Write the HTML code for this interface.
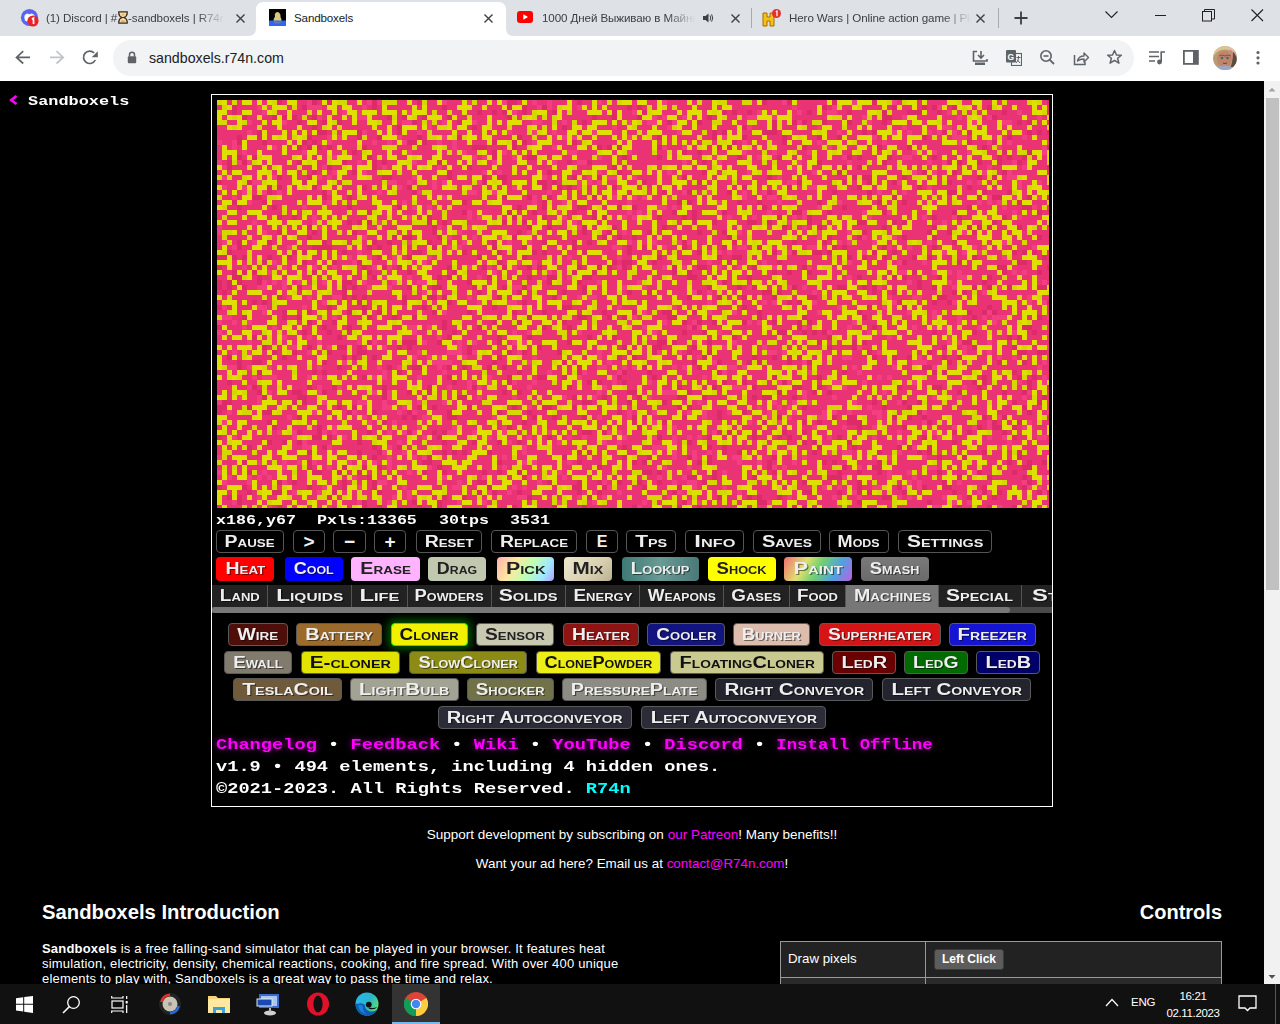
<!DOCTYPE html><html><head><meta charset="utf-8"><title>Sandboxels</title><style>
*{box-sizing:border-box}
html,body{margin:0;padding:0}
body{width:1280px;height:1024px;overflow:hidden;position:relative;background:#000;font-family:"Liberation Sans",sans-serif}
.a{position:absolute}
.px{font-family:"Liberation Mono",monospace;font-weight:bold;white-space:nowrap}
.sx{display:inline-block;transform-origin:0 50%}
.btn{position:absolute;border:1px solid #5a5a5a;border-radius:4px;display:flex;align-items:center;justify-content:center;overflow:visible}
.btn span,.cat span{font-family:"Liberation Sans",sans-serif;font-weight:bold;font-variant:small-caps;font-size:16px;white-space:nowrap;display:inline-block;text-shadow:1px 1px 0 rgba(0,0,0,.5);line-height:1}
.cat{position:absolute;height:22px;display:flex;align-items:center;justify-content:center;border-right:1px solid #555}
</style></head><body><div class="a" style="left:0;top:0;width:1280px;height:36px;background:#dee1e6"></div><div class="a" style="left:0;top:36px;width:1280px;height:45px;background:#fff"></div><svg class="a" style="left:248px;top:0" width="266" height="36"><path d="M0 36 Q8 36 8 28 V10 Q8 2 16 2 H250 Q258 2 258 10 V28 Q258 36 266 36 Z" fill="#fff"/></svg><svg class="a" style="left:20px;top:8px" width="20" height="20"><circle cx="9.5" cy="9.5" r="8.6" fill="#5865f2"/><path d="M4.5 7.5 Q6 5.5 8 5.6 L8.6 6.3 Q9.5 6.1 10.4 6.3 L11 5.6 Q13 5.5 14.5 7.5 Q15 10.5 14 12.5 Q12.5 13.6 11.5 13.6 L11 12.8 Q9.5 13.2 8 12.8 L7.5 13.6 Q6.5 13.6 5 12.5 Q4 10.5 4.5 7.5Z" fill="#fff"/><circle cx="13" cy="13" r="5.6" fill="#e5252a" stroke="#dee1e6" stroke-width="0"/><path d="M11.9 11.3 L13.5 10.2 V16" stroke="#fff" stroke-width="1.7" fill="none"/></svg><div class="a" style="left:46px;top:11px;width:178px;height:17px;overflow:hidden;font-size:11.6px;letter-spacing:-0.1px;color:#3c4043;white-space:nowrap;-webkit-mask-image:linear-gradient(90deg,#000 85%,transparent)">(1) Discord | #<svg width="10" height="13" style="vertical-align:-2px;margin:0 0.5px"><path d="M0.8 0.8 H9.2 V2.2 Q9 5.5 5.8 6.5 Q9 7.5 9.2 10.8 V12.2 H0.8 V10.8 Q1 7.5 4.2 6.5 Q1 5.5 0.8 2.2Z" fill="#f3d9a0" stroke="#3a2a20" stroke-width="1.3"/><path d="M2.5 10.8 Q5 8 7.5 10.8Z M3.3 3.5 H6.7 Q5 5.5 3.3 3.5Z" fill="#e09a40"/></svg>-sandboxels | R74n</div><svg class="a" style="left:235px;top:13px" width="11" height="11"><path d="M1.5 1.5 L9.5 9.5 M9.5 1.5 L1.5 9.5" stroke="#3c4043" stroke-width="1.4"/></svg><svg class="a" style="left:269px;top:9px" width="17" height="17"><rect width="17" height="17" fill="#000"/><path d="M4.5 13 Q4.5 9 6 7.5 Q5 5 7 3.5 Q8.5 2.5 10 3.5 Q12 5 11.5 8 Q13 10 12.5 13Z" fill="#d9c77e"/><rect y="11.5" width="17" height="5.5" fill="#2f65f5"/><path d="M5 12 Q8.5 13.5 12 12 V14 Q8.5 15 5 14Z" fill="#6a7ab0"/></svg><div class="a" style="left:294px;top:11px;font-size:11.6px;letter-spacing:-0.15px;color:#202124;white-space:nowrap">Sandboxels</div><svg class="a" style="left:483px;top:13px" width="11" height="11"><path d="M1.5 1.5 L9.5 9.5 M9.5 1.5 L1.5 9.5" stroke="#3c4043" stroke-width="1.4"/></svg><svg class="a" style="left:517px;top:11px" width="17" height="13"><rect width="16" height="12" rx="3" fill="#ff0000"/><path d="M6.3 3.3 L11 6 L6.3 8.7Z" fill="#fff"/></svg><div class="a" style="left:542px;top:11px;width:153px;height:17px;overflow:hidden;font-size:11.6px;letter-spacing:-0.1px;color:#3c4043;white-space:nowrap;-webkit-mask-image:linear-gradient(90deg,#000 82%,transparent)">1000 Дней Выживаю в Майнкрафт</div><svg class="a" style="left:702px;top:12px" width="12" height="12"><path d="M1 4 H3.5 L6.5 1.5 V10.5 L3.5 8 H1Z" fill="#3c4043"/><path d="M8 3.5 Q9.5 6 8 8.5 M9.6 2.3 Q11.8 6 9.6 9.7" stroke="#3c4043" stroke-width="1" fill="none"/></svg><svg class="a" style="left:730px;top:13px" width="11" height="11"><path d="M1.5 1.5 L9.5 9.5 M9.5 1.5 L1.5 9.5" stroke="#3c4043" stroke-width="1.4"/></svg><div class="a" style="left:751px;top:8px;width:1px;height:20px;background:#a8abaf"></div><svg class="a" style="left:761px;top:8px" width="22" height="20"><path d="M2 5 H6 V9 H9 V5 H13 V18 H9 V13 H6 V18 H2Z" fill="#f2c21a" stroke="#a86a00" stroke-width="1"/><circle cx="15.5" cy="5.5" r="4.5" fill="#e0322a"/><path d="M14.8 3.8 L16 3 V8.2" stroke="#fff" stroke-width="1.2" fill="none"/></svg><div class="a" style="left:789px;top:11px;width:182px;height:17px;overflow:hidden;font-size:11.6px;letter-spacing:-0.1px;color:#3c4043;white-space:nowrap;-webkit-mask-image:linear-gradient(90deg,#000 85%,transparent)">Hero Wars | Online action game | Play</div><svg class="a" style="left:975px;top:13px" width="11" height="11"><path d="M1.5 1.5 L9.5 9.5 M9.5 1.5 L1.5 9.5" stroke="#3c4043" stroke-width="1.4"/></svg><div class="a" style="left:998px;top:8px;width:1px;height:20px;background:#a8abaf"></div><svg class="a" style="left:1013px;top:10px" width="16" height="16"><path d="M8 1.5 V14.5 M1.5 8 H14.5" stroke="#3c4043" stroke-width="1.8"/></svg><svg class="a" style="left:1104px;top:10px" width="16" height="10"><path d="M1.5 1.5 L7.5 7.5 L13.5 1.5" stroke="#202124" stroke-width="1.1" fill="none"/></svg><div class="a" style="left:1155px;top:15px;width:11px;height:1px;background:#202124"></div><svg class="a" style="left:1202px;top:9px" width="14" height="13"><rect x="0.5" y="2.5" width="9" height="9.5" fill="none" stroke="#202124" stroke-width="1"/><path d="M2.5 2.5 V0.5 H12.5 V10 H9.5" fill="none" stroke="#202124" stroke-width="1"/></svg><svg class="a" style="left:1251px;top:9px" width="13" height="13"><path d="M0.5 0.5 L12 12 M12 0.5 L0.5 12" stroke="#202124" stroke-width="1.1"/></svg><svg class="a" style="left:14px;top:49px" width="18" height="17"><path d="M2.2 8.4 H16 M9.2 2.2 L2.5 8.4 L9.2 14.5" stroke="#5f6368" stroke-width="1.7" fill="none"/></svg><svg class="a" style="left:48px;top:49px" width="18" height="17"><path d="M2 8.4 H15.5 M8.5 2.2 L15.2 8.4 L8.5 14.5" stroke="#c1c4c8" stroke-width="1.7" fill="none"/></svg><svg class="a" style="left:81px;top:49px" width="18" height="17"><path d="M14.3 11 A6.2 6.2 0 1 1 13.2 4" stroke="#5f6368" stroke-width="1.7" fill="none"/><path d="M16.8 2.2 V8.3 H10.7Z" fill="#5f6368"/></svg><div class="a" style="left:113px;top:40px;width:1021px;height:36px;background:#f1f3f4;border-radius:18px"></div><svg class="a" style="left:127px;top:51px" width="10" height="13"><path d="M2.5 5.5 V3.8 A2.5 2.5 0 0 1 7.5 3.8 V5.5" stroke="#5f6368" stroke-width="1.5" fill="none"/><rect x="0.8" y="5.3" width="8.4" height="7" rx="1" fill="#5f6368"/></svg><div class="a" style="left:149px;top:50px;font-size:14.2px;color:#202124;white-space:nowrap">sandboxels.r74n.com</div><svg class="a" style="left:972px;top:50px" width="17" height="16"><path d="M5 1.5 H1.5 V11 H15 V9" stroke="#5f6368" stroke-width="1.6" fill="none"/><path d="M9 1 V7.5 M6 5 L9 8 L12 5" stroke="#5f6368" stroke-width="1.6" fill="none"/><rect x="3" y="12.5" width="10" height="2.5" fill="#5f6368"/></svg><svg class="a" style="left:1006px;top:50px" width="16" height="16"><rect x="5.5" y="3.5" width="10" height="12" fill="#f1f3f4" stroke="#5f6368" stroke-width="1.1"/><rect x="0" y="0" width="10" height="12.5" rx="1" fill="#5f6368"/><text x="1.6" y="9.8" font-size="8.5" font-family="Liberation Sans" font-weight="bold" fill="#fff">G</text><path d="M10.5 7.5 H14.5 M12.5 6 V7.5 Q12.5 11 10 13 M11.5 10 L14 13" stroke="#5f6368" stroke-width="1" fill="none"/></svg><svg class="a" style="left:1039px;top:49px" width="16" height="16"><circle cx="7" cy="7" r="5.2" stroke="#5f6368" stroke-width="1.6" fill="none"/><path d="M4.5 7 H9.5" stroke="#5f6368" stroke-width="1.6"/><path d="M10.8 10.8 L15 15" stroke="#5f6368" stroke-width="1.8"/></svg><svg class="a" style="left:1073px;top:50px" width="17" height="16"><path d="M1.5 5 V14.5 H12 V12" stroke="#5f6368" stroke-width="1.5" fill="none"/><path d="M4.5 11 Q5.5 6 11 6 V3 L15.5 7.5 L11 12 V9 Q7 9 4.5 11Z" stroke="#5f6368" stroke-width="1.4" fill="none" stroke-linejoin="round"/></svg><svg class="a" style="left:1106px;top:49px" width="17" height="16"><path d="M8.5 1.5 L10.5 6 L15.3 6.2 L11.6 9.3 L12.9 14.2 L8.5 11.4 L4.1 14.2 L5.4 9.3 L1.7 6.2 L6.5 6 Z" stroke="#5f6368" stroke-width="1.5" fill="none" stroke-linejoin="round"/></svg><svg class="a" style="left:1148px;top:50px" width="19" height="15"><path d="M1 2 H11 M1 6.5 H11 M1 11 H7" stroke="#5f6368" stroke-width="1.6"/><path d="M13.2 12 V2 H17" stroke="#5f6368" stroke-width="1.6" fill="none"/><circle cx="11.5" cy="12" r="2.4" fill="#5f6368"/></svg><svg class="a" style="left:1183px;top:50px" width="16" height="15"><rect x="0.9" y="0.9" width="14" height="13" fill="none" stroke="#5f6368" stroke-width="1.8"/><rect x="10" y="1" width="5" height="13" fill="#5f6368"/></svg><svg class="a" style="left:1213px;top:46px" width="24" height="24"><defs><clipPath id="av"><circle cx="12" cy="12" r="12"/></clipPath></defs><g clip-path="url(#av)"><rect width="24" height="24" fill="#b89a78"/><path d="M0 0 H24 V8 Q16 2 8 4 Q2 6 0 12Z" fill="#dcc594"/><path d="M20 6 Q24 10 24 16 V24 H16 Q20 18 20 6Z" fill="#5a4a40"/><ellipse cx="11.5" cy="13" rx="7.5" ry="8" fill="#c28468"/><path d="M6 10 Q9 8 12 10 Q15 8 18 10" stroke="#8a5040" stroke-width="1" fill="none"/><circle cx="9" cy="12" r="1.3" fill="#3c6a70"/><circle cx="14.5" cy="12" r="1.3" fill="#3c6a70"/><path d="M10 17 Q12 18 14 17" stroke="#7a3a30" stroke-width="1" fill="none"/><path d="M4 21 Q12 18 19 21 V24 H4Z" fill="#9aa8c8"/><path d="M17 4 Q20 6 19 9" stroke="#e070a0" stroke-width="1.3" fill="none"/></g></svg><svg class="a" style="left:1255px;top:50px" width="6" height="16"><circle cx="3" cy="2.5" r="1.6" fill="#5f6368"/><circle cx="3" cy="7.8" r="1.6" fill="#5f6368"/><circle cx="3" cy="13" r="1.6" fill="#5f6368"/></svg><svg width="832" height="408" style="position:absolute;left:217px;top:100px;display:block" shape-rendering="crispEdges"><rect width="832" height="408" fill="#ea3374"/><path fill="#dd2b6a" d="M60 0h5v5h-5zM95 0h5v5h-5zM110 0h5v5h-5zM155 0h5v5h-5zM200 0h5v5h-5zM290 0h5v5h-5zM295 0h5v5h-5zM360 0h5v5h-5zM545 0h5v5h-5zM570 0h5v5h-5zM615 0h5v5h-5zM655 0h5v5h-5zM830 0h5v5h-5zM15 5h5v5h-5zM85 5h5v5h-5zM155 5h5v5h-5zM225 5h5v5h-5zM290 5h5v5h-5zM305 5h5v5h-5zM325 5h5v5h-5zM410 5h5v5h-5zM420 5h5v5h-5zM605 5h5v5h-5zM675 5h5v5h-5zM705 5h5v5h-5zM715 5h5v5h-5zM735 5h5v5h-5zM770 5h5v5h-5zM15 10h5v5h-5zM260 10h5v5h-5zM275 10h5v5h-5zM285 10h5v5h-5zM305 10h5v5h-5zM335 10h5v5h-5zM395 10h5v5h-5zM425 10h5v5h-5zM505 10h5v5h-5zM515 10h5v5h-5zM530 10h5v5h-5zM590 10h5v5h-5zM630 10h5v5h-5zM665 10h5v5h-5zM690 10h5v5h-5zM695 10h5v5h-5zM700 10h5v5h-5zM720 10h5v5h-5zM785 10h5v5h-5zM25 15h5v5h-5zM55 15h5v5h-5zM65 15h5v5h-5zM75 15h5v5h-5zM95 15h5v5h-5zM170 15h5v5h-5zM185 15h5v5h-5zM205 15h5v5h-5zM230 15h5v5h-5zM290 15h5v5h-5zM375 15h5v5h-5zM395 15h5v5h-5zM420 15h5v5h-5zM490 15h5v5h-5zM665 15h5v5h-5zM670 15h5v5h-5zM775 15h5v5h-5zM80 20h5v5h-5zM105 20h5v5h-5zM120 20h5v5h-5zM195 20h5v5h-5zM240 20h5v5h-5zM365 20h5v5h-5zM450 20h5v5h-5zM480 20h5v5h-5zM555 20h5v5h-5zM575 20h5v5h-5zM585 20h5v5h-5zM605 20h5v5h-5zM630 20h5v5h-5zM665 20h5v5h-5zM800 20h5v5h-5zM810 20h5v5h-5zM95 25h5v5h-5zM180 25h5v5h-5zM255 25h5v5h-5zM345 25h5v5h-5zM525 25h5v5h-5zM555 25h5v5h-5zM40 30h5v5h-5zM100 30h5v5h-5zM105 30h5v5h-5zM140 30h5v5h-5zM180 30h5v5h-5zM495 30h5v5h-5zM505 30h5v5h-5zM545 30h5v5h-5zM550 30h5v5h-5zM555 30h5v5h-5zM645 30h5v5h-5zM655 30h5v5h-5zM725 30h5v5h-5zM750 30h5v5h-5zM810 30h5v5h-5zM820 30h5v5h-5zM830 30h5v5h-5zM20 35h5v5h-5zM40 35h5v5h-5zM90 35h5v5h-5zM140 35h5v5h-5zM160 35h5v5h-5zM200 35h5v5h-5zM240 35h5v5h-5zM300 35h5v5h-5zM440 35h5v5h-5zM495 35h5v5h-5zM525 35h5v5h-5zM565 35h5v5h-5zM600 35h5v5h-5zM620 35h5v5h-5zM705 35h5v5h-5zM790 35h5v5h-5zM20 40h5v5h-5zM45 40h5v5h-5zM85 40h5v5h-5zM95 40h5v5h-5zM190 40h5v5h-5zM195 40h5v5h-5zM205 40h5v5h-5zM275 40h5v5h-5zM295 40h5v5h-5zM305 40h5v5h-5zM355 40h5v5h-5zM515 40h5v5h-5zM565 40h5v5h-5zM750 40h5v5h-5zM775 40h5v5h-5zM80 45h5v5h-5zM90 45h5v5h-5zM100 45h5v5h-5zM110 45h5v5h-5zM145 45h5v5h-5zM255 45h5v5h-5zM260 45h5v5h-5zM265 45h5v5h-5zM295 45h5v5h-5zM380 45h5v5h-5zM390 45h5v5h-5zM400 45h5v5h-5zM440 45h5v5h-5zM500 45h5v5h-5zM510 45h5v5h-5zM585 45h5v5h-5zM660 45h5v5h-5zM690 45h5v5h-5zM765 45h5v5h-5zM830 45h5v5h-5zM135 50h5v5h-5zM275 50h5v5h-5zM465 50h5v5h-5zM480 50h5v5h-5zM785 50h5v5h-5zM810 50h5v5h-5zM20 55h5v5h-5zM35 55h5v5h-5zM150 55h5v5h-5zM275 55h5v5h-5zM310 55h5v5h-5zM315 55h5v5h-5zM405 55h5v5h-5zM440 55h5v5h-5zM520 55h5v5h-5zM560 55h5v5h-5zM630 55h5v5h-5zM640 55h5v5h-5zM670 55h5v5h-5zM715 55h5v5h-5zM780 55h5v5h-5zM790 55h5v5h-5zM805 55h5v5h-5zM10 60h5v5h-5zM25 60h5v5h-5zM80 60h5v5h-5zM125 60h5v5h-5zM155 60h5v5h-5zM165 60h5v5h-5zM220 60h5v5h-5zM350 60h5v5h-5zM370 60h5v5h-5zM485 60h5v5h-5zM600 60h5v5h-5zM665 60h5v5h-5zM730 60h5v5h-5zM740 60h5v5h-5zM760 60h5v5h-5zM780 60h5v5h-5zM800 60h5v5h-5zM10 65h5v5h-5zM110 65h5v5h-5zM155 65h5v5h-5zM250 65h5v5h-5zM395 65h5v5h-5zM625 65h5v5h-5zM640 65h5v5h-5zM830 65h5v5h-5zM95 70h5v5h-5zM135 70h5v5h-5zM230 70h5v5h-5zM330 70h5v5h-5zM400 70h5v5h-5zM485 70h5v5h-5zM620 70h5v5h-5zM705 70h5v5h-5zM735 70h5v5h-5zM785 70h5v5h-5zM60 75h5v5h-5zM90 75h5v5h-5zM165 75h5v5h-5zM170 75h5v5h-5zM230 75h5v5h-5zM265 75h5v5h-5zM280 75h5v5h-5zM285 75h5v5h-5zM355 75h5v5h-5zM380 75h5v5h-5zM465 75h5v5h-5zM550 75h5v5h-5zM635 75h5v5h-5zM645 75h5v5h-5zM650 75h5v5h-5zM685 75h5v5h-5zM760 75h5v5h-5zM775 75h5v5h-5zM0 80h5v5h-5zM30 80h5v5h-5zM85 80h5v5h-5zM265 80h5v5h-5zM285 80h5v5h-5zM320 80h5v5h-5zM325 80h5v5h-5zM335 80h5v5h-5zM425 80h5v5h-5zM480 80h5v5h-5zM580 80h5v5h-5zM625 80h5v5h-5zM650 80h5v5h-5zM675 80h5v5h-5zM730 80h5v5h-5zM50 85h5v5h-5zM60 85h5v5h-5zM95 85h5v5h-5zM145 85h5v5h-5zM190 85h5v5h-5zM325 85h5v5h-5zM340 85h5v5h-5zM350 85h5v5h-5zM395 85h5v5h-5zM525 85h5v5h-5zM570 85h5v5h-5zM640 85h5v5h-5zM700 85h5v5h-5zM750 85h5v5h-5zM50 90h5v5h-5zM105 90h5v5h-5zM195 90h5v5h-5zM445 90h5v5h-5zM470 90h5v5h-5zM510 90h5v5h-5zM550 90h5v5h-5zM615 90h5v5h-5zM650 90h5v5h-5zM730 90h5v5h-5zM735 90h5v5h-5zM765 90h5v5h-5zM790 90h5v5h-5zM35 95h5v5h-5zM40 95h5v5h-5zM105 95h5v5h-5zM130 95h5v5h-5zM285 95h5v5h-5zM310 95h5v5h-5zM330 95h5v5h-5zM375 95h5v5h-5zM675 95h5v5h-5zM760 95h5v5h-5zM775 95h5v5h-5zM780 95h5v5h-5zM810 95h5v5h-5zM830 95h5v5h-5zM15 100h5v5h-5zM45 100h5v5h-5zM245 100h5v5h-5zM325 100h5v5h-5zM460 100h5v5h-5zM470 100h5v5h-5zM520 100h5v5h-5zM540 100h5v5h-5zM600 100h5v5h-5zM660 100h5v5h-5zM685 100h5v5h-5zM800 100h5v5h-5zM20 105h5v5h-5zM55 105h5v5h-5zM130 105h5v5h-5zM180 105h5v5h-5zM300 105h5v5h-5zM325 105h5v5h-5zM360 105h5v5h-5zM365 105h5v5h-5zM400 105h5v5h-5zM415 105h5v5h-5zM545 105h5v5h-5zM625 105h5v5h-5zM750 105h5v5h-5zM805 105h5v5h-5zM810 105h5v5h-5zM150 110h5v5h-5zM245 110h5v5h-5zM290 110h5v5h-5zM315 110h5v5h-5zM355 110h5v5h-5zM375 110h5v5h-5zM455 110h5v5h-5zM475 110h5v5h-5zM505 110h5v5h-5zM575 110h5v5h-5zM580 110h5v5h-5zM610 110h5v5h-5zM665 110h5v5h-5zM735 110h5v5h-5zM820 110h5v5h-5zM60 115h5v5h-5zM75 115h5v5h-5zM210 115h5v5h-5zM295 115h5v5h-5zM325 115h5v5h-5zM375 115h5v5h-5zM385 115h5v5h-5zM440 115h5v5h-5zM465 115h5v5h-5zM475 115h5v5h-5zM560 115h5v5h-5zM590 115h5v5h-5zM715 115h5v5h-5zM740 115h5v5h-5zM785 115h5v5h-5zM130 120h5v5h-5zM140 120h5v5h-5zM150 120h5v5h-5zM210 120h5v5h-5zM225 120h5v5h-5zM285 120h5v5h-5zM305 120h5v5h-5zM475 120h5v5h-5zM495 120h5v5h-5zM530 120h5v5h-5zM535 120h5v5h-5zM550 120h5v5h-5zM590 120h5v5h-5zM640 120h5v5h-5zM645 120h5v5h-5zM675 120h5v5h-5zM685 120h5v5h-5zM775 120h5v5h-5zM90 125h5v5h-5zM215 125h5v5h-5zM310 125h5v5h-5zM330 125h5v5h-5zM365 125h5v5h-5zM395 125h5v5h-5zM445 125h5v5h-5zM565 125h5v5h-5zM600 125h5v5h-5zM665 125h5v5h-5zM715 125h5v5h-5zM750 125h5v5h-5zM760 125h5v5h-5zM770 125h5v5h-5zM800 125h5v5h-5zM60 130h5v5h-5zM95 130h5v5h-5zM135 130h5v5h-5zM215 130h5v5h-5zM300 130h5v5h-5zM365 130h5v5h-5zM390 130h5v5h-5zM430 130h5v5h-5zM480 130h5v5h-5zM505 130h5v5h-5zM645 130h5v5h-5zM710 130h5v5h-5zM730 130h5v5h-5zM755 130h5v5h-5zM90 135h5v5h-5zM175 135h5v5h-5zM185 135h5v5h-5zM190 135h5v5h-5zM220 135h5v5h-5zM295 135h5v5h-5zM385 135h5v5h-5zM400 135h5v5h-5zM415 135h5v5h-5zM510 135h5v5h-5zM610 135h5v5h-5zM640 135h5v5h-5zM685 135h5v5h-5zM715 135h5v5h-5zM820 135h5v5h-5zM20 140h5v5h-5zM50 140h5v5h-5zM105 140h5v5h-5zM155 140h5v5h-5zM170 140h5v5h-5zM210 140h5v5h-5zM275 140h5v5h-5zM325 140h5v5h-5zM355 140h5v5h-5zM370 140h5v5h-5zM465 140h5v5h-5zM515 140h5v5h-5zM575 140h5v5h-5zM605 140h5v5h-5zM735 140h5v5h-5zM20 145h5v5h-5zM95 145h5v5h-5zM100 145h5v5h-5zM105 145h5v5h-5zM110 145h5v5h-5zM150 145h5v5h-5zM160 145h5v5h-5zM215 145h5v5h-5zM275 145h5v5h-5zM305 145h5v5h-5zM355 145h5v5h-5zM410 145h5v5h-5zM425 145h5v5h-5zM465 145h5v5h-5zM505 145h5v5h-5zM540 145h5v5h-5zM615 145h5v5h-5zM625 145h5v5h-5zM665 145h5v5h-5zM715 145h5v5h-5zM10 150h5v5h-5zM75 150h5v5h-5zM85 150h5v5h-5zM125 150h5v5h-5zM195 150h5v5h-5zM200 150h5v5h-5zM245 150h5v5h-5zM280 150h5v5h-5zM315 150h5v5h-5zM325 150h5v5h-5zM365 150h5v5h-5zM410 150h5v5h-5zM480 150h5v5h-5zM555 150h5v5h-5zM575 150h5v5h-5zM595 150h5v5h-5zM600 150h5v5h-5zM610 150h5v5h-5zM655 150h5v5h-5zM675 150h5v5h-5zM795 150h5v5h-5zM805 150h5v5h-5zM815 150h5v5h-5zM0 155h5v5h-5zM5 155h5v5h-5zM15 155h5v5h-5zM25 155h5v5h-5zM50 155h5v5h-5zM70 155h5v5h-5zM160 155h5v5h-5zM190 155h5v5h-5zM260 155h5v5h-5zM305 155h5v5h-5zM440 155h5v5h-5zM500 155h5v5h-5zM515 155h5v5h-5zM520 155h5v5h-5zM630 155h5v5h-5zM645 155h5v5h-5zM665 155h5v5h-5zM695 155h5v5h-5zM710 155h5v5h-5zM755 155h5v5h-5zM825 155h5v5h-5zM45 160h5v5h-5zM85 160h5v5h-5zM115 160h5v5h-5zM140 160h5v5h-5zM280 160h5v5h-5zM395 160h5v5h-5zM405 160h5v5h-5zM410 160h5v5h-5zM435 160h5v5h-5zM510 160h5v5h-5zM560 160h5v5h-5zM685 160h5v5h-5zM740 160h5v5h-5zM800 160h5v5h-5zM805 160h5v5h-5zM0 165h5v5h-5zM145 165h5v5h-5zM165 165h5v5h-5zM180 165h5v5h-5zM230 165h5v5h-5zM265 165h5v5h-5zM285 165h5v5h-5zM310 165h5v5h-5zM320 165h5v5h-5zM360 165h5v5h-5zM380 165h5v5h-5zM390 165h5v5h-5zM405 165h5v5h-5zM455 165h5v5h-5zM480 165h5v5h-5zM485 165h5v5h-5zM535 165h5v5h-5zM585 165h5v5h-5zM780 165h5v5h-5zM785 165h5v5h-5zM830 165h5v5h-5zM15 170h5v5h-5zM25 170h5v5h-5zM35 170h5v5h-5zM95 170h5v5h-5zM150 170h5v5h-5zM190 170h5v5h-5zM235 170h5v5h-5zM355 170h5v5h-5zM375 170h5v5h-5zM455 170h5v5h-5zM470 170h5v5h-5zM555 170h5v5h-5zM570 170h5v5h-5zM590 170h5v5h-5zM695 170h5v5h-5zM785 170h5v5h-5zM820 170h5v5h-5zM15 175h5v5h-5zM20 175h5v5h-5zM40 175h5v5h-5zM155 175h5v5h-5zM220 175h5v5h-5zM230 175h5v5h-5zM270 175h5v5h-5zM310 175h5v5h-5zM330 175h5v5h-5zM335 175h5v5h-5zM365 175h5v5h-5zM370 175h5v5h-5zM470 175h5v5h-5zM475 175h5v5h-5zM530 175h5v5h-5zM640 175h5v5h-5zM675 175h5v5h-5zM685 175h5v5h-5zM720 175h5v5h-5zM770 175h5v5h-5zM0 180h5v5h-5zM10 180h5v5h-5zM20 180h5v5h-5zM40 180h5v5h-5zM125 180h5v5h-5zM130 180h5v5h-5zM250 180h5v5h-5zM330 180h5v5h-5zM360 180h5v5h-5zM505 180h5v5h-5zM700 180h5v5h-5zM765 180h5v5h-5zM0 185h5v5h-5zM10 185h5v5h-5zM25 185h5v5h-5zM80 185h5v5h-5zM125 185h5v5h-5zM135 185h5v5h-5zM190 185h5v5h-5zM215 185h5v5h-5zM220 185h5v5h-5zM255 185h5v5h-5zM285 185h5v5h-5zM305 185h5v5h-5zM365 185h5v5h-5zM490 185h5v5h-5zM520 185h5v5h-5zM535 185h5v5h-5zM575 185h5v5h-5zM620 185h5v5h-5zM625 185h5v5h-5zM645 185h5v5h-5zM655 185h5v5h-5zM700 185h5v5h-5zM715 185h5v5h-5zM755 185h5v5h-5zM770 185h5v5h-5zM790 185h5v5h-5zM820 185h5v5h-5zM825 185h5v5h-5zM5 190h5v5h-5zM125 190h5v5h-5zM260 190h5v5h-5zM300 190h5v5h-5zM345 190h5v5h-5zM365 190h5v5h-5zM410 190h5v5h-5zM430 190h5v5h-5zM480 190h5v5h-5zM545 190h5v5h-5zM550 190h5v5h-5zM560 190h5v5h-5zM655 190h5v5h-5zM675 190h5v5h-5zM735 190h5v5h-5zM745 190h5v5h-5zM60 195h5v5h-5zM125 195h5v5h-5zM135 195h5v5h-5zM145 195h5v5h-5zM185 195h5v5h-5zM210 195h5v5h-5zM215 195h5v5h-5zM225 195h5v5h-5zM280 195h5v5h-5zM335 195h5v5h-5zM470 195h5v5h-5zM500 195h5v5h-5zM525 195h5v5h-5zM555 195h5v5h-5zM590 195h5v5h-5zM595 195h5v5h-5zM720 195h5v5h-5zM725 195h5v5h-5zM35 200h5v5h-5zM45 200h5v5h-5zM140 200h5v5h-5zM185 200h5v5h-5zM230 200h5v5h-5zM305 200h5v5h-5zM570 200h5v5h-5zM580 200h5v5h-5zM680 200h5v5h-5zM715 200h5v5h-5zM730 200h5v5h-5zM830 200h5v5h-5zM0 205h5v5h-5zM110 205h5v5h-5zM145 205h5v5h-5zM205 205h5v5h-5zM275 205h5v5h-5zM345 205h5v5h-5zM350 205h5v5h-5zM525 205h5v5h-5zM650 205h5v5h-5zM685 205h5v5h-5zM770 205h5v5h-5zM65 210h5v5h-5zM90 210h5v5h-5zM130 210h5v5h-5zM145 210h5v5h-5zM160 210h5v5h-5zM215 210h5v5h-5zM250 210h5v5h-5zM295 210h5v5h-5zM325 210h5v5h-5zM385 210h5v5h-5zM415 210h5v5h-5zM445 210h5v5h-5zM450 210h5v5h-5zM475 210h5v5h-5zM540 210h5v5h-5zM640 210h5v5h-5zM750 210h5v5h-5zM765 210h5v5h-5zM775 210h5v5h-5zM25 215h5v5h-5zM65 215h5v5h-5zM80 215h5v5h-5zM150 215h5v5h-5zM175 215h5v5h-5zM195 215h5v5h-5zM310 215h5v5h-5zM360 215h5v5h-5zM365 215h5v5h-5zM390 215h5v5h-5zM405 215h5v5h-5zM450 215h5v5h-5zM455 215h5v5h-5zM540 215h5v5h-5zM585 215h5v5h-5zM645 215h5v5h-5zM755 215h5v5h-5zM820 215h5v5h-5zM90 220h5v5h-5zM115 220h5v5h-5zM225 220h5v5h-5zM275 220h5v5h-5zM300 220h5v5h-5zM345 220h5v5h-5zM465 220h5v5h-5zM480 220h5v5h-5zM495 220h5v5h-5zM525 220h5v5h-5zM555 220h5v5h-5zM580 220h5v5h-5zM590 220h5v5h-5zM0 225h5v5h-5zM105 225h5v5h-5zM130 225h5v5h-5zM225 225h5v5h-5zM260 225h5v5h-5zM325 225h5v5h-5zM350 225h5v5h-5zM475 225h5v5h-5zM580 225h5v5h-5zM655 225h5v5h-5zM805 225h5v5h-5zM810 225h5v5h-5zM85 230h5v5h-5zM110 230h5v5h-5zM130 230h5v5h-5zM235 230h5v5h-5zM465 230h5v5h-5zM485 230h5v5h-5zM560 230h5v5h-5zM565 230h5v5h-5zM585 230h5v5h-5zM595 230h5v5h-5zM605 230h5v5h-5zM715 230h5v5h-5zM755 230h5v5h-5zM815 230h5v5h-5zM35 235h5v5h-5zM120 235h5v5h-5zM230 235h5v5h-5zM280 235h5v5h-5zM310 235h5v5h-5zM370 235h5v5h-5zM395 235h5v5h-5zM515 235h5v5h-5zM610 235h5v5h-5zM790 235h5v5h-5zM800 235h5v5h-5zM150 240h5v5h-5zM185 240h5v5h-5zM190 240h5v5h-5zM195 240h5v5h-5zM220 240h5v5h-5zM280 240h5v5h-5zM350 240h5v5h-5zM440 240h5v5h-5zM445 240h5v5h-5zM455 240h5v5h-5zM490 240h5v5h-5zM600 240h5v5h-5zM635 240h5v5h-5zM645 240h5v5h-5zM745 240h5v5h-5zM750 240h5v5h-5zM45 245h5v5h-5zM90 245h5v5h-5zM120 245h5v5h-5zM125 245h5v5h-5zM140 245h5v5h-5zM180 245h5v5h-5zM190 245h5v5h-5zM250 245h5v5h-5zM320 245h5v5h-5zM405 245h5v5h-5zM435 245h5v5h-5zM440 245h5v5h-5zM475 245h5v5h-5zM610 245h5v5h-5zM635 245h5v5h-5zM725 245h5v5h-5zM755 245h5v5h-5zM795 245h5v5h-5zM55 250h5v5h-5zM75 250h5v5h-5zM110 250h5v5h-5zM140 250h5v5h-5zM145 250h5v5h-5zM250 250h5v5h-5zM290 250h5v5h-5zM305 250h5v5h-5zM340 250h5v5h-5zM435 250h5v5h-5zM470 250h5v5h-5zM490 250h5v5h-5zM650 250h5v5h-5zM710 250h5v5h-5zM800 250h5v5h-5zM805 250h5v5h-5zM820 250h5v5h-5zM825 250h5v5h-5zM10 255h5v5h-5zM65 255h5v5h-5zM125 255h5v5h-5zM135 255h5v5h-5zM155 255h5v5h-5zM280 255h5v5h-5zM400 255h5v5h-5zM415 255h5v5h-5zM465 255h5v5h-5zM485 255h5v5h-5zM535 255h5v5h-5zM555 255h5v5h-5zM570 255h5v5h-5zM580 255h5v5h-5zM655 255h5v5h-5zM675 255h5v5h-5zM690 255h5v5h-5zM725 255h5v5h-5zM740 255h5v5h-5zM20 260h5v5h-5zM35 260h5v5h-5zM40 260h5v5h-5zM105 260h5v5h-5zM275 260h5v5h-5zM345 260h5v5h-5zM475 260h5v5h-5zM500 260h5v5h-5zM530 260h5v5h-5zM540 260h5v5h-5zM570 260h5v5h-5zM590 260h5v5h-5zM730 260h5v5h-5zM780 260h5v5h-5zM805 260h5v5h-5zM20 265h5v5h-5zM120 265h5v5h-5zM170 265h5v5h-5zM195 265h5v5h-5zM200 265h5v5h-5zM230 265h5v5h-5zM245 265h5v5h-5zM270 265h5v5h-5zM285 265h5v5h-5zM360 265h5v5h-5zM425 265h5v5h-5zM480 265h5v5h-5zM705 265h5v5h-5zM710 265h5v5h-5zM40 270h5v5h-5zM95 270h5v5h-5zM105 270h5v5h-5zM180 270h5v5h-5zM300 270h5v5h-5zM360 270h5v5h-5zM405 270h5v5h-5zM430 270h5v5h-5zM500 270h5v5h-5zM625 270h5v5h-5zM715 270h5v5h-5zM725 270h5v5h-5zM795 270h5v5h-5zM145 275h5v5h-5zM230 275h5v5h-5zM290 275h5v5h-5zM320 275h5v5h-5zM325 275h5v5h-5zM345 275h5v5h-5zM400 275h5v5h-5zM435 275h5v5h-5zM555 275h5v5h-5zM600 275h5v5h-5zM765 275h5v5h-5zM800 275h5v5h-5zM815 275h5v5h-5zM10 280h5v5h-5zM235 280h5v5h-5zM290 280h5v5h-5zM370 280h5v5h-5zM380 280h5v5h-5zM405 280h5v5h-5zM505 280h5v5h-5zM525 280h5v5h-5zM565 280h5v5h-5zM755 280h5v5h-5zM765 280h5v5h-5zM810 280h5v5h-5zM35 285h5v5h-5zM90 285h5v5h-5zM115 285h5v5h-5zM165 285h5v5h-5zM210 285h5v5h-5zM255 285h5v5h-5zM350 285h5v5h-5zM460 285h5v5h-5zM495 285h5v5h-5zM535 285h5v5h-5zM575 285h5v5h-5zM580 285h5v5h-5zM600 285h5v5h-5zM680 285h5v5h-5zM715 285h5v5h-5zM720 285h5v5h-5zM760 285h5v5h-5zM810 285h5v5h-5zM830 285h5v5h-5zM40 290h5v5h-5zM75 290h5v5h-5zM80 290h5v5h-5zM105 290h5v5h-5zM165 290h5v5h-5zM190 290h5v5h-5zM210 290h5v5h-5zM285 290h5v5h-5zM300 290h5v5h-5zM410 290h5v5h-5zM415 290h5v5h-5zM470 290h5v5h-5zM560 290h5v5h-5zM595 290h5v5h-5zM610 290h5v5h-5zM740 290h5v5h-5zM785 290h5v5h-5zM805 290h5v5h-5zM45 295h5v5h-5zM80 295h5v5h-5zM85 295h5v5h-5zM165 295h5v5h-5zM240 295h5v5h-5zM245 295h5v5h-5zM355 295h5v5h-5zM385 295h5v5h-5zM420 295h5v5h-5zM460 295h5v5h-5zM465 295h5v5h-5zM485 295h5v5h-5zM535 295h5v5h-5zM545 295h5v5h-5zM550 295h5v5h-5zM575 295h5v5h-5zM825 295h5v5h-5zM5 300h5v5h-5zM10 300h5v5h-5zM75 300h5v5h-5zM85 300h5v5h-5zM365 300h5v5h-5zM370 300h5v5h-5zM410 300h5v5h-5zM445 300h5v5h-5zM655 300h5v5h-5zM685 300h5v5h-5zM700 300h5v5h-5zM795 300h5v5h-5zM820 300h5v5h-5zM0 305h5v5h-5zM5 305h5v5h-5zM30 305h5v5h-5zM120 305h5v5h-5zM135 305h5v5h-5zM200 305h5v5h-5zM215 305h5v5h-5zM250 305h5v5h-5zM295 305h5v5h-5zM325 305h5v5h-5zM330 305h5v5h-5zM355 305h5v5h-5zM460 305h5v5h-5zM470 305h5v5h-5zM585 305h5v5h-5zM665 305h5v5h-5zM690 305h5v5h-5zM805 305h5v5h-5zM0 310h5v5h-5zM45 310h5v5h-5zM50 310h5v5h-5zM130 310h5v5h-5zM155 310h5v5h-5zM190 310h5v5h-5zM230 310h5v5h-5zM280 310h5v5h-5zM310 310h5v5h-5zM400 310h5v5h-5zM500 310h5v5h-5zM525 310h5v5h-5zM700 310h5v5h-5zM810 310h5v5h-5zM80 315h5v5h-5zM185 315h5v5h-5zM195 315h5v5h-5zM230 315h5v5h-5zM235 315h5v5h-5zM315 315h5v5h-5zM335 315h5v5h-5zM365 315h5v5h-5zM415 315h5v5h-5zM465 315h5v5h-5zM500 315h5v5h-5zM560 315h5v5h-5zM615 315h5v5h-5zM630 315h5v5h-5zM635 315h5v5h-5zM675 315h5v5h-5zM690 315h5v5h-5zM705 315h5v5h-5zM765 315h5v5h-5zM785 315h5v5h-5zM830 315h5v5h-5zM50 320h5v5h-5zM165 320h5v5h-5zM305 320h5v5h-5zM415 320h5v5h-5zM445 320h5v5h-5zM545 320h5v5h-5zM585 320h5v5h-5zM600 320h5v5h-5zM630 320h5v5h-5zM635 320h5v5h-5zM640 320h5v5h-5zM710 320h5v5h-5zM775 320h5v5h-5zM800 320h5v5h-5zM55 325h5v5h-5zM100 325h5v5h-5zM290 325h5v5h-5zM420 325h5v5h-5zM640 325h5v5h-5zM685 325h5v5h-5zM760 325h5v5h-5zM775 325h5v5h-5zM780 325h5v5h-5zM795 325h5v5h-5zM80 330h5v5h-5zM100 330h5v5h-5zM150 330h5v5h-5zM190 330h5v5h-5zM215 330h5v5h-5zM225 330h5v5h-5zM365 330h5v5h-5zM370 330h5v5h-5zM385 330h5v5h-5zM500 330h5v5h-5zM510 330h5v5h-5zM535 330h5v5h-5zM565 330h5v5h-5zM585 330h5v5h-5zM735 330h5v5h-5zM750 330h5v5h-5zM785 330h5v5h-5zM0 335h5v5h-5zM95 335h5v5h-5zM100 335h5v5h-5zM110 335h5v5h-5zM220 335h5v5h-5zM330 335h5v5h-5zM440 335h5v5h-5zM490 335h5v5h-5zM535 335h5v5h-5zM560 335h5v5h-5zM570 335h5v5h-5zM620 335h5v5h-5zM705 335h5v5h-5zM795 335h5v5h-5zM50 340h5v5h-5zM65 340h5v5h-5zM80 340h5v5h-5zM140 340h5v5h-5zM225 340h5v5h-5zM255 340h5v5h-5zM280 340h5v5h-5zM300 340h5v5h-5zM470 340h5v5h-5zM585 340h5v5h-5zM595 340h5v5h-5zM630 340h5v5h-5zM735 340h5v5h-5zM30 345h5v5h-5zM105 345h5v5h-5zM155 345h5v5h-5zM180 345h5v5h-5zM405 345h5v5h-5zM490 345h5v5h-5zM505 345h5v5h-5zM600 345h5v5h-5zM635 345h5v5h-5zM680 345h5v5h-5zM690 345h5v5h-5zM710 345h5v5h-5zM90 350h5v5h-5zM140 350h5v5h-5zM160 350h5v5h-5zM225 350h5v5h-5zM235 350h5v5h-5zM245 350h5v5h-5zM270 350h5v5h-5zM360 350h5v5h-5zM370 350h5v5h-5zM505 350h5v5h-5zM520 350h5v5h-5zM595 350h5v5h-5zM660 350h5v5h-5zM700 350h5v5h-5zM710 350h5v5h-5zM765 350h5v5h-5zM800 350h5v5h-5zM155 355h5v5h-5zM210 355h5v5h-5zM345 355h5v5h-5zM405 355h5v5h-5zM430 355h5v5h-5zM470 355h5v5h-5zM490 355h5v5h-5zM555 355h5v5h-5zM720 355h5v5h-5zM745 355h5v5h-5zM800 355h5v5h-5zM25 360h5v5h-5zM90 360h5v5h-5zM205 360h5v5h-5zM210 360h5v5h-5zM280 360h5v5h-5zM360 360h5v5h-5zM415 360h5v5h-5zM425 360h5v5h-5zM480 360h5v5h-5zM490 360h5v5h-5zM550 360h5v5h-5zM605 360h5v5h-5zM615 360h5v5h-5zM660 360h5v5h-5zM790 360h5v5h-5zM810 360h5v5h-5zM825 360h5v5h-5zM90 365h5v5h-5zM125 365h5v5h-5zM145 365h5v5h-5zM160 365h5v5h-5zM220 365h5v5h-5zM380 365h5v5h-5zM550 365h5v5h-5zM625 365h5v5h-5zM655 365h5v5h-5zM660 365h5v5h-5zM805 365h5v5h-5zM810 365h5v5h-5zM30 370h5v5h-5zM95 370h5v5h-5zM100 370h5v5h-5zM120 370h5v5h-5zM140 370h5v5h-5zM205 370h5v5h-5zM225 370h5v5h-5zM265 370h5v5h-5zM280 370h5v5h-5zM300 370h5v5h-5zM425 370h5v5h-5zM430 370h5v5h-5zM440 370h5v5h-5zM495 370h5v5h-5zM555 370h5v5h-5zM620 370h5v5h-5zM640 370h5v5h-5zM660 370h5v5h-5zM720 370h5v5h-5zM760 370h5v5h-5zM795 370h5v5h-5zM150 375h5v5h-5zM305 375h5v5h-5zM470 375h5v5h-5zM475 375h5v5h-5zM495 375h5v5h-5zM535 375h5v5h-5zM610 375h5v5h-5zM615 375h5v5h-5zM620 375h5v5h-5zM740 375h5v5h-5zM770 375h5v5h-5zM805 375h5v5h-5zM60 380h5v5h-5zM75 380h5v5h-5zM125 380h5v5h-5zM155 380h5v5h-5zM260 380h5v5h-5zM265 380h5v5h-5zM330 380h5v5h-5zM360 380h5v5h-5zM380 380h5v5h-5zM400 380h5v5h-5zM420 380h5v5h-5zM440 380h5v5h-5zM485 380h5v5h-5zM585 380h5v5h-5zM640 380h5v5h-5zM725 380h5v5h-5zM810 380h5v5h-5zM0 385h5v5h-5zM25 385h5v5h-5zM90 385h5v5h-5zM125 385h5v5h-5zM155 385h5v5h-5zM270 385h5v5h-5zM355 385h5v5h-5zM360 385h5v5h-5zM385 385h5v5h-5zM425 385h5v5h-5zM460 385h5v5h-5zM640 385h5v5h-5zM680 385h5v5h-5zM705 385h5v5h-5zM725 385h5v5h-5zM730 385h5v5h-5zM765 385h5v5h-5zM805 385h5v5h-5zM30 390h5v5h-5zM55 390h5v5h-5zM60 390h5v5h-5zM115 390h5v5h-5zM160 390h5v5h-5zM260 390h5v5h-5zM275 390h5v5h-5zM300 390h5v5h-5zM360 390h5v5h-5zM380 390h5v5h-5zM455 390h5v5h-5zM585 390h5v5h-5zM590 390h5v5h-5zM620 390h5v5h-5zM640 390h5v5h-5zM650 390h5v5h-5zM685 390h5v5h-5zM735 390h5v5h-5zM765 390h5v5h-5zM780 390h5v5h-5zM820 390h5v5h-5zM830 390h5v5h-5zM10 395h5v5h-5zM20 395h5v5h-5zM110 395h5v5h-5zM225 395h5v5h-5zM245 395h5v5h-5zM310 395h5v5h-5zM370 395h5v5h-5zM500 395h5v5h-5zM530 395h5v5h-5zM540 395h5v5h-5zM560 395h5v5h-5zM665 395h5v5h-5zM670 395h5v5h-5zM750 395h5v5h-5zM775 395h5v5h-5zM795 395h5v5h-5zM20 400h5v5h-5zM145 400h5v5h-5zM195 400h5v5h-5zM220 400h5v5h-5zM465 400h5v5h-5zM540 400h5v5h-5zM545 400h5v5h-5zM640 400h5v5h-5zM710 400h5v5h-5zM60 405h5v5h-5zM145 405h5v5h-5zM160 405h5v5h-5zM200 405h5v5h-5zM220 405h5v5h-5zM295 405h5v5h-5zM335 405h5v5h-5zM365 405h5v5h-5zM415 405h5v5h-5zM460 405h5v5h-5zM480 405h5v5h-5zM530 405h5v5h-5zM575 405h5v5h-5zM585 405h5v5h-5zM740 405h5v5h-5zM770 405h5v5h-5zM795 405h5v5h-5z"/><path fill="#f33e82" d="M90 0h5v5h-5zM150 0h5v5h-5zM160 0h5v5h-5zM225 0h5v5h-5zM250 0h5v5h-5zM285 0h5v5h-5zM315 0h5v5h-5zM330 0h5v5h-5zM380 0h5v5h-5zM445 0h5v5h-5zM565 0h5v5h-5zM635 0h5v5h-5zM675 0h5v5h-5zM40 5h5v5h-5zM50 5h5v5h-5zM90 5h5v5h-5zM95 5h5v5h-5zM100 5h5v5h-5zM145 5h5v5h-5zM320 5h5v5h-5zM330 5h5v5h-5zM360 5h5v5h-5zM575 5h5v5h-5zM615 5h5v5h-5zM720 5h5v5h-5zM45 10h5v5h-5zM125 10h5v5h-5zM140 10h5v5h-5zM190 10h5v5h-5zM295 10h5v5h-5zM415 10h5v5h-5zM540 10h5v5h-5zM580 10h5v5h-5zM610 10h5v5h-5zM615 10h5v5h-5zM730 10h5v5h-5zM800 10h5v5h-5zM100 15h5v5h-5zM140 15h5v5h-5zM145 15h5v5h-5zM435 15h5v5h-5zM445 15h5v5h-5zM465 15h5v5h-5zM530 15h5v5h-5zM535 15h5v5h-5zM555 15h5v5h-5zM645 15h5v5h-5zM685 15h5v5h-5zM740 15h5v5h-5zM770 15h5v5h-5zM820 15h5v5h-5zM30 20h5v5h-5zM65 20h5v5h-5zM185 20h5v5h-5zM190 20h5v5h-5zM210 20h5v5h-5zM225 20h5v5h-5zM255 20h5v5h-5zM315 20h5v5h-5zM320 20h5v5h-5zM345 20h5v5h-5zM410 20h5v5h-5zM430 20h5v5h-5zM435 20h5v5h-5zM455 20h5v5h-5zM580 20h5v5h-5zM650 20h5v5h-5zM755 20h5v5h-5zM785 20h5v5h-5zM790 20h5v5h-5zM210 25h5v5h-5zM395 25h5v5h-5zM450 25h5v5h-5zM530 25h5v5h-5zM600 25h5v5h-5zM685 25h5v5h-5zM725 25h5v5h-5zM730 25h5v5h-5zM30 30h5v5h-5zM145 30h5v5h-5zM200 30h5v5h-5zM290 30h5v5h-5zM315 30h5v5h-5zM335 30h5v5h-5zM375 30h5v5h-5zM460 30h5v5h-5zM620 30h5v5h-5zM675 30h5v5h-5zM690 30h5v5h-5zM710 30h5v5h-5zM720 30h5v5h-5zM735 30h5v5h-5zM110 35h5v5h-5zM120 35h5v5h-5zM180 35h5v5h-5zM225 35h5v5h-5zM345 35h5v5h-5zM355 35h5v5h-5zM410 35h5v5h-5zM505 35h5v5h-5zM655 35h5v5h-5zM735 35h5v5h-5zM740 35h5v5h-5zM745 35h5v5h-5zM805 35h5v5h-5zM0 40h5v5h-5zM15 40h5v5h-5zM110 40h5v5h-5zM155 40h5v5h-5zM170 40h5v5h-5zM185 40h5v5h-5zM220 40h5v5h-5zM235 40h5v5h-5zM315 40h5v5h-5zM525 40h5v5h-5zM600 40h5v5h-5zM665 40h5v5h-5zM740 40h5v5h-5zM770 40h5v5h-5zM790 40h5v5h-5zM830 40h5v5h-5zM15 45h5v5h-5zM55 45h5v5h-5zM235 45h5v5h-5zM335 45h5v5h-5zM445 45h5v5h-5zM465 45h5v5h-5zM610 45h5v5h-5zM780 45h5v5h-5zM825 45h5v5h-5zM25 50h5v5h-5zM85 50h5v5h-5zM190 50h5v5h-5zM245 50h5v5h-5zM285 50h5v5h-5zM350 50h5v5h-5zM355 50h5v5h-5zM410 50h5v5h-5zM525 50h5v5h-5zM555 50h5v5h-5zM590 50h5v5h-5zM695 50h5v5h-5zM715 50h5v5h-5zM750 50h5v5h-5zM825 50h5v5h-5zM115 55h5v5h-5zM255 55h5v5h-5zM265 55h5v5h-5zM295 55h5v5h-5zM380 55h5v5h-5zM495 55h5v5h-5zM540 55h5v5h-5zM625 55h5v5h-5zM685 55h5v5h-5zM690 55h5v5h-5zM0 60h5v5h-5zM20 60h5v5h-5zM30 60h5v5h-5zM140 60h5v5h-5zM195 60h5v5h-5zM275 60h5v5h-5zM335 60h5v5h-5zM360 60h5v5h-5zM365 60h5v5h-5zM465 60h5v5h-5zM500 60h5v5h-5zM580 60h5v5h-5zM630 60h5v5h-5zM710 60h5v5h-5zM725 60h5v5h-5zM795 60h5v5h-5zM5 65h5v5h-5zM105 65h5v5h-5zM165 65h5v5h-5zM220 65h5v5h-5zM575 65h5v5h-5zM770 65h5v5h-5zM805 65h5v5h-5zM115 70h5v5h-5zM145 70h5v5h-5zM265 70h5v5h-5zM280 70h5v5h-5zM380 70h5v5h-5zM450 70h5v5h-5zM530 70h5v5h-5zM595 70h5v5h-5zM695 70h5v5h-5zM715 70h5v5h-5zM765 70h5v5h-5zM790 70h5v5h-5zM5 75h5v5h-5zM55 75h5v5h-5zM100 75h5v5h-5zM110 75h5v5h-5zM195 75h5v5h-5zM325 75h5v5h-5zM370 75h5v5h-5zM390 75h5v5h-5zM395 75h5v5h-5zM415 75h5v5h-5zM460 75h5v5h-5zM510 75h5v5h-5zM560 75h5v5h-5zM790 75h5v5h-5zM795 75h5v5h-5zM35 80h5v5h-5zM40 80h5v5h-5zM170 80h5v5h-5zM175 80h5v5h-5zM190 80h5v5h-5zM215 80h5v5h-5zM225 80h5v5h-5zM260 80h5v5h-5zM360 80h5v5h-5zM370 80h5v5h-5zM380 80h5v5h-5zM570 80h5v5h-5zM575 80h5v5h-5zM680 80h5v5h-5zM750 80h5v5h-5zM760 80h5v5h-5zM800 80h5v5h-5zM820 80h5v5h-5zM5 85h5v5h-5zM25 85h5v5h-5zM100 85h5v5h-5zM180 85h5v5h-5zM215 85h5v5h-5zM295 85h5v5h-5zM360 85h5v5h-5zM400 85h5v5h-5zM560 85h5v5h-5zM590 85h5v5h-5zM595 85h5v5h-5zM710 85h5v5h-5zM800 85h5v5h-5zM25 90h5v5h-5zM45 90h5v5h-5zM60 90h5v5h-5zM110 90h5v5h-5zM160 90h5v5h-5zM200 90h5v5h-5zM250 90h5v5h-5zM255 90h5v5h-5zM275 90h5v5h-5zM330 90h5v5h-5zM465 90h5v5h-5zM490 90h5v5h-5zM525 90h5v5h-5zM545 90h5v5h-5zM660 90h5v5h-5zM685 90h5v5h-5zM15 95h5v5h-5zM225 95h5v5h-5zM315 95h5v5h-5zM395 95h5v5h-5zM415 95h5v5h-5zM425 95h5v5h-5zM450 95h5v5h-5zM525 95h5v5h-5zM550 95h5v5h-5zM555 95h5v5h-5zM770 95h5v5h-5zM795 95h5v5h-5zM820 95h5v5h-5zM30 100h5v5h-5zM110 100h5v5h-5zM185 100h5v5h-5zM315 100h5v5h-5zM345 100h5v5h-5zM410 100h5v5h-5zM500 100h5v5h-5zM560 100h5v5h-5zM620 100h5v5h-5zM760 100h5v5h-5zM770 100h5v5h-5zM780 100h5v5h-5zM85 105h5v5h-5zM195 105h5v5h-5zM210 105h5v5h-5zM440 105h5v5h-5zM445 105h5v5h-5zM455 105h5v5h-5zM600 105h5v5h-5zM785 105h5v5h-5zM815 105h5v5h-5zM250 110h5v5h-5zM340 110h5v5h-5zM410 110h5v5h-5zM420 110h5v5h-5zM500 110h5v5h-5zM550 110h5v5h-5zM585 110h5v5h-5zM645 110h5v5h-5zM670 110h5v5h-5zM795 110h5v5h-5zM95 115h5v5h-5zM190 115h5v5h-5zM250 115h5v5h-5zM260 115h5v5h-5zM345 115h5v5h-5zM405 115h5v5h-5zM415 115h5v5h-5zM510 115h5v5h-5zM535 115h5v5h-5zM575 115h5v5h-5zM585 115h5v5h-5zM650 115h5v5h-5zM705 115h5v5h-5zM735 115h5v5h-5zM770 115h5v5h-5zM800 115h5v5h-5zM35 120h5v5h-5zM95 120h5v5h-5zM160 120h5v5h-5zM355 120h5v5h-5zM570 120h5v5h-5zM725 120h5v5h-5zM0 125h5v5h-5zM100 125h5v5h-5zM220 125h5v5h-5zM250 125h5v5h-5zM360 125h5v5h-5zM585 125h5v5h-5zM615 125h5v5h-5zM0 130h5v5h-5zM45 130h5v5h-5zM240 130h5v5h-5zM310 130h5v5h-5zM405 130h5v5h-5zM520 130h5v5h-5zM600 130h5v5h-5zM630 130h5v5h-5zM745 130h5v5h-5zM145 135h5v5h-5zM230 135h5v5h-5zM255 135h5v5h-5zM280 135h5v5h-5zM600 135h5v5h-5zM645 135h5v5h-5zM660 135h5v5h-5zM675 135h5v5h-5zM5 140h5v5h-5zM35 140h5v5h-5zM190 140h5v5h-5zM245 140h5v5h-5zM290 140h5v5h-5zM310 140h5v5h-5zM410 140h5v5h-5zM435 140h5v5h-5zM460 140h5v5h-5zM470 140h5v5h-5zM620 140h5v5h-5zM630 140h5v5h-5zM655 140h5v5h-5zM710 140h5v5h-5zM785 140h5v5h-5zM15 145h5v5h-5zM70 145h5v5h-5zM230 145h5v5h-5zM240 145h5v5h-5zM395 145h5v5h-5zM400 145h5v5h-5zM445 145h5v5h-5zM520 145h5v5h-5zM525 145h5v5h-5zM590 145h5v5h-5zM595 145h5v5h-5zM670 145h5v5h-5zM690 145h5v5h-5zM755 145h5v5h-5zM765 145h5v5h-5zM815 145h5v5h-5zM140 150h5v5h-5zM180 150h5v5h-5zM490 150h5v5h-5zM500 150h5v5h-5zM510 150h5v5h-5zM560 150h5v5h-5zM570 150h5v5h-5zM645 150h5v5h-5zM725 150h5v5h-5zM745 150h5v5h-5zM760 150h5v5h-5zM120 155h5v5h-5zM130 155h5v5h-5zM150 155h5v5h-5zM175 155h5v5h-5zM210 155h5v5h-5zM350 155h5v5h-5zM400 155h5v5h-5zM785 155h5v5h-5zM55 160h5v5h-5zM135 160h5v5h-5zM175 160h5v5h-5zM205 160h5v5h-5zM300 160h5v5h-5zM315 160h5v5h-5zM490 160h5v5h-5zM545 160h5v5h-5zM630 160h5v5h-5zM680 160h5v5h-5zM705 160h5v5h-5zM25 165h5v5h-5zM65 165h5v5h-5zM95 165h5v5h-5zM115 165h5v5h-5zM155 165h5v5h-5zM170 165h5v5h-5zM200 165h5v5h-5zM250 165h5v5h-5zM270 165h5v5h-5zM295 165h5v5h-5zM315 165h5v5h-5zM400 165h5v5h-5zM445 165h5v5h-5zM465 165h5v5h-5zM500 165h5v5h-5zM520 165h5v5h-5zM555 165h5v5h-5zM590 165h5v5h-5zM50 170h5v5h-5zM275 170h5v5h-5zM330 170h5v5h-5zM680 170h5v5h-5zM685 170h5v5h-5zM715 170h5v5h-5zM730 170h5v5h-5zM740 170h5v5h-5zM795 170h5v5h-5zM805 170h5v5h-5zM165 175h5v5h-5zM190 175h5v5h-5zM260 175h5v5h-5zM325 175h5v5h-5zM350 175h5v5h-5zM630 175h5v5h-5zM740 175h5v5h-5zM745 175h5v5h-5zM45 180h5v5h-5zM55 180h5v5h-5zM65 180h5v5h-5zM80 180h5v5h-5zM105 180h5v5h-5zM145 180h5v5h-5zM175 180h5v5h-5zM200 180h5v5h-5zM205 180h5v5h-5zM380 180h5v5h-5zM420 180h5v5h-5zM500 180h5v5h-5zM690 180h5v5h-5zM730 180h5v5h-5zM825 180h5v5h-5zM40 185h5v5h-5zM45 185h5v5h-5zM65 185h5v5h-5zM85 185h5v5h-5zM90 185h5v5h-5zM150 185h5v5h-5zM170 185h5v5h-5zM295 185h5v5h-5zM300 185h5v5h-5zM310 185h5v5h-5zM405 185h5v5h-5zM425 185h5v5h-5zM530 185h5v5h-5zM570 185h5v5h-5zM585 185h5v5h-5zM660 185h5v5h-5zM735 185h5v5h-5zM780 185h5v5h-5zM205 190h5v5h-5zM475 190h5v5h-5zM490 190h5v5h-5zM595 190h5v5h-5zM765 190h5v5h-5zM70 195h5v5h-5zM90 195h5v5h-5zM115 195h5v5h-5zM120 195h5v5h-5zM220 195h5v5h-5zM250 195h5v5h-5zM340 195h5v5h-5zM360 195h5v5h-5zM370 195h5v5h-5zM375 195h5v5h-5zM670 195h5v5h-5zM695 195h5v5h-5zM700 195h5v5h-5zM810 195h5v5h-5zM105 200h5v5h-5zM260 200h5v5h-5zM290 200h5v5h-5zM295 200h5v5h-5zM490 200h5v5h-5zM545 200h5v5h-5zM555 200h5v5h-5zM595 200h5v5h-5zM675 200h5v5h-5zM735 200h5v5h-5zM810 200h5v5h-5zM825 200h5v5h-5zM5 205h5v5h-5zM40 205h5v5h-5zM45 205h5v5h-5zM85 205h5v5h-5zM305 205h5v5h-5zM400 205h5v5h-5zM455 205h5v5h-5zM620 205h5v5h-5zM665 205h5v5h-5zM45 210h5v5h-5zM225 210h5v5h-5zM425 210h5v5h-5zM490 210h5v5h-5zM515 210h5v5h-5zM600 210h5v5h-5zM690 210h5v5h-5zM715 210h5v5h-5zM770 210h5v5h-5zM5 215h5v5h-5zM10 215h5v5h-5zM100 215h5v5h-5zM115 215h5v5h-5zM415 215h5v5h-5zM715 215h5v5h-5zM740 215h5v5h-5zM765 215h5v5h-5zM775 215h5v5h-5zM780 215h5v5h-5zM785 215h5v5h-5zM830 215h5v5h-5zM0 220h5v5h-5zM15 220h5v5h-5zM30 220h5v5h-5zM410 220h5v5h-5zM445 220h5v5h-5zM475 220h5v5h-5zM530 220h5v5h-5zM540 220h5v5h-5zM635 220h5v5h-5zM740 220h5v5h-5zM775 220h5v5h-5zM25 225h5v5h-5zM55 225h5v5h-5zM190 225h5v5h-5zM195 225h5v5h-5zM210 225h5v5h-5zM425 225h5v5h-5zM470 225h5v5h-5zM480 225h5v5h-5zM585 225h5v5h-5zM630 225h5v5h-5zM695 225h5v5h-5zM715 225h5v5h-5zM725 225h5v5h-5zM760 225h5v5h-5zM0 230h5v5h-5zM195 230h5v5h-5zM295 230h5v5h-5zM310 230h5v5h-5zM360 230h5v5h-5zM435 230h5v5h-5zM500 230h5v5h-5zM610 230h5v5h-5zM650 230h5v5h-5zM660 230h5v5h-5zM795 230h5v5h-5zM65 235h5v5h-5zM90 235h5v5h-5zM140 235h5v5h-5zM220 235h5v5h-5zM430 235h5v5h-5zM670 235h5v5h-5zM730 235h5v5h-5zM30 240h5v5h-5zM100 240h5v5h-5zM140 240h5v5h-5zM155 240h5v5h-5zM205 240h5v5h-5zM240 240h5v5h-5zM255 240h5v5h-5zM295 240h5v5h-5zM305 240h5v5h-5zM515 240h5v5h-5zM730 240h5v5h-5zM740 240h5v5h-5zM770 240h5v5h-5zM70 245h5v5h-5zM75 245h5v5h-5zM110 245h5v5h-5zM165 245h5v5h-5zM240 245h5v5h-5zM505 245h5v5h-5zM545 245h5v5h-5zM640 245h5v5h-5zM745 245h5v5h-5zM830 245h5v5h-5zM15 250h5v5h-5zM30 250h5v5h-5zM90 250h5v5h-5zM200 250h5v5h-5zM230 250h5v5h-5zM235 250h5v5h-5zM240 250h5v5h-5zM255 250h5v5h-5zM300 250h5v5h-5zM380 250h5v5h-5zM440 250h5v5h-5zM460 250h5v5h-5zM550 250h5v5h-5zM555 250h5v5h-5zM565 250h5v5h-5zM660 250h5v5h-5zM745 250h5v5h-5zM770 250h5v5h-5zM130 255h5v5h-5zM195 255h5v5h-5zM210 255h5v5h-5zM220 255h5v5h-5zM245 255h5v5h-5zM315 255h5v5h-5zM380 255h5v5h-5zM480 255h5v5h-5zM625 255h5v5h-5zM630 255h5v5h-5zM700 255h5v5h-5zM780 255h5v5h-5zM795 255h5v5h-5zM125 260h5v5h-5zM215 260h5v5h-5zM220 260h5v5h-5zM225 260h5v5h-5zM230 260h5v5h-5zM310 260h5v5h-5zM390 260h5v5h-5zM495 260h5v5h-5zM585 260h5v5h-5zM695 260h5v5h-5zM700 260h5v5h-5zM705 260h5v5h-5zM825 260h5v5h-5zM10 265h5v5h-5zM15 265h5v5h-5zM30 265h5v5h-5zM50 265h5v5h-5zM100 265h5v5h-5zM160 265h5v5h-5zM180 265h5v5h-5zM220 265h5v5h-5zM380 265h5v5h-5zM385 265h5v5h-5zM405 265h5v5h-5zM415 265h5v5h-5zM455 265h5v5h-5zM465 265h5v5h-5zM510 265h5v5h-5zM515 265h5v5h-5zM525 265h5v5h-5zM635 265h5v5h-5zM675 265h5v5h-5zM715 265h5v5h-5zM820 265h5v5h-5zM165 270h5v5h-5zM225 270h5v5h-5zM330 270h5v5h-5zM365 270h5v5h-5zM400 270h5v5h-5zM505 270h5v5h-5zM590 270h5v5h-5zM640 270h5v5h-5zM780 270h5v5h-5zM35 275h5v5h-5zM45 275h5v5h-5zM50 275h5v5h-5zM55 275h5v5h-5zM90 275h5v5h-5zM100 275h5v5h-5zM155 275h5v5h-5zM165 275h5v5h-5zM200 275h5v5h-5zM270 275h5v5h-5zM360 275h5v5h-5zM395 275h5v5h-5zM485 275h5v5h-5zM660 275h5v5h-5zM670 275h5v5h-5zM825 275h5v5h-5zM250 280h5v5h-5zM270 280h5v5h-5zM295 280h5v5h-5zM315 280h5v5h-5zM395 280h5v5h-5zM430 280h5v5h-5zM560 280h5v5h-5zM570 280h5v5h-5zM615 280h5v5h-5zM620 280h5v5h-5zM645 280h5v5h-5zM695 280h5v5h-5zM800 280h5v5h-5zM825 280h5v5h-5zM30 285h5v5h-5zM100 285h5v5h-5zM120 285h5v5h-5zM230 285h5v5h-5zM250 285h5v5h-5zM260 285h5v5h-5zM310 285h5v5h-5zM385 285h5v5h-5zM515 285h5v5h-5zM520 285h5v5h-5zM525 285h5v5h-5zM610 285h5v5h-5zM625 285h5v5h-5zM745 285h5v5h-5zM50 290h5v5h-5zM100 290h5v5h-5zM155 290h5v5h-5zM170 290h5v5h-5zM380 290h5v5h-5zM445 290h5v5h-5zM450 290h5v5h-5zM455 290h5v5h-5zM585 290h5v5h-5zM665 290h5v5h-5zM810 290h5v5h-5zM20 295h5v5h-5zM40 295h5v5h-5zM170 295h5v5h-5zM260 295h5v5h-5zM295 295h5v5h-5zM345 295h5v5h-5zM375 295h5v5h-5zM430 295h5v5h-5zM585 295h5v5h-5zM615 295h5v5h-5zM715 295h5v5h-5zM740 295h5v5h-5zM805 295h5v5h-5zM0 300h5v5h-5zM40 300h5v5h-5zM105 300h5v5h-5zM140 300h5v5h-5zM145 300h5v5h-5zM165 300h5v5h-5zM200 300h5v5h-5zM225 300h5v5h-5zM480 300h5v5h-5zM555 300h5v5h-5zM575 300h5v5h-5zM590 300h5v5h-5zM635 300h5v5h-5zM680 300h5v5h-5zM790 300h5v5h-5zM165 305h5v5h-5zM170 305h5v5h-5zM185 305h5v5h-5zM310 305h5v5h-5zM365 305h5v5h-5zM400 305h5v5h-5zM540 305h5v5h-5zM560 305h5v5h-5zM570 305h5v5h-5zM650 305h5v5h-5zM10 310h5v5h-5zM95 310h5v5h-5zM135 310h5v5h-5zM180 310h5v5h-5zM195 310h5v5h-5zM410 310h5v5h-5zM435 310h5v5h-5zM470 310h5v5h-5zM485 310h5v5h-5zM510 310h5v5h-5zM550 310h5v5h-5zM575 310h5v5h-5zM605 310h5v5h-5zM615 310h5v5h-5zM630 310h5v5h-5zM655 310h5v5h-5zM660 310h5v5h-5zM705 310h5v5h-5zM830 310h5v5h-5zM70 315h5v5h-5zM145 315h5v5h-5zM160 315h5v5h-5zM205 315h5v5h-5zM210 315h5v5h-5zM275 315h5v5h-5zM380 315h5v5h-5zM410 315h5v5h-5zM485 315h5v5h-5zM550 315h5v5h-5zM570 315h5v5h-5zM600 315h5v5h-5zM605 315h5v5h-5zM660 315h5v5h-5zM780 315h5v5h-5zM5 320h5v5h-5zM150 320h5v5h-5zM175 320h5v5h-5zM435 320h5v5h-5zM530 320h5v5h-5zM560 320h5v5h-5zM705 320h5v5h-5zM770 320h5v5h-5zM810 320h5v5h-5zM115 325h5v5h-5zM200 325h5v5h-5zM235 325h5v5h-5zM285 325h5v5h-5zM320 325h5v5h-5zM430 325h5v5h-5zM455 325h5v5h-5zM595 325h5v5h-5zM625 325h5v5h-5zM655 325h5v5h-5zM735 325h5v5h-5zM755 325h5v5h-5zM770 325h5v5h-5zM805 325h5v5h-5zM60 330h5v5h-5zM75 330h5v5h-5zM105 330h5v5h-5zM115 330h5v5h-5zM170 330h5v5h-5zM185 330h5v5h-5zM195 330h5v5h-5zM230 330h5v5h-5zM235 330h5v5h-5zM255 330h5v5h-5zM285 330h5v5h-5zM320 330h5v5h-5zM330 330h5v5h-5zM390 330h5v5h-5zM400 330h5v5h-5zM495 330h5v5h-5zM680 330h5v5h-5zM715 330h5v5h-5zM15 335h5v5h-5zM75 335h5v5h-5zM125 335h5v5h-5zM205 335h5v5h-5zM270 335h5v5h-5zM310 335h5v5h-5zM350 335h5v5h-5zM365 335h5v5h-5zM405 335h5v5h-5zM435 335h5v5h-5zM455 335h5v5h-5zM470 335h5v5h-5zM480 335h5v5h-5zM610 335h5v5h-5zM655 335h5v5h-5zM720 335h5v5h-5zM770 335h5v5h-5zM785 335h5v5h-5zM820 335h5v5h-5zM825 335h5v5h-5zM85 340h5v5h-5zM180 340h5v5h-5zM290 340h5v5h-5zM340 340h5v5h-5zM385 340h5v5h-5zM400 340h5v5h-5zM455 340h5v5h-5zM680 340h5v5h-5zM790 340h5v5h-5zM85 345h5v5h-5zM90 345h5v5h-5zM110 345h5v5h-5zM170 345h5v5h-5zM265 345h5v5h-5zM305 345h5v5h-5zM435 345h5v5h-5zM440 345h5v5h-5zM445 345h5v5h-5zM620 345h5v5h-5zM695 345h5v5h-5zM780 345h5v5h-5zM790 345h5v5h-5zM165 350h5v5h-5zM185 350h5v5h-5zM305 350h5v5h-5zM435 350h5v5h-5zM455 350h5v5h-5zM475 350h5v5h-5zM490 350h5v5h-5zM555 350h5v5h-5zM570 350h5v5h-5zM610 350h5v5h-5zM625 350h5v5h-5zM630 350h5v5h-5zM680 350h5v5h-5zM0 355h5v5h-5zM170 355h5v5h-5zM195 355h5v5h-5zM205 355h5v5h-5zM285 355h5v5h-5zM455 355h5v5h-5zM475 355h5v5h-5zM515 355h5v5h-5zM520 355h5v5h-5zM585 355h5v5h-5zM655 355h5v5h-5zM670 355h5v5h-5zM705 355h5v5h-5zM40 360h5v5h-5zM65 360h5v5h-5zM80 360h5v5h-5zM95 360h5v5h-5zM130 360h5v5h-5zM155 360h5v5h-5zM170 360h5v5h-5zM305 360h5v5h-5zM315 360h5v5h-5zM350 360h5v5h-5zM520 360h5v5h-5zM540 360h5v5h-5zM575 360h5v5h-5zM65 365h5v5h-5zM110 365h5v5h-5zM170 365h5v5h-5zM210 365h5v5h-5zM285 365h5v5h-5zM445 365h5v5h-5zM470 365h5v5h-5zM555 365h5v5h-5zM565 365h5v5h-5zM640 365h5v5h-5zM710 365h5v5h-5zM715 365h5v5h-5zM0 370h5v5h-5zM45 370h5v5h-5zM190 370h5v5h-5zM330 370h5v5h-5zM340 370h5v5h-5zM505 370h5v5h-5zM670 370h5v5h-5zM690 370h5v5h-5zM755 370h5v5h-5zM10 375h5v5h-5zM30 375h5v5h-5zM40 375h5v5h-5zM50 375h5v5h-5zM135 375h5v5h-5zM225 375h5v5h-5zM265 375h5v5h-5zM310 375h5v5h-5zM345 375h5v5h-5zM440 375h5v5h-5zM465 375h5v5h-5zM625 375h5v5h-5zM670 375h5v5h-5zM695 375h5v5h-5zM825 375h5v5h-5zM5 380h5v5h-5zM30 380h5v5h-5zM65 380h5v5h-5zM160 380h5v5h-5zM165 380h5v5h-5zM240 380h5v5h-5zM320 380h5v5h-5zM385 380h5v5h-5zM455 380h5v5h-5zM470 380h5v5h-5zM475 380h5v5h-5zM690 380h5v5h-5zM700 380h5v5h-5zM740 380h5v5h-5zM805 380h5v5h-5zM830 380h5v5h-5zM105 385h5v5h-5zM140 385h5v5h-5zM185 385h5v5h-5zM235 385h5v5h-5zM240 385h5v5h-5zM295 385h5v5h-5zM305 385h5v5h-5zM390 385h5v5h-5zM475 385h5v5h-5zM505 385h5v5h-5zM605 385h5v5h-5zM620 385h5v5h-5zM655 385h5v5h-5zM660 385h5v5h-5zM685 385h5v5h-5zM700 385h5v5h-5zM810 385h5v5h-5zM820 385h5v5h-5zM75 390h5v5h-5zM100 390h5v5h-5zM190 390h5v5h-5zM270 390h5v5h-5zM290 390h5v5h-5zM400 390h5v5h-5zM460 390h5v5h-5zM520 390h5v5h-5zM635 390h5v5h-5zM760 390h5v5h-5zM770 390h5v5h-5zM825 390h5v5h-5zM40 395h5v5h-5zM175 395h5v5h-5zM190 395h5v5h-5zM300 395h5v5h-5zM305 395h5v5h-5zM360 395h5v5h-5zM385 395h5v5h-5zM450 395h5v5h-5zM570 395h5v5h-5zM615 395h5v5h-5zM640 395h5v5h-5zM680 395h5v5h-5zM690 395h5v5h-5zM725 395h5v5h-5zM740 395h5v5h-5zM15 400h5v5h-5zM140 400h5v5h-5zM170 400h5v5h-5zM240 400h5v5h-5zM265 400h5v5h-5zM340 400h5v5h-5zM375 400h5v5h-5zM425 400h5v5h-5zM470 400h5v5h-5zM480 400h5v5h-5zM550 400h5v5h-5zM735 400h5v5h-5zM750 400h5v5h-5zM50 405h5v5h-5zM110 405h5v5h-5zM420 405h5v5h-5zM620 405h5v5h-5zM715 405h5v5h-5zM720 405h5v5h-5zM780 405h5v5h-5zM810 405h5v5h-5zM830 405h5v5h-5z"/><path fill="#e0e000" d="M0 0h10v5h-10zM15 0h5v5h-5zM25 0h10v5h-10zM40 0h5v5h-5zM50 0h10v5h-10zM70 0h10v5h-10zM105 0h5v5h-5zM115 0h15v5h-15zM140 0h5v5h-5zM165 0h15v5h-15zM190 0h5v5h-5zM205 0h5v5h-5zM220 0h5v5h-5zM245 0h5v5h-5zM255 0h5v5h-5zM270 0h5v5h-5zM280 0h5v5h-5zM305 0h5v5h-5zM350 0h5v5h-5zM375 0h5v5h-5zM390 0h5v5h-5zM400 0h15v5h-15zM420 0h10v5h-10zM440 0h5v5h-5zM470 0h5v5h-5zM480 0h5v5h-5zM495 0h15v5h-15zM525 0h10v5h-10zM540 0h5v5h-5zM575 0h5v5h-5zM610 0h5v5h-5zM620 0h15v5h-15zM640 0h15v5h-15zM660 0h15v5h-15zM685 0h15v5h-15zM705 0h5v5h-5zM730 0h15v5h-15zM755 0h10v5h-10zM775 0h5v5h-5zM785 0h5v5h-5zM810 0h15v5h-15zM5 5h10v5h-10zM45 5h5v5h-5zM55 5h15v5h-15zM75 5h5v5h-5zM110 5h10v5h-10zM125 5h10v5h-10zM165 5h5v5h-5zM195 5h5v5h-5zM205 5h5v5h-5zM240 5h15v5h-15zM265 5h5v5h-5zM285 5h5v5h-5zM295 5h10v5h-10zM340 5h15v5h-15zM365 5h5v5h-5zM375 5h5v5h-5zM385 5h5v5h-5zM430 5h5v5h-5zM440 5h10v5h-10zM455 5h5v5h-5zM475 5h5v5h-5zM495 5h5v5h-5zM505 5h10v5h-10zM600 5h5v5h-5zM620 5h5v5h-5zM635 5h10v5h-10zM665 5h5v5h-5zM680 5h5v5h-5zM695 5h5v5h-5zM725 5h5v5h-5zM740 5h15v5h-15zM760 5h5v5h-5zM775 5h10v5h-10zM795 5h5v5h-5zM815 5h5v5h-5zM825 5h5v5h-5zM0 10h10v5h-10zM25 10h10v5h-10zM50 10h10v5h-10zM70 10h5v5h-5zM90 10h5v5h-5zM100 10h5v5h-5zM115 10h5v5h-5zM130 10h10v5h-10zM145 10h15v5h-15zM165 10h15v5h-15zM185 10h5v5h-5zM195 10h15v5h-15zM215 10h5v5h-5zM230 10h5v5h-5zM245 10h5v5h-5zM290 10h5v5h-5zM315 10h15v5h-15zM340 10h5v5h-5zM350 10h5v5h-5zM370 10h15v5h-15zM390 10h5v5h-5zM400 10h5v5h-5zM420 10h5v5h-5zM430 10h15v5h-15zM460 10h5v5h-5zM470 10h15v5h-15zM490 10h15v5h-15zM545 10h5v5h-5zM555 10h5v5h-5zM570 10h5v5h-5zM600 10h5v5h-5zM650 10h15v5h-15zM670 10h5v5h-5zM705 10h5v5h-5zM735 10h5v5h-5zM745 10h5v5h-5zM755 10h5v5h-5zM765 10h5v5h-5zM815 10h15v5h-15zM0 15h5v5h-5zM10 15h15v5h-15zM40 15h5v5h-5zM60 15h5v5h-5zM70 15h5v5h-5zM85 15h5v5h-5zM110 15h5v5h-5zM125 15h5v5h-5zM135 15h5v5h-5zM150 15h5v5h-5zM175 15h5v5h-5zM190 15h10v5h-10zM210 15h15v5h-15zM235 15h5v5h-5zM250 15h5v5h-5zM270 15h5v5h-5zM295 15h5v5h-5zM305 15h15v5h-15zM325 15h5v5h-5zM335 15h10v5h-10zM400 15h5v5h-5zM425 15h10v5h-10zM450 15h10v5h-10zM470 15h5v5h-5zM480 15h5v5h-5zM500 15h10v5h-10zM520 15h5v5h-5zM540 15h15v5h-15zM560 15h15v5h-15zM610 15h15v5h-15zM630 15h5v5h-5zM650 15h5v5h-5zM660 15h5v5h-5zM690 15h10v5h-10zM720 15h5v5h-5zM750 15h15v5h-15zM805 15h5v5h-5zM830 15h5v5h-5zM0 20h10v5h-10zM20 20h10v5h-10zM45 20h5v5h-5zM55 20h10v5h-10zM90 20h10v5h-10zM110 20h10v5h-10zM135 20h5v5h-5zM150 20h15v5h-15zM175 20h5v5h-5zM205 20h5v5h-5zM215 20h5v5h-5zM230 20h5v5h-5zM245 20h10v5h-10zM270 20h5v5h-5zM280 20h5v5h-5zM290 20h15v5h-15zM335 20h5v5h-5zM355 20h5v5h-5zM375 20h15v5h-15zM395 20h5v5h-5zM405 20h5v5h-5zM415 20h10v5h-10zM440 20h5v5h-5zM460 20h10v5h-10zM475 20h5v5h-5zM495 20h10v5h-10zM515 20h5v5h-5zM530 20h10v5h-10zM550 20h5v5h-5zM560 20h5v5h-5zM570 20h5v5h-5zM595 20h10v5h-10zM625 20h5v5h-5zM645 20h5v5h-5zM675 20h15v5h-15zM695 20h10v5h-10zM710 20h15v5h-15zM730 20h5v5h-5zM750 20h5v5h-5zM760 20h5v5h-5zM780 20h5v5h-5zM815 20h5v5h-5zM825 20h5v5h-5zM10 25h15v5h-15zM40 25h5v5h-5zM60 25h5v5h-5zM80 25h5v5h-5zM105 25h10v5h-10zM120 25h5v5h-5zM155 25h5v5h-5zM170 25h5v5h-5zM185 25h15v5h-15zM205 25h5v5h-5zM220 25h15v5h-15zM240 25h10v5h-10zM265 25h10v5h-10zM290 25h5v5h-5zM310 25h10v5h-10zM325 25h5v5h-5zM335 25h5v5h-5zM355 25h10v5h-10zM370 25h10v5h-10zM410 25h10v5h-10zM435 25h5v5h-5zM455 25h10v5h-10zM475 25h5v5h-5zM495 25h5v5h-5zM520 25h5v5h-5zM550 25h5v5h-5zM560 25h5v5h-5zM580 25h10v5h-10zM605 25h10v5h-10zM625 25h5v5h-5zM640 25h5v5h-5zM650 25h5v5h-5zM670 25h5v5h-5zM705 25h5v5h-5zM720 25h5v5h-5zM740 25h5v5h-5zM750 25h10v5h-10zM765 25h5v5h-5zM780 25h5v5h-5zM790 25h5v5h-5zM810 25h5v5h-5zM830 25h5v5h-5zM45 30h5v5h-5zM65 30h5v5h-5zM75 30h5v5h-5zM85 30h5v5h-5zM95 30h5v5h-5zM115 30h5v5h-5zM125 30h15v5h-15zM160 30h5v5h-5zM170 30h5v5h-5zM185 30h5v5h-5zM210 30h5v5h-5zM235 30h5v5h-5zM250 30h5v5h-5zM265 30h5v5h-5zM275 30h5v5h-5zM285 30h5v5h-5zM310 30h5v5h-5zM320 30h10v5h-10zM350 30h10v5h-10zM365 30h10v5h-10zM380 30h15v5h-15zM405 30h5v5h-5zM420 30h5v5h-5zM430 30h15v5h-15zM465 30h10v5h-10zM485 30h5v5h-5zM510 30h5v5h-5zM520 30h5v5h-5zM535 30h10v5h-10zM565 30h10v5h-10zM595 30h15v5h-15zM630 30h5v5h-5zM660 30h15v5h-15zM680 30h5v5h-5zM705 30h5v5h-5zM730 30h5v5h-5zM745 30h5v5h-5zM755 30h15v5h-15zM785 30h5v5h-5zM795 30h10v5h-10zM30 35h10v5h-10zM45 35h5v5h-5zM55 35h15v5h-15zM75 35h15v5h-15zM115 35h5v5h-5zM125 35h5v5h-5zM145 35h5v5h-5zM165 35h15v5h-15zM210 35h15v5h-15zM230 35h10v5h-10zM245 35h15v5h-15zM265 35h10v5h-10zM295 35h5v5h-5zM315 35h5v5h-5zM330 35h5v5h-5zM340 35h5v5h-5zM350 35h5v5h-5zM360 35h5v5h-5zM375 35h5v5h-5zM395 35h5v5h-5zM405 35h5v5h-5zM415 35h5v5h-5zM425 35h10v5h-10zM445 35h5v5h-5zM455 35h5v5h-5zM480 35h5v5h-5zM500 35h5v5h-5zM510 35h15v5h-15zM545 35h5v5h-5zM575 35h15v5h-15zM605 35h5v5h-5zM625 35h5v5h-5zM640 35h15v5h-15zM665 35h5v5h-5zM675 35h10v5h-10zM690 35h15v5h-15zM715 35h5v5h-5zM725 35h5v5h-5zM755 35h5v5h-5zM765 35h10v5h-10zM780 35h5v5h-5zM815 35h5v5h-5zM25 40h5v5h-5zM70 40h5v5h-5zM80 40h5v5h-5zM105 40h5v5h-5zM140 40h5v5h-5zM180 40h5v5h-5zM200 40h5v5h-5zM250 40h5v5h-5zM270 40h5v5h-5zM280 40h15v5h-15zM300 40h5v5h-5zM320 40h15v5h-15zM350 40h5v5h-5zM365 40h10v5h-10zM400 40h5v5h-5zM410 40h5v5h-5zM435 40h5v5h-5zM445 40h5v5h-5zM455 40h5v5h-5zM465 40h5v5h-5zM475 40h5v5h-5zM485 40h10v5h-10zM500 40h15v5h-15zM535 40h5v5h-5zM550 40h5v5h-5zM570 40h5v5h-5zM585 40h10v5h-10zM610 40h15v5h-15zM630 40h10v5h-10zM650 40h5v5h-5zM690 40h5v5h-5zM725 40h15v5h-15zM745 40h5v5h-5zM780 40h5v5h-5zM825 40h5v5h-5zM5 45h5v5h-5zM25 45h5v5h-5zM50 45h5v5h-5zM65 45h5v5h-5zM75 45h5v5h-5zM95 45h5v5h-5zM120 45h5v5h-5zM140 45h5v5h-5zM165 45h15v5h-15zM195 45h5v5h-5zM215 45h15v5h-15zM290 45h5v5h-5zM310 45h15v5h-15zM340 45h5v5h-5zM360 45h10v5h-10zM375 45h5v5h-5zM395 45h5v5h-5zM405 45h10v5h-10zM435 45h5v5h-5zM470 45h5v5h-5zM480 45h10v5h-10zM495 45h5v5h-5zM505 45h5v5h-5zM515 45h5v5h-5zM525 45h10v5h-10zM540 45h5v5h-5zM550 45h10v5h-10zM580 45h5v5h-5zM605 45h5v5h-5zM620 45h10v5h-10zM640 45h10v5h-10zM655 45h5v5h-5zM670 45h10v5h-10zM695 45h5v5h-5zM705 45h5v5h-5zM750 45h10v5h-10zM775 45h5v5h-5zM800 45h5v5h-5zM5 50h15v5h-15zM40 50h5v5h-5zM65 50h5v5h-5zM90 50h10v5h-10zM110 50h5v5h-5zM125 50h5v5h-5zM145 50h10v5h-10zM170 50h5v5h-5zM185 50h5v5h-5zM220 50h5v5h-5zM230 50h5v5h-5zM240 50h5v5h-5zM260 50h10v5h-10zM280 50h5v5h-5zM295 50h5v5h-5zM305 50h5v5h-5zM315 50h5v5h-5zM345 50h5v5h-5zM380 50h15v5h-15zM400 50h10v5h-10zM435 50h5v5h-5zM450 50h5v5h-5zM460 50h5v5h-5zM495 50h5v5h-5zM510 50h15v5h-15zM545 50h5v5h-5zM570 50h10v5h-10zM595 50h5v5h-5zM610 50h15v5h-15zM635 50h10v5h-10zM655 50h5v5h-5zM665 50h10v5h-10zM680 50h5v5h-5zM700 50h5v5h-5zM710 50h5v5h-5zM735 50h5v5h-5zM755 50h15v5h-15zM780 50h5v5h-5zM790 50h5v5h-5zM800 50h10v5h-10zM815 50h10v5h-10zM830 50h5v5h-5zM5 55h5v5h-5zM15 55h5v5h-5zM30 55h5v5h-5zM40 55h15v5h-15zM75 55h10v5h-10zM90 55h5v5h-5zM100 55h5v5h-5zM110 55h5v5h-5zM120 55h15v5h-15zM145 55h5v5h-5zM160 55h5v5h-5zM170 55h10v5h-10zM190 55h15v5h-15zM215 55h10v5h-10zM245 55h10v5h-10zM270 55h5v5h-5zM280 55h5v5h-5zM300 55h5v5h-5zM320 55h10v5h-10zM335 55h10v5h-10zM355 55h5v5h-5zM375 55h5v5h-5zM395 55h5v5h-5zM415 55h5v5h-5zM450 55h5v5h-5zM460 55h15v5h-15zM485 55h10v5h-10zM500 55h10v5h-10zM530 55h5v5h-5zM545 55h10v5h-10zM565 55h10v5h-10zM580 55h5v5h-5zM595 55h5v5h-5zM610 55h5v5h-5zM660 55h10v5h-10zM705 55h5v5h-5zM725 55h5v5h-5zM740 55h5v5h-5zM750 55h5v5h-5zM765 55h10v5h-10zM810 55h5v5h-5zM820 55h5v5h-5zM830 55h5v5h-5zM15 60h5v5h-5zM35 60h10v5h-10zM50 60h5v5h-5zM70 60h5v5h-5zM85 60h15v5h-15zM110 60h15v5h-15zM150 60h5v5h-5zM180 60h15v5h-15zM210 60h10v5h-10zM225 60h5v5h-5zM240 60h5v5h-5zM250 60h5v5h-5zM260 60h10v5h-10zM280 60h5v5h-5zM300 60h10v5h-10zM320 60h5v5h-5zM330 60h5v5h-5zM395 60h5v5h-5zM405 60h5v5h-5zM475 60h5v5h-5zM495 60h5v5h-5zM520 60h15v5h-15zM545 60h5v5h-5zM555 60h5v5h-5zM575 60h5v5h-5zM590 60h10v5h-10zM650 60h5v5h-5zM660 60h5v5h-5zM680 60h5v5h-5zM735 60h5v5h-5zM750 60h10v5h-10zM775 60h5v5h-5zM810 60h10v5h-10zM830 60h5v5h-5zM0 65h5v5h-5zM30 65h5v5h-5zM45 65h5v5h-5zM55 65h10v5h-10zM80 65h5v5h-5zM95 65h5v5h-5zM125 65h10v5h-10zM140 65h15v5h-15zM175 65h10v5h-10zM190 65h5v5h-5zM200 65h15v5h-15zM230 65h5v5h-5zM245 65h5v5h-5zM275 65h5v5h-5zM295 65h5v5h-5zM310 65h5v5h-5zM335 65h5v5h-5zM350 65h10v5h-10zM375 65h15v5h-15zM400 65h5v5h-5zM410 65h5v5h-5zM430 65h10v5h-10zM445 65h15v5h-15zM465 65h10v5h-10zM480 65h10v5h-10zM495 65h10v5h-10zM510 65h5v5h-5zM530 65h10v5h-10zM555 65h5v5h-5zM570 65h5v5h-5zM580 65h5v5h-5zM590 65h5v5h-5zM605 65h10v5h-10zM620 65h5v5h-5zM630 65h5v5h-5zM645 65h5v5h-5zM670 65h5v5h-5zM680 65h10v5h-10zM695 65h5v5h-5zM705 65h5v5h-5zM715 65h5v5h-5zM725 65h15v5h-15zM745 65h5v5h-5zM755 65h5v5h-5zM785 65h15v5h-15zM810 65h5v5h-5zM5 70h5v5h-5zM15 70h10v5h-10zM40 70h15v5h-15zM60 70h5v5h-5zM70 70h10v5h-10zM85 70h5v5h-5zM105 70h5v5h-5zM120 70h10v5h-10zM140 70h5v5h-5zM160 70h15v5h-15zM180 70h5v5h-5zM195 70h5v5h-5zM220 70h10v5h-10zM270 70h5v5h-5zM295 70h5v5h-5zM305 70h5v5h-5zM320 70h5v5h-5zM345 70h10v5h-10zM365 70h15v5h-15zM390 70h10v5h-10zM415 70h10v5h-10zM430 70h5v5h-5zM440 70h5v5h-5zM460 70h5v5h-5zM490 70h10v5h-10zM505 70h15v5h-15zM535 70h10v5h-10zM550 70h15v5h-15zM580 70h5v5h-5zM600 70h5v5h-5zM615 70h5v5h-5zM625 70h5v5h-5zM655 70h15v5h-15zM685 70h10v5h-10zM710 70h5v5h-5zM730 70h5v5h-5zM745 70h10v5h-10zM760 70h5v5h-5zM770 70h10v5h-10zM820 70h10v5h-10zM0 75h5v5h-5zM10 75h5v5h-5zM25 75h10v5h-10zM40 75h5v5h-5zM50 75h5v5h-5zM75 75h5v5h-5zM95 75h5v5h-5zM120 75h5v5h-5zM140 75h15v5h-15zM200 75h5v5h-5zM215 75h5v5h-5zM240 75h10v5h-10zM255 75h10v5h-10zM275 75h5v5h-5zM315 75h10v5h-10zM335 75h5v5h-5zM345 75h5v5h-5zM360 75h5v5h-5zM375 75h5v5h-5zM385 75h5v5h-5zM400 75h5v5h-5zM410 75h5v5h-5zM440 75h5v5h-5zM455 75h5v5h-5zM470 75h5v5h-5zM490 75h5v5h-5zM500 75h10v5h-10zM515 75h5v5h-5zM525 75h10v5h-10zM575 75h5v5h-5zM585 75h5v5h-5zM605 75h5v5h-5zM630 75h5v5h-5zM640 75h5v5h-5zM655 75h5v5h-5zM670 75h10v5h-10zM695 75h15v5h-15zM715 75h5v5h-5zM725 75h5v5h-5zM740 75h5v5h-5zM770 75h5v5h-5zM780 75h5v5h-5zM800 75h10v5h-10zM830 75h5v5h-5zM20 80h10v5h-10zM45 80h15v5h-15zM75 80h10v5h-10zM90 80h10v5h-10zM110 80h10v5h-10zM125 80h10v5h-10zM165 80h5v5h-5zM200 80h10v5h-10zM230 80h5v5h-5zM255 80h5v5h-5zM270 80h15v5h-15zM295 80h15v5h-15zM315 80h5v5h-5zM345 80h15v5h-15zM365 80h5v5h-5zM385 80h5v5h-5zM400 80h10v5h-10zM420 80h5v5h-5zM440 80h5v5h-5zM455 80h15v5h-15zM475 80h5v5h-5zM485 80h5v5h-5zM495 80h5v5h-5zM515 80h5v5h-5zM535 80h5v5h-5zM550 80h15v5h-15zM585 80h10v5h-10zM615 80h10v5h-10zM630 80h5v5h-5zM640 80h5v5h-5zM655 80h5v5h-5zM665 80h5v5h-5zM685 80h5v5h-5zM700 80h5v5h-5zM710 80h10v5h-10zM725 80h5v5h-5zM765 80h5v5h-5zM775 80h5v5h-5zM795 80h5v5h-5zM815 80h5v5h-5zM830 80h5v5h-5zM0 85h5v5h-5zM20 85h5v5h-5zM30 85h5v5h-5zM40 85h10v5h-10zM55 85h5v5h-5zM70 85h5v5h-5zM80 85h15v5h-15zM105 85h10v5h-10zM120 85h5v5h-5zM140 85h5v5h-5zM155 85h5v5h-5zM165 85h5v5h-5zM175 85h5v5h-5zM195 85h5v5h-5zM225 85h15v5h-15zM245 85h10v5h-10zM265 85h5v5h-5zM275 85h5v5h-5zM285 85h5v5h-5zM300 85h5v5h-5zM315 85h10v5h-10zM335 85h5v5h-5zM365 85h5v5h-5zM375 85h5v5h-5zM390 85h5v5h-5zM405 85h15v5h-15zM425 85h5v5h-5zM435 85h5v5h-5zM445 85h10v5h-10zM460 85h5v5h-5zM490 85h10v5h-10zM510 85h5v5h-5zM520 85h5v5h-5zM530 85h10v5h-10zM545 85h5v5h-5zM555 85h5v5h-5zM565 85h5v5h-5zM575 85h5v5h-5zM585 85h5v5h-5zM600 85h10v5h-10zM620 85h10v5h-10zM645 85h10v5h-10zM660 85h10v5h-10zM685 85h10v5h-10zM740 85h5v5h-5zM770 85h5v5h-5zM780 85h5v5h-5zM795 85h5v5h-5zM810 85h15v5h-15zM5 90h5v5h-5zM15 90h5v5h-5zM30 90h5v5h-5zM40 90h5v5h-5zM70 90h5v5h-5zM115 90h5v5h-5zM130 90h5v5h-5zM140 90h5v5h-5zM170 90h10v5h-10zM205 90h10v5h-10zM245 90h5v5h-5zM265 90h10v5h-10zM280 90h10v5h-10zM305 90h5v5h-5zM345 90h5v5h-5zM355 90h5v5h-5zM365 90h5v5h-5zM375 90h5v5h-5zM385 90h10v5h-10zM400 90h10v5h-10zM415 90h15v5h-15zM435 90h5v5h-5zM450 90h5v5h-5zM475 90h5v5h-5zM485 90h5v5h-5zM495 90h5v5h-5zM515 90h5v5h-5zM535 90h5v5h-5zM560 90h10v5h-10zM600 90h5v5h-5zM675 90h5v5h-5zM700 90h15v5h-15zM720 90h10v5h-10zM740 90h5v5h-5zM760 90h5v5h-5zM795 90h10v5h-10zM810 90h5v5h-5zM820 90h15v5h-15zM0 95h5v5h-5zM25 95h10v5h-10zM50 95h15v5h-15zM90 95h5v5h-5zM100 95h5v5h-5zM115 95h10v5h-10zM140 95h10v5h-10zM155 95h5v5h-5zM195 95h5v5h-5zM210 95h5v5h-5zM220 95h5v5h-5zM230 95h5v5h-5zM265 95h5v5h-5zM280 95h5v5h-5zM290 95h15v5h-15zM325 95h5v5h-5zM340 95h10v5h-10zM355 95h5v5h-5zM370 95h5v5h-5zM380 95h5v5h-5zM390 95h5v5h-5zM400 95h5v5h-5zM410 95h5v5h-5zM430 95h5v5h-5zM445 95h5v5h-5zM455 95h5v5h-5zM480 95h5v5h-5zM490 95h5v5h-5zM515 95h10v5h-10zM540 95h5v5h-5zM565 95h15v5h-15zM590 95h5v5h-5zM600 95h5v5h-5zM615 95h5v5h-5zM630 95h10v5h-10zM645 95h5v5h-5zM655 95h5v5h-5zM665 95h10v5h-10zM680 95h5v5h-5zM705 95h5v5h-5zM715 95h5v5h-5zM725 95h5v5h-5zM735 95h5v5h-5zM750 95h10v5h-10zM765 95h5v5h-5zM785 95h10v5h-10zM800 95h5v5h-5zM815 95h5v5h-5zM825 95h5v5h-5zM5 100h10v5h-10zM20 100h10v5h-10zM50 100h5v5h-5zM80 100h5v5h-5zM90 100h15v5h-15zM115 100h5v5h-5zM125 100h5v5h-5zM135 100h5v5h-5zM155 100h10v5h-10zM175 100h5v5h-5zM195 100h5v5h-5zM215 100h5v5h-5zM235 100h10v5h-10zM255 100h10v5h-10zM270 100h15v5h-15zM330 100h5v5h-5zM350 100h5v5h-5zM360 100h10v5h-10zM385 100h5v5h-5zM445 100h5v5h-5zM465 100h5v5h-5zM480 100h5v5h-5zM490 100h10v5h-10zM505 100h5v5h-5zM580 100h5v5h-5zM610 100h10v5h-10zM640 100h15v5h-15zM665 100h5v5h-5zM675 100h5v5h-5zM700 100h5v5h-5zM710 100h5v5h-5zM720 100h10v5h-10zM735 100h10v5h-10zM785 100h5v5h-5zM795 100h5v5h-5zM805 100h10v5h-10zM830 100h5v5h-5zM0 105h10v5h-10zM45 105h5v5h-5zM65 105h5v5h-5zM105 105h5v5h-5zM160 105h15v5h-15zM185 105h5v5h-5zM200 105h5v5h-5zM220 105h5v5h-5zM230 105h5v5h-5zM285 105h10v5h-10zM310 105h10v5h-10zM330 105h5v5h-5zM340 105h15v5h-15zM375 105h10v5h-10zM390 105h10v5h-10zM405 105h10v5h-10zM430 105h10v5h-10zM465 105h10v5h-10zM500 105h10v5h-10zM520 105h5v5h-5zM530 105h5v5h-5zM540 105h5v5h-5zM555 105h5v5h-5zM565 105h15v5h-15zM605 105h10v5h-10zM655 105h5v5h-5zM670 105h10v5h-10zM705 105h15v5h-15zM755 105h5v5h-5zM775 105h5v5h-5zM825 105h5v5h-5zM10 110h10v5h-10zM30 110h15v5h-15zM65 110h5v5h-5zM75 110h5v5h-5zM85 110h10v5h-10zM100 110h15v5h-15zM130 110h5v5h-5zM140 110h10v5h-10zM155 110h10v5h-10zM170 110h5v5h-5zM180 110h5v5h-5zM200 110h5v5h-5zM210 110h5v5h-5zM225 110h5v5h-5zM260 110h5v5h-5zM285 110h5v5h-5zM295 110h5v5h-5zM305 110h5v5h-5zM330 110h10v5h-10zM345 110h5v5h-5zM370 110h5v5h-5zM380 110h10v5h-10zM430 110h5v5h-5zM440 110h5v5h-5zM460 110h10v5h-10zM485 110h15v5h-15zM520 110h15v5h-15zM570 110h5v5h-5zM590 110h15v5h-15zM650 110h15v5h-15zM675 110h5v5h-5zM695 110h5v5h-5zM710 110h5v5h-5zM740 110h10v5h-10zM760 110h5v5h-5zM770 110h10v5h-10zM805 110h5v5h-5zM815 110h5v5h-5zM5 115h5v5h-5zM25 115h5v5h-5zM40 115h10v5h-10zM55 115h5v5h-5zM85 115h5v5h-5zM105 115h5v5h-5zM115 115h5v5h-5zM125 115h5v5h-5zM150 115h10v5h-10zM170 115h5v5h-5zM185 115h5v5h-5zM195 115h5v5h-5zM205 115h5v5h-5zM225 115h5v5h-5zM265 115h10v5h-10zM280 115h5v5h-5zM290 115h5v5h-5zM300 115h5v5h-5zM320 115h5v5h-5zM340 115h5v5h-5zM355 115h10v5h-10zM380 115h5v5h-5zM390 115h5v5h-5zM400 115h5v5h-5zM420 115h15v5h-15zM500 115h5v5h-5zM525 115h5v5h-5zM545 115h15v5h-15zM565 115h5v5h-5zM610 115h10v5h-10zM625 115h10v5h-10zM645 115h5v5h-5zM685 115h5v5h-5zM695 115h5v5h-5zM755 115h15v5h-15zM775 115h10v5h-10zM795 115h5v5h-5zM825 115h10v5h-10zM0 120h5v5h-5zM10 120h10v5h-10zM50 120h15v5h-15zM70 120h15v5h-15zM100 120h5v5h-5zM110 120h15v5h-15zM145 120h5v5h-5zM155 120h5v5h-5zM165 120h5v5h-5zM175 120h5v5h-5zM195 120h15v5h-15zM215 120h5v5h-5zM235 120h15v5h-15zM270 120h15v5h-15zM290 120h5v5h-5zM300 120h5v5h-5zM310 120h5v5h-5zM320 120h10v5h-10zM335 120h10v5h-10zM350 120h5v5h-5zM365 120h15v5h-15zM385 120h5v5h-5zM405 120h5v5h-5zM420 120h5v5h-5zM435 120h5v5h-5zM450 120h10v5h-10zM465 120h10v5h-10zM480 120h15v5h-15zM510 120h10v5h-10zM545 120h5v5h-5zM560 120h10v5h-10zM575 120h15v5h-15zM605 120h5v5h-5zM615 120h10v5h-10zM630 120h10v5h-10zM650 120h10v5h-10zM670 120h5v5h-5zM690 120h5v5h-5zM710 120h5v5h-5zM735 120h5v5h-5zM745 120h10v5h-10zM765 120h10v5h-10zM785 120h10v5h-10zM820 120h5v5h-5zM830 120h5v5h-5zM30 125h5v5h-5zM40 125h5v5h-5zM55 125h5v5h-5zM65 125h5v5h-5zM75 125h5v5h-5zM85 125h5v5h-5zM95 125h5v5h-5zM105 125h5v5h-5zM115 125h5v5h-5zM135 125h15v5h-15zM160 125h5v5h-5zM180 125h15v5h-15zM230 125h5v5h-5zM245 125h5v5h-5zM255 125h15v5h-15zM315 125h10v5h-10zM350 125h10v5h-10zM370 125h5v5h-5zM380 125h15v5h-15zM405 125h5v5h-5zM435 125h5v5h-5zM460 125h5v5h-5zM475 125h5v5h-5zM490 125h5v5h-5zM510 125h5v5h-5zM520 125h5v5h-5zM535 125h15v5h-15zM555 125h10v5h-10zM575 125h5v5h-5zM595 125h5v5h-5zM610 125h5v5h-5zM620 125h5v5h-5zM630 125h5v5h-5zM675 125h5v5h-5zM685 125h10v5h-10zM720 125h10v5h-10zM740 125h10v5h-10zM755 125h5v5h-5zM765 125h5v5h-5zM775 125h5v5h-5zM790 125h10v5h-10zM810 125h10v5h-10zM825 125h5v5h-5zM5 130h15v5h-15zM25 130h5v5h-5zM40 130h5v5h-5zM65 130h5v5h-5zM80 130h10v5h-10zM105 130h5v5h-5zM120 130h5v5h-5zM130 130h5v5h-5zM150 130h10v5h-10zM170 130h10v5h-10zM185 130h5v5h-5zM195 130h10v5h-10zM220 130h5v5h-5zM230 130h10v5h-10zM260 130h5v5h-5zM275 130h15v5h-15zM315 130h5v5h-5zM330 130h5v5h-5zM340 130h10v5h-10zM355 130h5v5h-5zM375 130h10v5h-10zM395 130h5v5h-5zM415 130h10v5h-10zM435 130h5v5h-5zM445 130h10v5h-10zM495 130h5v5h-5zM510 130h10v5h-10zM530 130h5v5h-5zM550 130h5v5h-5zM570 130h5v5h-5zM580 130h5v5h-5zM590 130h10v5h-10zM605 130h15v5h-15zM635 130h10v5h-10zM655 130h15v5h-15zM675 130h10v5h-10zM715 130h5v5h-5zM735 130h10v5h-10zM750 130h5v5h-5zM760 130h5v5h-5zM770 130h5v5h-5zM785 130h5v5h-5zM795 130h10v5h-10zM810 130h5v5h-5zM5 135h5v5h-5zM30 135h5v5h-5zM45 135h10v5h-10zM60 135h5v5h-5zM70 135h10v5h-10zM105 135h5v5h-5zM140 135h5v5h-5zM160 135h5v5h-5zM170 135h5v5h-5zM180 135h5v5h-5zM200 135h5v5h-5zM225 135h5v5h-5zM245 135h5v5h-5zM265 135h15v5h-15zM285 135h10v5h-10zM300 135h15v5h-15zM320 135h5v5h-5zM345 135h5v5h-5zM375 135h5v5h-5zM390 135h5v5h-5zM430 135h5v5h-5zM440 135h5v5h-5zM455 135h5v5h-5zM465 135h5v5h-5zM490 135h5v5h-5zM515 135h5v5h-5zM530 135h5v5h-5zM565 135h15v5h-15zM585 135h5v5h-5zM605 135h5v5h-5zM630 135h5v5h-5zM655 135h5v5h-5zM665 135h10v5h-10zM710 135h5v5h-5zM735 135h5v5h-5zM760 135h15v5h-15zM785 135h10v5h-10zM800 135h5v5h-5zM815 135h5v5h-5zM10 140h5v5h-5zM25 140h5v5h-5zM40 140h10v5h-10zM60 140h5v5h-5zM80 140h5v5h-5zM90 140h15v5h-15zM115 140h15v5h-15zM135 140h10v5h-10zM150 140h5v5h-5zM185 140h5v5h-5zM195 140h15v5h-15zM225 140h5v5h-5zM235 140h5v5h-5zM250 140h5v5h-5zM265 140h5v5h-5zM280 140h5v5h-5zM305 140h5v5h-5zM330 140h10v5h-10zM360 140h5v5h-5zM380 140h10v5h-10zM400 140h10v5h-10zM420 140h5v5h-5zM430 140h5v5h-5zM455 140h5v5h-5zM475 140h5v5h-5zM490 140h5v5h-5zM505 140h10v5h-10zM520 140h5v5h-5zM530 140h15v5h-15zM550 140h15v5h-15zM600 140h5v5h-5zM615 140h5v5h-5zM635 140h5v5h-5zM660 140h10v5h-10zM675 140h5v5h-5zM690 140h15v5h-15zM720 140h5v5h-5zM740 140h10v5h-10zM765 140h5v5h-5zM775 140h10v5h-10zM790 140h5v5h-5zM805 140h5v5h-5zM5 145h5v5h-5zM35 145h10v5h-10zM55 145h5v5h-5zM75 145h5v5h-5zM130 145h5v5h-5zM140 145h5v5h-5zM175 145h5v5h-5zM185 145h5v5h-5zM195 145h5v5h-5zM210 145h5v5h-5zM220 145h5v5h-5zM235 145h5v5h-5zM270 145h5v5h-5zM280 145h15v5h-15zM310 145h5v5h-5zM325 145h5v5h-5zM340 145h5v5h-5zM350 145h5v5h-5zM420 145h5v5h-5zM430 145h5v5h-5zM440 145h5v5h-5zM460 145h5v5h-5zM475 145h5v5h-5zM485 145h5v5h-5zM495 145h5v5h-5zM510 145h5v5h-5zM535 145h5v5h-5zM545 145h10v5h-10zM560 145h10v5h-10zM575 145h10v5h-10zM600 145h5v5h-5zM610 145h5v5h-5zM655 145h5v5h-5zM680 145h5v5h-5zM705 145h5v5h-5zM725 145h10v5h-10zM745 145h10v5h-10zM770 145h5v5h-5zM780 145h5v5h-5zM795 145h5v5h-5zM820 145h15v5h-15zM0 150h10v5h-10zM30 150h5v5h-5zM60 150h5v5h-5zM70 150h5v5h-5zM80 150h5v5h-5zM90 150h10v5h-10zM105 150h5v5h-5zM115 150h5v5h-5zM155 150h10v5h-10zM175 150h5v5h-5zM185 150h5v5h-5zM210 150h15v5h-15zM230 150h5v5h-5zM240 150h5v5h-5zM255 150h5v5h-5zM275 150h5v5h-5zM290 150h5v5h-5zM300 150h15v5h-15zM345 150h5v5h-5zM360 150h5v5h-5zM370 150h15v5h-15zM400 150h5v5h-5zM435 150h5v5h-5zM445 150h5v5h-5zM455 150h5v5h-5zM465 150h10v5h-10zM485 150h5v5h-5zM495 150h5v5h-5zM530 150h15v5h-15zM550 150h5v5h-5zM565 150h5v5h-5zM580 150h15v5h-15zM615 150h15v5h-15zM640 150h5v5h-5zM650 150h5v5h-5zM660 150h10v5h-10zM685 150h5v5h-5zM705 150h5v5h-5zM715 150h10v5h-10zM730 150h10v5h-10zM750 150h10v5h-10zM765 150h5v5h-5zM785 150h10v5h-10zM810 150h5v5h-5zM825 150h5v5h-5zM10 155h5v5h-5zM30 155h5v5h-5zM40 155h5v5h-5zM65 155h5v5h-5zM80 155h15v5h-15zM105 155h5v5h-5zM115 155h5v5h-5zM125 155h5v5h-5zM140 155h10v5h-10zM165 155h5v5h-5zM180 155h5v5h-5zM195 155h15v5h-15zM220 155h5v5h-5zM265 155h5v5h-5zM280 155h5v5h-5zM300 155h5v5h-5zM330 155h5v5h-5zM340 155h5v5h-5zM365 155h5v5h-5zM385 155h5v5h-5zM415 155h5v5h-5zM425 155h15v5h-15zM450 155h10v5h-10zM485 155h15v5h-15zM530 155h5v5h-5zM540 155h5v5h-5zM560 155h10v5h-10zM605 155h5v5h-5zM615 155h5v5h-5zM625 155h5v5h-5zM640 155h5v5h-5zM660 155h5v5h-5zM675 155h5v5h-5zM700 155h10v5h-10zM720 155h5v5h-5zM735 155h5v5h-5zM750 155h5v5h-5zM770 155h10v5h-10zM790 155h5v5h-5zM805 155h15v5h-15zM0 160h15v5h-15zM20 160h5v5h-5zM30 160h5v5h-5zM40 160h5v5h-5zM50 160h5v5h-5zM65 160h5v5h-5zM80 160h5v5h-5zM100 160h5v5h-5zM110 160h5v5h-5zM145 160h10v5h-10zM170 160h5v5h-5zM180 160h15v5h-15zM200 160h5v5h-5zM215 160h5v5h-5zM235 160h5v5h-5zM260 160h5v5h-5zM270 160h10v5h-10zM290 160h10v5h-10zM305 160h10v5h-10zM325 160h10v5h-10zM340 160h5v5h-5zM355 160h5v5h-5zM365 160h5v5h-5zM390 160h5v5h-5zM420 160h10v5h-10zM455 160h10v5h-10zM475 160h5v5h-5zM505 160h5v5h-5zM515 160h5v5h-5zM530 160h10v5h-10zM590 160h5v5h-5zM615 160h5v5h-5zM625 160h5v5h-5zM645 160h5v5h-5zM655 160h5v5h-5zM670 160h5v5h-5zM715 160h15v5h-15zM735 160h5v5h-5zM745 160h5v5h-5zM755 160h10v5h-10zM795 160h5v5h-5zM815 160h10v5h-10zM10 165h5v5h-5zM35 165h5v5h-5zM45 165h5v5h-5zM60 165h5v5h-5zM75 165h5v5h-5zM90 165h5v5h-5zM105 165h5v5h-5zM125 165h15v5h-15zM160 165h5v5h-5zM185 165h5v5h-5zM195 165h5v5h-5zM205 165h10v5h-10zM235 165h5v5h-5zM245 165h5v5h-5zM255 165h5v5h-5zM280 165h5v5h-5zM290 165h5v5h-5zM330 165h10v5h-10zM350 165h10v5h-10zM370 165h10v5h-10zM385 165h5v5h-5zM415 165h5v5h-5zM425 165h10v5h-10zM450 165h5v5h-5zM460 165h5v5h-5zM470 165h5v5h-5zM495 165h5v5h-5zM510 165h5v5h-5zM525 165h5v5h-5zM540 165h15v5h-15zM560 165h5v5h-5zM570 165h10v5h-10zM600 165h15v5h-15zM620 165h5v5h-5zM640 165h10v5h-10zM670 165h10v5h-10zM715 165h5v5h-5zM755 165h5v5h-5zM770 165h10v5h-10zM790 165h5v5h-5zM815 165h5v5h-5zM0 170h5v5h-5zM20 170h5v5h-5zM30 170h5v5h-5zM40 170h10v5h-10zM55 170h5v5h-5zM65 170h5v5h-5zM80 170h5v5h-5zM90 170h5v5h-5zM100 170h5v5h-5zM110 170h10v5h-10zM135 170h5v5h-5zM145 170h5v5h-5zM165 170h5v5h-5zM175 170h5v5h-5zM200 170h10v5h-10zM225 170h5v5h-5zM240 170h10v5h-10zM270 170h5v5h-5zM285 170h5v5h-5zM300 170h5v5h-5zM315 170h5v5h-5zM325 170h5v5h-5zM340 170h5v5h-5zM350 170h5v5h-5zM360 170h15v5h-15zM380 170h10v5h-10zM395 170h5v5h-5zM410 170h10v5h-10zM435 170h5v5h-5zM460 170h10v5h-10zM485 170h5v5h-5zM495 170h5v5h-5zM505 170h5v5h-5zM515 170h10v5h-10zM530 170h5v5h-5zM545 170h5v5h-5zM585 170h5v5h-5zM610 170h5v5h-5zM625 170h5v5h-5zM650 170h5v5h-5zM660 170h10v5h-10zM675 170h5v5h-5zM690 170h5v5h-5zM700 170h5v5h-5zM720 170h10v5h-10zM780 170h5v5h-5zM10 175h5v5h-5zM25 175h10v5h-10zM55 175h10v5h-10zM70 175h15v5h-15zM95 175h5v5h-5zM105 175h5v5h-5zM115 175h10v5h-10zM130 175h5v5h-5zM145 175h5v5h-5zM160 175h5v5h-5zM170 175h15v5h-15zM205 175h10v5h-10zM235 175h5v5h-5zM245 175h5v5h-5zM275 175h5v5h-5zM285 175h5v5h-5zM295 175h5v5h-5zM340 175h5v5h-5zM355 175h10v5h-10zM410 175h5v5h-5zM430 175h5v5h-5zM445 175h10v5h-10zM490 175h5v5h-5zM500 175h10v5h-10zM515 175h5v5h-5zM555 175h10v5h-10zM585 175h5v5h-5zM600 175h15v5h-15zM620 175h5v5h-5zM660 175h5v5h-5zM670 175h5v5h-5zM680 175h5v5h-5zM705 175h5v5h-5zM725 175h5v5h-5zM750 175h5v5h-5zM765 175h5v5h-5zM785 175h5v5h-5zM800 175h5v5h-5zM815 175h5v5h-5zM15 180h5v5h-5zM70 180h5v5h-5zM85 180h5v5h-5zM95 180h5v5h-5zM110 180h5v5h-5zM120 180h5v5h-5zM140 180h5v5h-5zM165 180h5v5h-5zM180 180h5v5h-5zM190 180h5v5h-5zM210 180h10v5h-10zM230 180h5v5h-5zM255 180h15v5h-15zM275 180h5v5h-5zM290 180h5v5h-5zM305 180h5v5h-5zM320 180h5v5h-5zM335 180h10v5h-10zM355 180h5v5h-5zM385 180h5v5h-5zM400 180h5v5h-5zM425 180h10v5h-10zM440 180h5v5h-5zM455 180h5v5h-5zM470 180h5v5h-5zM485 180h15v5h-15zM515 180h15v5h-15zM535 180h10v5h-10zM550 180h5v5h-5zM560 180h10v5h-10zM590 180h15v5h-15zM630 180h5v5h-5zM640 180h10v5h-10zM655 180h15v5h-15zM715 180h15v5h-15zM740 180h5v5h-5zM780 180h5v5h-5zM805 180h5v5h-5zM815 180h5v5h-5zM20 185h5v5h-5zM50 185h5v5h-5zM75 185h5v5h-5zM95 185h5v5h-5zM110 185h5v5h-5zM120 185h5v5h-5zM155 185h15v5h-15zM195 185h5v5h-5zM205 185h5v5h-5zM230 185h10v5h-10zM260 185h5v5h-5zM270 185h10v5h-10zM290 185h5v5h-5zM315 185h10v5h-10zM350 185h10v5h-10zM370 185h10v5h-10zM385 185h5v5h-5zM400 185h5v5h-5zM410 185h15v5h-15zM440 185h5v5h-5zM470 185h5v5h-5zM495 185h15v5h-15zM540 185h10v5h-10zM555 185h5v5h-5zM565 185h5v5h-5zM600 185h5v5h-5zM610 185h5v5h-5zM630 185h10v5h-10zM670 185h5v5h-5zM680 185h10v5h-10zM720 185h5v5h-5zM740 185h15v5h-15zM760 185h5v5h-5zM775 185h5v5h-5zM785 185h5v5h-5zM795 185h15v5h-15zM815 185h5v5h-5zM830 185h5v5h-5zM15 190h5v5h-5zM30 190h15v5h-15zM60 190h5v5h-5zM70 190h10v5h-10zM85 190h10v5h-10zM100 190h15v5h-15zM130 190h5v5h-5zM150 190h5v5h-5zM175 190h10v5h-10zM195 190h5v5h-5zM210 190h5v5h-5zM220 190h5v5h-5zM235 190h5v5h-5zM250 190h5v5h-5zM270 190h5v5h-5zM280 190h15v5h-15zM305 190h5v5h-5zM315 190h5v5h-5zM330 190h10v5h-10zM370 190h5v5h-5zM385 190h5v5h-5zM400 190h5v5h-5zM425 190h5v5h-5zM435 190h5v5h-5zM450 190h5v5h-5zM470 190h5v5h-5zM500 190h5v5h-5zM510 190h5v5h-5zM520 190h5v5h-5zM555 190h5v5h-5zM575 190h5v5h-5zM605 190h5v5h-5zM615 190h15v5h-15zM640 190h10v5h-10zM665 190h5v5h-5zM680 190h5v5h-5zM690 190h5v5h-5zM700 190h5v5h-5zM720 190h5v5h-5zM740 190h5v5h-5zM755 190h5v5h-5zM770 190h10v5h-10zM820 190h15v5h-15zM0 195h5v5h-5zM10 195h5v5h-5zM45 195h5v5h-5zM55 195h5v5h-5zM75 195h10v5h-10zM100 195h5v5h-5zM180 195h5v5h-5zM205 195h5v5h-5zM230 195h10v5h-10zM260 195h15v5h-15zM285 195h5v5h-5zM295 195h10v5h-10zM315 195h10v5h-10zM345 195h5v5h-5zM365 195h5v5h-5zM390 195h10v5h-10zM405 195h5v5h-5zM440 195h5v5h-5zM455 195h5v5h-5zM475 195h10v5h-10zM490 195h5v5h-5zM505 195h5v5h-5zM515 195h5v5h-5zM530 195h5v5h-5zM540 195h5v5h-5zM560 195h15v5h-15zM580 195h10v5h-10zM605 195h5v5h-5zM615 195h5v5h-5zM625 195h10v5h-10zM645 195h15v5h-15zM665 195h5v5h-5zM715 195h5v5h-5zM745 195h5v5h-5zM755 195h5v5h-5zM775 195h15v5h-15zM800 195h5v5h-5zM815 195h10v5h-10zM5 200h15v5h-15zM25 200h5v5h-5zM55 200h15v5h-15zM95 200h5v5h-5zM110 200h10v5h-10zM125 200h5v5h-5zM135 200h5v5h-5zM145 200h5v5h-5zM155 200h15v5h-15zM190 200h15v5h-15zM210 200h5v5h-5zM220 200h10v5h-10zM240 200h10v5h-10zM265 200h5v5h-5zM275 200h15v5h-15zM320 200h5v5h-5zM330 200h15v5h-15zM355 200h10v5h-10zM375 200h5v5h-5zM395 200h5v5h-5zM405 200h15v5h-15zM425 200h5v5h-5zM455 200h10v5h-10zM500 200h15v5h-15zM520 200h5v5h-5zM535 200h5v5h-5zM560 200h5v5h-5zM585 200h10v5h-10zM610 200h10v5h-10zM635 200h5v5h-5zM665 200h10v5h-10zM685 200h15v5h-15zM705 200h5v5h-5zM740 200h5v5h-5zM750 200h10v5h-10zM785 200h15v5h-15zM805 200h5v5h-5zM820 200h5v5h-5zM15 205h5v5h-5zM35 205h5v5h-5zM55 205h5v5h-5zM95 205h5v5h-5zM120 205h10v5h-10zM155 205h5v5h-5zM165 205h5v5h-5zM175 205h10v5h-10zM190 205h5v5h-5zM215 205h5v5h-5zM225 205h5v5h-5zM250 205h15v5h-15zM290 205h15v5h-15zM310 205h5v5h-5zM320 205h5v5h-5zM340 205h5v5h-5zM370 205h10v5h-10zM390 205h5v5h-5zM420 205h10v5h-10zM440 205h15v5h-15zM465 205h5v5h-5zM475 205h5v5h-5zM485 205h15v5h-15zM515 205h5v5h-5zM540 205h5v5h-5zM565 205h10v5h-10zM580 205h5v5h-5zM590 205h5v5h-5zM625 205h5v5h-5zM640 205h10v5h-10zM655 205h5v5h-5zM670 205h5v5h-5zM680 205h5v5h-5zM690 205h5v5h-5zM700 205h5v5h-5zM740 205h5v5h-5zM785 205h5v5h-5zM795 205h5v5h-5zM810 205h5v5h-5zM825 205h5v5h-5zM10 210h10v5h-10zM25 210h10v5h-10zM50 210h5v5h-5zM70 210h10v5h-10zM85 210h5v5h-5zM100 210h10v5h-10zM115 210h10v5h-10zM135 210h10v5h-10zM150 210h5v5h-5zM165 210h5v5h-5zM175 210h5v5h-5zM200 210h5v5h-5zM220 210h5v5h-5zM260 210h5v5h-5zM290 210h5v5h-5zM310 210h5v5h-5zM350 210h10v5h-10zM365 210h10v5h-10zM400 210h15v5h-15zM420 210h5v5h-5zM435 210h5v5h-5zM455 210h5v5h-5zM470 210h5v5h-5zM480 210h10v5h-10zM505 210h10v5h-10zM525 210h5v5h-5zM580 210h10v5h-10zM605 210h10v5h-10zM625 210h15v5h-15zM660 210h5v5h-5zM670 210h5v5h-5zM695 210h15v5h-15zM725 210h5v5h-5zM735 210h15v5h-15zM795 210h5v5h-5zM805 210h15v5h-15zM825 210h5v5h-5zM0 215h5v5h-5zM30 215h5v5h-5zM55 215h5v5h-5zM85 215h15v5h-15zM105 215h5v5h-5zM125 215h5v5h-5zM145 215h5v5h-5zM160 215h5v5h-5zM185 215h10v5h-10zM200 215h10v5h-10zM245 215h10v5h-10zM265 215h15v5h-15zM285 215h10v5h-10zM300 215h10v5h-10zM315 215h15v5h-15zM335 215h5v5h-5zM345 215h10v5h-10zM375 215h10v5h-10zM395 215h5v5h-5zM410 215h5v5h-5zM425 215h10v5h-10zM460 215h10v5h-10zM485 215h5v5h-5zM495 215h15v5h-15zM535 215h5v5h-5zM550 215h5v5h-5zM560 215h5v5h-5zM570 215h15v5h-15zM610 215h5v5h-5zM620 215h10v5h-10zM635 215h10v5h-10zM655 215h10v5h-10zM675 215h10v5h-10zM695 215h5v5h-5zM705 215h5v5h-5zM720 215h5v5h-5zM790 215h5v5h-5zM805 215h5v5h-5zM815 215h5v5h-5zM25 220h5v5h-5zM50 220h10v5h-10zM70 220h10v5h-10zM85 220h5v5h-5zM100 220h5v5h-5zM120 220h10v5h-10zM140 220h15v5h-15zM170 220h15v5h-15zM235 220h10v5h-10zM260 220h5v5h-5zM280 220h5v5h-5zM295 220h5v5h-5zM305 220h10v5h-10zM325 220h10v5h-10zM340 220h5v5h-5zM365 220h5v5h-5zM375 220h5v5h-5zM400 220h10v5h-10zM415 220h10v5h-10zM440 220h5v5h-5zM455 220h10v5h-10zM500 220h5v5h-5zM510 220h15v5h-15zM545 220h5v5h-5zM560 220h5v5h-5zM585 220h5v5h-5zM600 220h5v5h-5zM615 220h5v5h-5zM640 220h5v5h-5zM660 220h10v5h-10zM675 220h5v5h-5zM685 220h5v5h-5zM705 220h5v5h-5zM715 220h15v5h-15zM745 220h5v5h-5zM755 220h5v5h-5zM770 220h5v5h-5zM785 220h5v5h-5zM800 220h15v5h-15zM5 225h5v5h-5zM35 225h15v5h-15zM65 225h10v5h-10zM80 225h5v5h-5zM95 225h5v5h-5zM120 225h5v5h-5zM145 225h5v5h-5zM160 225h15v5h-15zM185 225h5v5h-5zM200 225h5v5h-5zM215 225h5v5h-5zM240 225h5v5h-5zM250 225h5v5h-5zM265 225h5v5h-5zM275 225h5v5h-5zM300 225h10v5h-10zM320 225h5v5h-5zM335 225h10v5h-10zM360 225h10v5h-10zM375 225h5v5h-5zM390 225h5v5h-5zM405 225h10v5h-10zM430 225h15v5h-15zM485 225h5v5h-5zM505 225h10v5h-10zM545 225h10v5h-10zM575 225h5v5h-5zM595 225h10v5h-10zM615 225h5v5h-5zM645 225h5v5h-5zM665 225h5v5h-5zM680 225h10v5h-10zM710 225h5v5h-5zM720 225h5v5h-5zM730 225h5v5h-5zM740 225h5v5h-5zM765 225h5v5h-5zM790 225h5v5h-5zM800 225h5v5h-5zM825 225h5v5h-5zM10 230h5v5h-5zM25 230h10v5h-10zM45 230h10v5h-10zM60 230h5v5h-5zM70 230h10v5h-10zM95 230h5v5h-5zM125 230h5v5h-5zM135 230h10v5h-10zM180 230h15v5h-15zM210 230h5v5h-5zM220 230h5v5h-5zM245 230h5v5h-5zM270 230h5v5h-5zM280 230h10v5h-10zM315 230h10v5h-10zM340 230h10v5h-10zM355 230h5v5h-5zM385 230h15v5h-15zM415 230h10v5h-10zM430 230h5v5h-5zM445 230h5v5h-5zM490 230h10v5h-10zM515 230h10v5h-10zM530 230h5v5h-5zM545 230h5v5h-5zM555 230h5v5h-5zM570 230h5v5h-5zM630 230h15v5h-15zM655 230h5v5h-5zM665 230h15v5h-15zM690 230h5v5h-5zM730 230h5v5h-5zM745 230h10v5h-10zM770 230h5v5h-5zM780 230h5v5h-5zM790 230h5v5h-5zM800 230h10v5h-10zM5 235h5v5h-5zM15 235h10v5h-10zM30 235h5v5h-5zM40 235h5v5h-5zM50 235h5v5h-5zM60 235h5v5h-5zM80 235h5v5h-5zM100 235h5v5h-5zM130 235h10v5h-10zM145 235h10v5h-10zM160 235h5v5h-5zM170 235h15v5h-15zM200 235h5v5h-5zM235 235h10v5h-10zM260 235h5v5h-5zM290 235h15v5h-15zM345 235h5v5h-5zM380 235h5v5h-5zM390 235h5v5h-5zM415 235h5v5h-5zM425 235h5v5h-5zM435 235h5v5h-5zM450 235h10v5h-10zM475 235h15v5h-15zM495 235h5v5h-5zM505 235h10v5h-10zM525 235h5v5h-5zM560 235h5v5h-5zM575 235h15v5h-15zM615 235h10v5h-10zM630 235h5v5h-5zM640 235h15v5h-15zM680 235h5v5h-5zM700 235h5v5h-5zM715 235h5v5h-5zM725 235h5v5h-5zM735 235h5v5h-5zM745 235h5v5h-5zM770 235h5v5h-5zM805 235h5v5h-5zM825 235h5v5h-5zM45 240h10v5h-10zM60 240h5v5h-5zM70 240h5v5h-5zM80 240h10v5h-10zM145 240h5v5h-5zM170 240h5v5h-5zM180 240h5v5h-5zM200 240h5v5h-5zM225 240h10v5h-10zM250 240h5v5h-5zM270 240h5v5h-5zM285 240h5v5h-5zM300 240h5v5h-5zM310 240h5v5h-5zM325 240h15v5h-15zM355 240h10v5h-10zM370 240h10v5h-10zM400 240h5v5h-5zM415 240h5v5h-5zM425 240h5v5h-5zM450 240h5v5h-5zM470 240h5v5h-5zM480 240h5v5h-5zM510 240h5v5h-5zM540 240h5v5h-5zM550 240h10v5h-10zM570 240h5v5h-5zM580 240h5v5h-5zM590 240h10v5h-10zM605 240h5v5h-5zM615 240h5v5h-5zM625 240h10v5h-10zM640 240h5v5h-5zM665 240h5v5h-5zM690 240h15v5h-15zM715 240h5v5h-5zM735 240h5v5h-5zM755 240h5v5h-5zM780 240h10v5h-10zM795 240h5v5h-5zM815 240h5v5h-5zM0 245h5v5h-5zM10 245h5v5h-5zM20 245h15v5h-15zM40 245h5v5h-5zM55 245h5v5h-5zM65 245h5v5h-5zM80 245h5v5h-5zM100 245h5v5h-5zM115 245h5v5h-5zM130 245h5v5h-5zM150 245h5v5h-5zM160 245h5v5h-5zM230 245h10v5h-10zM275 245h5v5h-5zM290 245h5v5h-5zM300 245h10v5h-10zM315 245h5v5h-5zM335 245h5v5h-5zM370 245h5v5h-5zM380 245h10v5h-10zM395 245h5v5h-5zM410 245h5v5h-5zM420 245h5v5h-5zM430 245h5v5h-5zM455 245h15v5h-15zM480 245h10v5h-10zM495 245h10v5h-10zM510 245h5v5h-5zM520 245h5v5h-5zM535 245h5v5h-5zM565 245h5v5h-5zM575 245h5v5h-5zM585 245h5v5h-5zM605 245h5v5h-5zM655 245h5v5h-5zM665 245h5v5h-5zM700 245h15v5h-15zM730 245h10v5h-10zM760 245h15v5h-15zM780 245h5v5h-5zM800 245h15v5h-15zM820 245h10v5h-10zM5 250h5v5h-5zM25 250h5v5h-5zM35 250h10v5h-10zM50 250h5v5h-5zM65 250h10v5h-10zM95 250h5v5h-5zM105 250h5v5h-5zM130 250h5v5h-5zM170 250h5v5h-5zM180 250h10v5h-10zM205 250h5v5h-5zM260 250h15v5h-15zM285 250h5v5h-5zM315 250h5v5h-5zM345 250h10v5h-10zM365 250h5v5h-5zM395 250h15v5h-15zM415 250h10v5h-10zM430 250h5v5h-5zM445 250h5v5h-5zM455 250h5v5h-5zM485 250h5v5h-5zM495 250h5v5h-5zM515 250h10v5h-10zM535 250h5v5h-5zM545 250h5v5h-5zM570 250h15v5h-15zM590 250h15v5h-15zM615 250h5v5h-5zM625 250h10v5h-10zM645 250h5v5h-5zM665 250h15v5h-15zM695 250h5v5h-5zM705 250h5v5h-5zM720 250h5v5h-5zM730 250h5v5h-5zM740 250h5v5h-5zM760 250h5v5h-5zM780 250h5v5h-5zM795 250h5v5h-5zM0 255h5v5h-5zM15 255h5v5h-5zM25 255h10v5h-10zM55 255h5v5h-5zM80 255h5v5h-5zM100 255h10v5h-10zM145 255h5v5h-5zM165 255h10v5h-10zM190 255h5v5h-5zM215 255h5v5h-5zM225 255h5v5h-5zM240 255h5v5h-5zM260 255h5v5h-5zM275 255h5v5h-5zM290 255h15v5h-15zM345 255h5v5h-5zM355 255h10v5h-10zM370 255h10v5h-10zM390 255h10v5h-10zM410 255h5v5h-5zM430 255h15v5h-15zM460 255h5v5h-5zM470 255h5v5h-5zM490 255h5v5h-5zM515 255h5v5h-5zM565 255h5v5h-5zM575 255h5v5h-5zM585 255h10v5h-10zM600 255h5v5h-5zM610 255h5v5h-5zM650 255h5v5h-5zM670 255h5v5h-5zM695 255h5v5h-5zM710 255h5v5h-5zM745 255h15v5h-15zM770 255h5v5h-5zM805 255h5v5h-5zM815 255h5v5h-5zM825 255h5v5h-5zM0 260h5v5h-5zM50 260h5v5h-5zM90 260h5v5h-5zM100 260h5v5h-5zM120 260h5v5h-5zM130 260h5v5h-5zM140 260h10v5h-10zM160 260h5v5h-5zM185 260h10v5h-10zM200 260h5v5h-5zM210 260h5v5h-5zM245 260h15v5h-15zM290 260h5v5h-5zM305 260h5v5h-5zM315 260h10v5h-10zM335 260h10v5h-10zM350 260h5v5h-5zM360 260h15v5h-15zM380 260h5v5h-5zM405 260h5v5h-5zM415 260h15v5h-15zM440 260h15v5h-15zM480 260h15v5h-15zM520 260h5v5h-5zM535 260h5v5h-5zM545 260h5v5h-5zM595 260h10v5h-10zM610 260h5v5h-5zM650 260h10v5h-10zM670 260h5v5h-5zM680 260h10v5h-10zM725 260h5v5h-5zM740 260h5v5h-5zM750 260h5v5h-5zM770 260h5v5h-5zM785 260h5v5h-5zM800 260h5v5h-5zM815 260h5v5h-5zM0 265h10v5h-10zM35 265h15v5h-15zM60 265h5v5h-5zM70 265h10v5h-10zM90 265h5v5h-5zM135 265h5v5h-5zM145 265h5v5h-5zM185 265h5v5h-5zM205 265h5v5h-5zM235 265h5v5h-5zM255 265h10v5h-10zM275 265h5v5h-5zM300 265h5v5h-5zM315 265h5v5h-5zM335 265h5v5h-5zM345 265h5v5h-5zM355 265h5v5h-5zM365 265h5v5h-5zM395 265h5v5h-5zM420 265h5v5h-5zM430 265h5v5h-5zM440 265h5v5h-5zM470 265h5v5h-5zM485 265h5v5h-5zM500 265h10v5h-10zM530 265h15v5h-15zM550 265h5v5h-5zM565 265h15v5h-15zM585 265h5v5h-5zM595 265h5v5h-5zM625 265h5v5h-5zM645 265h10v5h-10zM680 265h5v5h-5zM695 265h10v5h-10zM720 265h10v5h-10zM740 265h10v5h-10zM765 265h5v5h-5zM10 270h5v5h-5zM20 270h10v5h-10zM35 270h5v5h-5zM45 270h10v5h-10zM75 270h5v5h-5zM130 270h5v5h-5zM175 270h5v5h-5zM190 270h5v5h-5zM205 270h5v5h-5zM245 270h5v5h-5zM265 270h5v5h-5zM280 270h5v5h-5zM315 270h5v5h-5zM345 270h5v5h-5zM355 270h5v5h-5zM380 270h10v5h-10zM450 270h10v5h-10zM470 270h5v5h-5zM495 270h5v5h-5zM520 270h10v5h-10zM550 270h15v5h-15zM570 270h5v5h-5zM580 270h10v5h-10zM595 270h5v5h-5zM615 270h5v5h-5zM685 270h5v5h-5zM710 270h5v5h-5zM720 270h5v5h-5zM730 270h15v5h-15zM755 270h10v5h-10zM775 270h5v5h-5zM785 270h10v5h-10zM805 270h10v5h-10zM820 270h5v5h-5zM0 275h5v5h-5zM10 275h15v5h-15zM75 275h5v5h-5zM95 275h5v5h-5zM110 275h10v5h-10zM125 275h5v5h-5zM135 275h5v5h-5zM150 275h5v5h-5zM160 275h5v5h-5zM175 275h15v5h-15zM220 275h5v5h-5zM235 275h5v5h-5zM245 275h5v5h-5zM255 275h5v5h-5zM265 275h5v5h-5zM295 275h10v5h-10zM310 275h5v5h-5zM330 275h10v5h-10zM350 275h10v5h-10zM390 275h5v5h-5zM425 275h5v5h-5zM445 275h5v5h-5zM460 275h5v5h-5zM495 275h15v5h-15zM515 275h10v5h-10zM530 275h5v5h-5zM550 275h5v5h-5zM560 275h15v5h-15zM585 275h5v5h-5zM610 275h10v5h-10zM625 275h5v5h-5zM650 275h5v5h-5zM695 275h15v5h-15zM720 275h10v5h-10zM745 275h15v5h-15zM775 275h10v5h-10zM790 275h5v5h-5zM805 275h5v5h-5zM25 280h5v5h-5zM40 280h15v5h-15zM60 280h5v5h-5zM90 280h5v5h-5zM115 280h10v5h-10zM160 280h5v5h-5zM175 280h5v5h-5zM190 280h5v5h-5zM200 280h5v5h-5zM220 280h5v5h-5zM260 280h10v5h-10zM275 280h5v5h-5zM285 280h5v5h-5zM335 280h5v5h-5zM345 280h10v5h-10zM360 280h5v5h-5zM375 280h5v5h-5zM425 280h5v5h-5zM440 280h10v5h-10zM455 280h5v5h-5zM465 280h5v5h-5zM475 280h5v5h-5zM485 280h5v5h-5zM500 280h5v5h-5zM520 280h5v5h-5zM540 280h10v5h-10zM555 280h5v5h-5zM575 280h10v5h-10zM595 280h5v5h-5zM605 280h10v5h-10zM625 280h15v5h-15zM675 280h10v5h-10zM690 280h5v5h-5zM700 280h5v5h-5zM730 280h15v5h-15zM760 280h5v5h-5zM775 280h5v5h-5zM795 280h5v5h-5zM820 280h5v5h-5zM830 280h5v5h-5zM15 285h5v5h-5zM45 285h5v5h-5zM60 285h5v5h-5zM70 285h5v5h-5zM130 285h5v5h-5zM140 285h15v5h-15zM190 285h15v5h-15zM215 285h5v5h-5zM270 285h10v5h-10zM290 285h5v5h-5zM345 285h5v5h-5zM360 285h5v5h-5zM375 285h10v5h-10zM395 285h15v5h-15zM420 285h5v5h-5zM440 285h5v5h-5zM455 285h5v5h-5zM475 285h10v5h-10zM490 285h5v5h-5zM505 285h10v5h-10zM530 285h5v5h-5zM560 285h15v5h-15zM595 285h5v5h-5zM615 285h10v5h-10zM645 285h5v5h-5zM655 285h5v5h-5zM665 285h15v5h-15zM700 285h5v5h-5zM710 285h5v5h-5zM730 285h5v5h-5zM770 285h5v5h-5zM785 285h5v5h-5zM795 285h5v5h-5zM805 285h5v5h-5zM820 285h10v5h-10zM5 290h5v5h-5zM15 290h15v5h-15zM45 290h5v5h-5zM60 290h10v5h-10zM90 290h10v5h-10zM120 290h5v5h-5zM135 290h5v5h-5zM150 290h5v5h-5zM160 290h5v5h-5zM175 290h5v5h-5zM195 290h5v5h-5zM205 290h5v5h-5zM215 290h5v5h-5zM225 290h5v5h-5zM235 290h5v5h-5zM245 290h5v5h-5zM260 290h5v5h-5zM295 290h5v5h-5zM315 290h5v5h-5zM330 290h5v5h-5zM390 290h5v5h-5zM420 290h5v5h-5zM430 290h5v5h-5zM440 290h5v5h-5zM460 290h10v5h-10zM485 290h15v5h-15zM505 290h5v5h-5zM525 290h5v5h-5zM545 290h15v5h-15zM565 290h5v5h-5zM580 290h5v5h-5zM600 290h5v5h-5zM640 290h5v5h-5zM655 290h5v5h-5zM675 290h5v5h-5zM690 290h5v5h-5zM710 290h10v5h-10zM725 290h5v5h-5zM745 290h5v5h-5zM765 290h5v5h-5zM815 290h5v5h-5zM825 290h5v5h-5zM0 295h10v5h-10zM15 295h5v5h-5zM25 295h5v5h-5zM50 295h5v5h-5zM100 295h10v5h-10zM145 295h5v5h-5zM175 295h5v5h-5zM200 295h5v5h-5zM210 295h10v5h-10zM225 295h5v5h-5zM235 295h5v5h-5zM250 295h5v5h-5zM270 295h10v5h-10zM310 295h5v5h-5zM320 295h5v5h-5zM335 295h10v5h-10zM360 295h5v5h-5zM370 295h5v5h-5zM395 295h5v5h-5zM410 295h5v5h-5zM425 295h5v5h-5zM470 295h15v5h-15zM510 295h10v5h-10zM525 295h5v5h-5zM555 295h5v5h-5zM635 295h5v5h-5zM650 295h5v5h-5zM660 295h5v5h-5zM670 295h5v5h-5zM685 295h5v5h-5zM700 295h10v5h-10zM720 295h15v5h-15zM755 295h5v5h-5zM765 295h5v5h-5zM780 295h5v5h-5zM790 295h5v5h-5zM815 295h5v5h-5zM45 300h15v5h-15zM65 300h10v5h-10zM80 300h5v5h-5zM100 300h5v5h-5zM110 300h10v5h-10zM125 300h10v5h-10zM150 300h5v5h-5zM180 300h15v5h-15zM205 300h5v5h-5zM230 300h5v5h-5zM240 300h5v5h-5zM265 300h10v5h-10zM290 300h15v5h-15zM315 300h5v5h-5zM325 300h15v5h-15zM350 300h5v5h-5zM380 300h10v5h-10zM395 300h5v5h-5zM415 300h5v5h-5zM430 300h15v5h-15zM455 300h10v5h-10zM470 300h5v5h-5zM490 300h5v5h-5zM500 300h10v5h-10zM520 300h10v5h-10zM540 300h5v5h-5zM550 300h5v5h-5zM565 300h5v5h-5zM580 300h10v5h-10zM595 300h5v5h-5zM630 300h5v5h-5zM665 300h5v5h-5zM705 300h5v5h-5zM725 300h5v5h-5zM740 300h5v5h-5zM755 300h5v5h-5zM770 300h5v5h-5zM780 300h10v5h-10zM810 300h10v5h-10zM825 300h5v5h-5zM10 305h5v5h-5zM25 305h5v5h-5zM35 305h15v5h-15zM60 305h10v5h-10zM75 305h5v5h-5zM90 305h10v5h-10zM110 305h5v5h-5zM130 305h5v5h-5zM140 305h5v5h-5zM150 305h5v5h-5zM175 305h5v5h-5zM190 305h5v5h-5zM205 305h5v5h-5zM240 305h10v5h-10zM255 305h5v5h-5zM275 305h15v5h-15zM305 305h5v5h-5zM320 305h5v5h-5zM340 305h15v5h-15zM360 305h5v5h-5zM370 305h10v5h-10zM385 305h15v5h-15zM405 305h5v5h-5zM415 305h5v5h-5zM435 305h5v5h-5zM465 305h5v5h-5zM485 305h10v5h-10zM510 305h10v5h-10zM530 305h5v5h-5zM550 305h5v5h-5zM575 305h5v5h-5zM610 305h15v5h-15zM630 305h15v5h-15zM695 305h15v5h-15zM715 305h10v5h-10zM735 305h5v5h-5zM770 305h5v5h-5zM780 305h5v5h-5zM795 305h10v5h-10zM810 305h5v5h-5zM825 305h5v5h-5zM20 310h15v5h-15zM40 310h5v5h-5zM55 310h10v5h-10zM80 310h15v5h-15zM100 310h5v5h-5zM115 310h10v5h-10zM150 310h5v5h-5zM210 310h5v5h-5zM235 310h10v5h-10zM260 310h5v5h-5zM275 310h5v5h-5zM290 310h15v5h-15zM330 310h10v5h-10zM360 310h10v5h-10zM385 310h5v5h-5zM420 310h10v5h-10zM440 310h10v5h-10zM460 310h5v5h-5zM475 310h10v5h-10zM515 310h10v5h-10zM535 310h10v5h-10zM555 310h5v5h-5zM570 310h5v5h-5zM580 310h5v5h-5zM610 310h5v5h-5zM670 310h10v5h-10zM685 310h15v5h-15zM745 310h15v5h-15zM770 310h10v5h-10zM800 310h5v5h-5zM820 310h5v5h-5zM0 315h10v5h-10zM35 315h10v5h-10zM85 315h5v5h-5zM110 315h5v5h-5zM120 315h5v5h-5zM130 315h5v5h-5zM140 315h5v5h-5zM155 315h5v5h-5zM165 315h5v5h-5zM215 315h10v5h-10zM280 315h10v5h-10zM305 315h5v5h-5zM320 315h5v5h-5zM345 315h5v5h-5zM370 315h5v5h-5zM395 315h10v5h-10zM420 315h5v5h-5zM430 315h5v5h-5zM455 315h10v5h-10zM470 315h10v5h-10zM525 315h10v5h-10zM545 315h5v5h-5zM555 315h5v5h-5zM565 315h5v5h-5zM590 315h10v5h-10zM610 315h5v5h-5zM625 315h5v5h-5zM640 315h10v5h-10zM670 315h5v5h-5zM680 315h10v5h-10zM725 315h10v5h-10zM755 315h10v5h-10zM775 315h5v5h-5zM790 315h5v5h-5zM820 315h10v5h-10zM0 320h5v5h-5zM10 320h5v5h-5zM20 320h10v5h-10zM55 320h5v5h-5zM75 320h15v5h-15zM95 320h5v5h-5zM125 320h5v5h-5zM145 320h5v5h-5zM160 320h5v5h-5zM200 320h5v5h-5zM210 320h5v5h-5zM220 320h5v5h-5zM235 320h5v5h-5zM250 320h10v5h-10zM270 320h10v5h-10zM285 320h10v5h-10zM320 320h10v5h-10zM340 320h10v5h-10zM355 320h15v5h-15zM375 320h5v5h-5zM390 320h5v5h-5zM400 320h5v5h-5zM410 320h5v5h-5zM420 320h5v5h-5zM430 320h5v5h-5zM440 320h5v5h-5zM450 320h5v5h-5zM485 320h10v5h-10zM505 320h5v5h-5zM515 320h5v5h-5zM525 320h5v5h-5zM540 320h5v5h-5zM550 320h10v5h-10zM565 320h5v5h-5zM580 320h5v5h-5zM590 320h5v5h-5zM615 320h5v5h-5zM645 320h5v5h-5zM660 320h5v5h-5zM670 320h5v5h-5zM680 320h5v5h-5zM720 320h5v5h-5zM730 320h5v5h-5zM750 320h10v5h-10zM785 320h5v5h-5zM795 320h5v5h-5zM805 320h5v5h-5zM820 320h5v5h-5zM5 325h5v5h-5zM20 325h5v5h-5zM35 325h5v5h-5zM50 325h5v5h-5zM70 325h5v5h-5zM90 325h5v5h-5zM110 325h5v5h-5zM120 325h15v5h-15zM150 325h5v5h-5zM165 325h5v5h-5zM175 325h5v5h-5zM185 325h5v5h-5zM205 325h5v5h-5zM240 325h5v5h-5zM260 325h5v5h-5zM275 325h5v5h-5zM300 325h5v5h-5zM315 325h5v5h-5zM325 325h5v5h-5zM350 325h5v5h-5zM365 325h15v5h-15zM385 325h5v5h-5zM395 325h5v5h-5zM410 325h10v5h-10zM425 325h5v5h-5zM435 325h10v5h-10zM450 325h5v5h-5zM470 325h5v5h-5zM480 325h10v5h-10zM500 325h15v5h-15zM520 325h5v5h-5zM545 325h5v5h-5zM560 325h5v5h-5zM570 325h5v5h-5zM580 325h5v5h-5zM600 325h10v5h-10zM660 325h10v5h-10zM690 325h10v5h-10zM705 325h5v5h-5zM715 325h5v5h-5zM740 325h5v5h-5zM785 325h10v5h-10zM810 325h5v5h-5zM830 325h5v5h-5zM0 330h10v5h-10zM15 330h5v5h-5zM30 330h5v5h-5zM40 330h5v5h-5zM50 330h5v5h-5zM65 330h10v5h-10zM135 330h5v5h-5zM160 330h5v5h-5zM180 330h5v5h-5zM200 330h5v5h-5zM240 330h5v5h-5zM260 330h15v5h-15zM280 330h5v5h-5zM290 330h10v5h-10zM305 330h5v5h-5zM315 330h5v5h-5zM325 330h5v5h-5zM335 330h5v5h-5zM345 330h5v5h-5zM355 330h5v5h-5zM380 330h5v5h-5zM395 330h5v5h-5zM410 330h5v5h-5zM425 330h15v5h-15zM450 330h5v5h-5zM460 330h5v5h-5zM485 330h5v5h-5zM505 330h5v5h-5zM515 330h5v5h-5zM525 330h10v5h-10zM540 330h5v5h-5zM555 330h10v5h-10zM580 330h5v5h-5zM595 330h5v5h-5zM610 330h5v5h-5zM630 330h10v5h-10zM645 330h15v5h-15zM665 330h5v5h-5zM695 330h10v5h-10zM710 330h5v5h-5zM720 330h5v5h-5zM730 330h5v5h-5zM740 330h5v5h-5zM760 330h15v5h-15zM795 330h5v5h-5zM805 330h10v5h-10zM820 330h5v5h-5zM830 330h5v5h-5zM10 335h5v5h-5zM25 335h10v5h-10zM80 335h15v5h-15zM105 335h5v5h-5zM120 335h5v5h-5zM135 335h5v5h-5zM145 335h15v5h-15zM165 335h10v5h-10zM190 335h10v5h-10zM210 335h5v5h-5zM225 335h15v5h-15zM250 335h10v5h-10zM265 335h5v5h-5zM280 335h10v5h-10zM300 335h5v5h-5zM320 335h5v5h-5zM340 335h5v5h-5zM380 335h15v5h-15zM400 335h5v5h-5zM430 335h5v5h-5zM495 335h10v5h-10zM510 335h5v5h-5zM520 335h10v5h-10zM550 335h5v5h-5zM585 335h5v5h-5zM595 335h10v5h-10zM630 335h5v5h-5zM640 335h10v5h-10zM670 335h5v5h-5zM680 335h5v5h-5zM690 335h10v5h-10zM710 335h5v5h-5zM725 335h10v5h-10zM750 335h15v5h-15zM790 335h5v5h-5zM810 335h5v5h-5zM0 340h5v5h-5zM10 340h15v5h-15zM45 340h5v5h-5zM70 340h5v5h-5zM115 340h10v5h-10zM155 340h15v5h-15zM190 340h5v5h-5zM205 340h5v5h-5zM240 340h10v5h-10zM260 340h10v5h-10zM285 340h5v5h-5zM310 340h5v5h-5zM320 340h5v5h-5zM330 340h5v5h-5zM345 340h5v5h-5zM355 340h15v5h-15zM380 340h5v5h-5zM425 340h10v5h-10zM445 340h10v5h-10zM465 340h5v5h-5zM480 340h10v5h-10zM500 340h15v5h-15zM520 340h5v5h-5zM530 340h5v5h-5zM540 340h10v5h-10zM555 340h15v5h-15zM580 340h5v5h-5zM600 340h5v5h-5zM615 340h15v5h-15zM635 340h10v5h-10zM655 340h5v5h-5zM690 340h5v5h-5zM705 340h15v5h-15zM745 340h10v5h-10zM760 340h5v5h-5zM805 340h5v5h-5zM815 340h5v5h-5zM5 345h5v5h-5zM15 345h5v5h-5zM25 345h5v5h-5zM40 345h5v5h-5zM65 345h10v5h-10zM95 345h5v5h-5zM165 345h5v5h-5zM185 345h5v5h-5zM195 345h5v5h-5zM210 345h15v5h-15zM235 345h10v5h-10zM260 345h5v5h-5zM270 345h5v5h-5zM295 345h10v5h-10zM320 345h15v5h-15zM360 345h5v5h-5zM370 345h10v5h-10zM390 345h10v5h-10zM415 345h10v5h-10zM450 345h10v5h-10zM465 345h5v5h-5zM485 345h5v5h-5zM540 345h5v5h-5zM550 345h10v5h-10zM570 345h10v5h-10zM595 345h5v5h-5zM605 345h15v5h-15zM625 345h5v5h-5zM655 345h10v5h-10zM685 345h5v5h-5zM700 345h10v5h-10zM715 345h5v5h-5zM735 345h5v5h-5zM750 345h10v5h-10zM770 345h10v5h-10zM785 345h5v5h-5zM795 345h10v5h-10zM820 345h15v5h-15zM5 350h10v5h-10zM35 350h5v5h-5zM50 350h5v5h-5zM60 350h10v5h-10zM80 350h10v5h-10zM95 350h5v5h-5zM110 350h5v5h-5zM120 350h10v5h-10zM170 350h5v5h-5zM190 350h5v5h-5zM200 350h15v5h-15zM255 350h15v5h-15zM295 350h5v5h-5zM330 350h5v5h-5zM355 350h5v5h-5zM365 350h5v5h-5zM375 350h5v5h-5zM385 350h5v5h-5zM400 350h10v5h-10zM420 350h15v5h-15zM440 350h5v5h-5zM450 350h5v5h-5zM465 350h5v5h-5zM500 350h5v5h-5zM525 350h5v5h-5zM535 350h5v5h-5zM550 350h5v5h-5zM560 350h10v5h-10zM575 350h5v5h-5zM585 350h5v5h-5zM605 350h5v5h-5zM615 350h5v5h-5zM640 350h5v5h-5zM650 350h10v5h-10zM675 350h5v5h-5zM715 350h5v5h-5zM725 350h5v5h-5zM735 350h5v5h-5zM745 350h5v5h-5zM770 350h5v5h-5zM785 350h5v5h-5zM795 350h5v5h-5zM805 350h5v5h-5zM820 350h5v5h-5zM5 355h5v5h-5zM15 355h15v5h-15zM45 355h10v5h-10zM65 355h15v5h-15zM95 355h10v5h-10zM110 355h10v5h-10zM130 355h10v5h-10zM145 355h5v5h-5zM180 355h5v5h-5zM190 355h5v5h-5zM215 355h10v5h-10zM230 355h5v5h-5zM250 355h10v5h-10zM275 355h5v5h-5zM295 355h5v5h-5zM310 355h10v5h-10zM335 355h10v5h-10zM350 355h10v5h-10zM370 355h5v5h-5zM385 355h10v5h-10zM410 355h10v5h-10zM435 355h5v5h-5zM485 355h5v5h-5zM500 355h10v5h-10zM525 355h10v5h-10zM540 355h5v5h-5zM560 355h5v5h-5zM575 355h5v5h-5zM625 355h10v5h-10zM640 355h5v5h-5zM650 355h5v5h-5zM660 355h10v5h-10zM675 355h5v5h-5zM690 355h15v5h-15zM740 355h5v5h-5zM750 355h15v5h-15zM785 355h5v5h-5zM795 355h5v5h-5zM830 355h5v5h-5zM0 360h5v5h-5zM20 360h5v5h-5zM30 360h10v5h-10zM45 360h5v5h-5zM55 360h5v5h-5zM85 360h5v5h-5zM110 360h5v5h-5zM120 360h10v5h-10zM140 360h5v5h-5zM150 360h5v5h-5zM165 360h5v5h-5zM195 360h5v5h-5zM225 360h15v5h-15zM245 360h10v5h-10zM275 360h5v5h-5zM300 360h5v5h-5zM310 360h5v5h-5zM340 360h5v5h-5zM385 360h5v5h-5zM400 360h5v5h-5zM410 360h5v5h-5zM430 360h5v5h-5zM445 360h10v5h-10zM470 360h5v5h-5zM485 360h5v5h-5zM560 360h5v5h-5zM585 360h5v5h-5zM600 360h5v5h-5zM630 360h10v5h-10zM665 360h5v5h-5zM675 360h5v5h-5zM710 360h10v5h-10zM725 360h10v5h-10zM745 360h10v5h-10zM760 360h10v5h-10zM780 360h5v5h-5zM800 360h5v5h-5zM830 360h5v5h-5zM5 365h5v5h-5zM15 365h5v5h-5zM25 365h5v5h-5zM50 365h15v5h-15zM70 365h10v5h-10zM85 365h5v5h-5zM100 365h5v5h-5zM120 365h5v5h-5zM130 365h15v5h-15zM150 365h10v5h-10zM180 365h10v5h-10zM195 365h15v5h-15zM235 365h15v5h-15zM260 365h5v5h-5zM275 365h5v5h-5zM295 365h10v5h-10zM315 365h5v5h-5zM325 365h10v5h-10zM340 365h5v5h-5zM355 365h10v5h-10zM375 365h5v5h-5zM395 365h10v5h-10zM410 365h5v5h-5zM440 365h5v5h-5zM485 365h15v5h-15zM525 365h10v5h-10zM540 365h5v5h-5zM600 365h5v5h-5zM615 365h10v5h-10zM635 365h5v5h-5zM650 365h5v5h-5zM665 365h10v5h-10zM705 365h5v5h-5zM725 365h5v5h-5zM735 365h5v5h-5zM745 365h5v5h-5zM760 365h5v5h-5zM775 365h5v5h-5zM785 365h5v5h-5zM815 365h5v5h-5zM830 365h5v5h-5zM5 370h5v5h-5zM15 370h5v5h-5zM25 370h5v5h-5zM35 370h5v5h-5zM60 370h5v5h-5zM75 370h5v5h-5zM90 370h5v5h-5zM115 370h5v5h-5zM125 370h5v5h-5zM135 370h5v5h-5zM145 370h5v5h-5zM155 370h5v5h-5zM165 370h5v5h-5zM175 370h5v5h-5zM200 370h5v5h-5zM220 370h5v5h-5zM240 370h5v5h-5zM290 370h10v5h-10zM305 370h5v5h-5zM325 370h5v5h-5zM335 370h5v5h-5zM350 370h5v5h-5zM370 370h5v5h-5zM380 370h5v5h-5zM395 370h5v5h-5zM415 370h10v5h-10zM450 370h5v5h-5zM460 370h5v5h-5zM475 370h5v5h-5zM490 370h5v5h-5zM525 370h5v5h-5zM535 370h5v5h-5zM545 370h5v5h-5zM560 370h5v5h-5zM570 370h10v5h-10zM590 370h5v5h-5zM600 370h10v5h-10zM695 370h5v5h-5zM705 370h5v5h-5zM730 370h5v5h-5zM750 370h5v5h-5zM775 370h10v5h-10zM810 370h10v5h-10zM5 375h5v5h-5zM20 375h10v5h-10zM60 375h10v5h-10zM75 375h5v5h-5zM90 375h15v5h-15zM115 375h10v5h-10zM130 375h5v5h-5zM155 375h5v5h-5zM170 375h5v5h-5zM180 375h5v5h-5zM205 375h5v5h-5zM220 375h5v5h-5zM230 375h5v5h-5zM250 375h10v5h-10zM270 375h5v5h-5zM280 375h10v5h-10zM295 375h10v5h-10zM315 375h5v5h-5zM325 375h15v5h-15zM355 375h15v5h-15zM375 375h10v5h-10zM390 375h5v5h-5zM400 375h5v5h-5zM410 375h10v5h-10zM425 375h5v5h-5zM450 375h5v5h-5zM480 375h5v5h-5zM505 375h5v5h-5zM525 375h5v5h-5zM540 375h15v5h-15zM560 375h5v5h-5zM585 375h5v5h-5zM605 375h5v5h-5zM630 375h5v5h-5zM640 375h15v5h-15zM675 375h10v5h-10zM715 375h5v5h-5zM725 375h15v5h-15zM745 375h5v5h-5zM755 375h15v5h-15zM815 375h10v5h-10zM830 375h5v5h-5zM0 380h5v5h-5zM35 380h5v5h-5zM55 380h5v5h-5zM90 380h5v5h-5zM100 380h10v5h-10zM115 380h5v5h-5zM135 380h5v5h-5zM145 380h5v5h-5zM180 380h10v5h-10zM220 380h5v5h-5zM250 380h5v5h-5zM270 380h5v5h-5zM285 380h10v5h-10zM305 380h5v5h-5zM335 380h5v5h-5zM365 380h5v5h-5zM395 380h5v5h-5zM415 380h5v5h-5zM430 380h5v5h-5zM490 380h10v5h-10zM505 380h10v5h-10zM530 380h10v5h-10zM545 380h5v5h-5zM555 380h5v5h-5zM565 380h5v5h-5zM575 380h5v5h-5zM590 380h15v5h-15zM615 380h5v5h-5zM625 380h5v5h-5zM645 380h5v5h-5zM655 380h5v5h-5zM670 380h10v5h-10zM685 380h5v5h-5zM730 380h5v5h-5zM775 380h15v5h-15zM820 380h5v5h-5zM10 385h15v5h-15zM35 385h5v5h-5zM45 385h5v5h-5zM55 385h5v5h-5zM65 385h10v5h-10zM110 385h5v5h-5zM130 385h10v5h-10zM145 385h5v5h-5zM160 385h5v5h-5zM175 385h5v5h-5zM200 385h15v5h-15zM225 385h5v5h-5zM245 385h5v5h-5zM260 385h10v5h-10zM275 385h15v5h-15zM320 385h15v5h-15zM340 385h15v5h-15zM365 385h5v5h-5zM380 385h5v5h-5zM395 385h5v5h-5zM410 385h5v5h-5zM430 385h10v5h-10zM450 385h10v5h-10zM465 385h10v5h-10zM485 385h5v5h-5zM520 385h15v5h-15zM555 385h10v5h-10zM570 385h10v5h-10zM595 385h5v5h-5zM610 385h5v5h-5zM630 385h5v5h-5zM665 385h10v5h-10zM690 385h5v5h-5zM720 385h5v5h-5zM750 385h10v5h-10zM770 385h10v5h-10zM795 385h5v5h-5zM815 385h5v5h-5zM830 385h5v5h-5zM0 390h10v5h-10zM15 390h5v5h-5zM40 390h15v5h-15zM65 390h5v5h-5zM80 390h15v5h-15zM105 390h10v5h-10zM120 390h5v5h-5zM130 390h5v5h-5zM140 390h5v5h-5zM155 390h5v5h-5zM180 390h5v5h-5zM195 390h5v5h-5zM215 390h15v5h-15zM245 390h5v5h-5zM255 390h5v5h-5zM265 390h5v5h-5zM315 390h10v5h-10zM340 390h5v5h-5zM370 390h5v5h-5zM425 390h5v5h-5zM445 390h5v5h-5zM470 390h15v5h-15zM490 390h5v5h-5zM500 390h15v5h-15zM530 390h10v5h-10zM560 390h15v5h-15zM580 390h5v5h-5zM595 390h5v5h-5zM630 390h5v5h-5zM645 390h5v5h-5zM655 390h10v5h-10zM670 390h5v5h-5zM690 390h10v5h-10zM705 390h10v5h-10zM750 390h5v5h-5zM775 390h5v5h-5zM790 390h15v5h-15zM810 390h5v5h-5zM0 395h5v5h-5zM15 395h5v5h-5zM30 395h5v5h-5zM45 395h5v5h-5zM60 395h15v5h-15zM85 395h5v5h-5zM100 395h10v5h-10zM115 395h5v5h-5zM125 395h10v5h-10zM140 395h10v5h-10zM155 395h10v5h-10zM180 395h5v5h-5zM200 395h15v5h-15zM220 395h5v5h-5zM235 395h10v5h-10zM260 395h5v5h-5zM270 395h5v5h-5zM280 395h5v5h-5zM325 395h5v5h-5zM335 395h5v5h-5zM345 395h10v5h-10zM365 395h5v5h-5zM375 395h5v5h-5zM390 395h5v5h-5zM410 395h5v5h-5zM430 395h15v5h-15zM455 395h5v5h-5zM465 395h5v5h-5zM475 395h5v5h-5zM490 395h5v5h-5zM505 395h5v5h-5zM520 395h5v5h-5zM580 395h10v5h-10zM600 395h5v5h-5zM625 395h5v5h-5zM675 395h5v5h-5zM700 395h5v5h-5zM730 395h10v5h-10zM755 395h5v5h-5zM765 395h5v5h-5zM790 395h5v5h-5zM800 395h5v5h-5zM810 395h5v5h-5zM820 395h10v5h-10zM0 400h5v5h-5zM40 400h5v5h-5zM50 400h15v5h-15zM75 400h5v5h-5zM90 400h10v5h-10zM110 400h5v5h-5zM120 400h5v5h-5zM160 400h5v5h-5zM175 400h5v5h-5zM185 400h5v5h-5zM200 400h5v5h-5zM210 400h10v5h-10zM245 400h10v5h-10zM260 400h5v5h-5zM275 400h5v5h-5zM305 400h5v5h-5zM315 400h5v5h-5zM335 400h5v5h-5zM345 400h5v5h-5zM360 400h10v5h-10zM380 400h10v5h-10zM400 400h5v5h-5zM435 400h5v5h-5zM445 400h15v5h-15zM475 400h5v5h-5zM485 400h5v5h-5zM495 400h5v5h-5zM505 400h5v5h-5zM515 400h5v5h-5zM525 400h15v5h-15zM555 400h10v5h-10zM570 400h10v5h-10zM590 400h10v5h-10zM620 400h15v5h-15zM645 400h15v5h-15zM675 400h15v5h-15zM730 400h5v5h-5zM740 400h5v5h-5zM755 400h10v5h-10zM805 400h5v5h-5zM815 400h10v5h-10zM5 405h5v5h-5zM25 405h5v5h-5zM35 405h5v5h-5zM45 405h5v5h-5zM70 405h5v5h-5zM80 405h10v5h-10zM95 405h5v5h-5zM105 405h5v5h-5zM120 405h10v5h-10zM135 405h10v5h-10zM170 405h10v5h-10zM215 405h5v5h-5zM230 405h15v5h-15zM270 405h10v5h-10zM290 405h5v5h-5zM305 405h15v5h-15zM340 405h10v5h-10zM400 405h5v5h-5zM435 405h10v5h-10zM455 405h5v5h-5zM465 405h10v5h-10zM520 405h10v5h-10zM535 405h5v5h-5zM550 405h5v5h-5zM570 405h5v5h-5zM580 405h5v5h-5zM590 405h5v5h-5zM600 405h5v5h-5zM625 405h5v5h-5zM645 405h5v5h-5zM660 405h10v5h-10zM675 405h5v5h-5zM710 405h5v5h-5zM725 405h10v5h-10zM755 405h5v5h-5zM775 405h5v5h-5zM800 405h5v5h-5zM815 405h5v5h-5zM825 405h5v5h-5z"/><path fill="#d6d600" d="M0 0h5v5h-5zM15 0h5v5h-5zM55 0h5v5h-5zM120 0h5v5h-5zM125 0h5v5h-5zM165 0h5v5h-5zM170 0h5v5h-5zM175 0h5v5h-5zM205 0h5v5h-5zM255 0h5v5h-5zM390 0h5v5h-5zM400 0h5v5h-5zM480 0h5v5h-5zM500 0h5v5h-5zM505 0h5v5h-5zM525 0h5v5h-5zM530 0h5v5h-5zM670 0h5v5h-5zM685 0h5v5h-5zM740 0h5v5h-5zM785 0h5v5h-5zM810 0h5v5h-5zM820 0h5v5h-5zM5 5h5v5h-5zM75 5h5v5h-5zM340 5h5v5h-5zM430 5h5v5h-5zM445 5h5v5h-5zM455 5h5v5h-5zM620 5h5v5h-5zM640 5h5v5h-5zM745 5h5v5h-5zM760 5h5v5h-5zM775 5h5v5h-5zM55 10h5v5h-5zM90 10h5v5h-5zM215 10h5v5h-5zM230 10h5v5h-5zM315 10h5v5h-5zM350 10h5v5h-5zM430 10h5v5h-5zM495 10h5v5h-5zM660 10h5v5h-5zM670 10h5v5h-5zM735 10h5v5h-5zM745 10h5v5h-5zM755 10h5v5h-5zM825 10h5v5h-5zM15 15h5v5h-5zM85 15h5v5h-5zM175 15h5v5h-5zM195 15h5v5h-5zM250 15h5v5h-5zM295 15h5v5h-5zM305 15h5v5h-5zM315 15h5v5h-5zM325 15h5v5h-5zM335 15h5v5h-5zM505 15h5v5h-5zM520 15h5v5h-5zM615 15h5v5h-5zM620 15h5v5h-5zM650 15h5v5h-5zM660 15h5v5h-5zM750 15h5v5h-5zM760 15h5v5h-5zM0 20h5v5h-5zM5 20h5v5h-5zM25 20h5v5h-5zM115 20h5v5h-5zM160 20h5v5h-5zM205 20h5v5h-5zM215 20h5v5h-5zM335 20h5v5h-5zM355 20h5v5h-5zM420 20h5v5h-5zM495 20h5v5h-5zM500 20h5v5h-5zM530 20h5v5h-5zM535 20h5v5h-5zM560 20h5v5h-5zM595 20h5v5h-5zM600 20h5v5h-5zM645 20h5v5h-5zM720 20h5v5h-5zM815 20h5v5h-5zM15 25h5v5h-5zM40 25h5v5h-5zM105 25h5v5h-5zM120 25h5v5h-5zM220 25h5v5h-5zM225 25h5v5h-5zM270 25h5v5h-5zM290 25h5v5h-5zM310 25h5v5h-5zM325 25h5v5h-5zM415 25h5v5h-5zM455 25h5v5h-5zM560 25h5v5h-5zM585 25h5v5h-5zM625 25h5v5h-5zM740 25h5v5h-5zM115 30h5v5h-5zM210 30h5v5h-5zM310 30h5v5h-5zM320 30h5v5h-5zM420 30h5v5h-5zM485 30h5v5h-5zM600 30h5v5h-5zM730 30h5v5h-5zM60 35h5v5h-5zM75 35h5v5h-5zM85 35h5v5h-5zM145 35h5v5h-5zM210 35h5v5h-5zM215 35h5v5h-5zM235 35h5v5h-5zM245 35h5v5h-5zM315 35h5v5h-5zM430 35h5v5h-5zM580 35h5v5h-5zM715 35h5v5h-5zM780 35h5v5h-5zM290 40h5v5h-5zM365 40h5v5h-5zM485 40h5v5h-5zM490 40h5v5h-5zM500 40h5v5h-5zM505 40h5v5h-5zM550 40h5v5h-5zM635 40h5v5h-5zM140 45h5v5h-5zM165 45h5v5h-5zM170 45h5v5h-5zM175 45h5v5h-5zM195 45h5v5h-5zM215 45h5v5h-5zM225 45h5v5h-5zM310 45h5v5h-5zM480 45h5v5h-5zM530 45h5v5h-5zM550 45h5v5h-5zM580 45h5v5h-5zM605 45h5v5h-5zM620 45h5v5h-5zM755 45h5v5h-5zM775 45h5v5h-5zM125 50h5v5h-5zM145 50h5v5h-5zM230 50h5v5h-5zM240 50h5v5h-5zM260 50h5v5h-5zM380 50h5v5h-5zM405 50h5v5h-5zM435 50h5v5h-5zM450 50h5v5h-5zM545 50h5v5h-5zM575 50h5v5h-5zM615 50h5v5h-5zM640 50h5v5h-5zM670 50h5v5h-5zM700 50h5v5h-5zM765 50h5v5h-5zM780 50h5v5h-5zM800 50h5v5h-5zM805 50h5v5h-5zM40 55h5v5h-5zM75 55h5v5h-5zM110 55h5v5h-5zM160 55h5v5h-5zM195 55h5v5h-5zM320 55h5v5h-5zM375 55h5v5h-5zM460 55h5v5h-5zM485 55h5v5h-5zM500 55h5v5h-5zM550 55h5v5h-5zM810 55h5v5h-5zM15 60h5v5h-5zM35 60h5v5h-5zM90 60h5v5h-5zM110 60h5v5h-5zM190 60h5v5h-5zM210 60h5v5h-5zM260 60h5v5h-5zM405 60h5v5h-5zM530 60h5v5h-5zM545 60h5v5h-5zM555 60h5v5h-5zM650 60h5v5h-5zM680 60h5v5h-5zM830 60h5v5h-5zM55 65h5v5h-5zM80 65h5v5h-5zM125 65h5v5h-5zM205 65h5v5h-5zM355 65h5v5h-5zM410 65h5v5h-5zM430 65h5v5h-5zM445 65h5v5h-5zM495 65h5v5h-5zM645 65h5v5h-5zM670 65h5v5h-5zM680 65h5v5h-5zM705 65h5v5h-5zM725 65h5v5h-5zM50 70h5v5h-5zM85 70h5v5h-5zM160 70h5v5h-5zM180 70h5v5h-5zM370 70h5v5h-5zM395 70h5v5h-5zM505 70h5v5h-5zM540 70h5v5h-5zM550 70h5v5h-5zM615 70h5v5h-5zM625 70h5v5h-5zM690 70h5v5h-5zM775 70h5v5h-5zM0 75h5v5h-5zM10 75h5v5h-5zM25 75h5v5h-5zM150 75h5v5h-5zM640 75h5v5h-5zM695 75h5v5h-5zM700 75h5v5h-5zM770 75h5v5h-5zM800 75h5v5h-5zM25 80h5v5h-5zM45 80h5v5h-5zM115 80h5v5h-5zM125 80h5v5h-5zM130 80h5v5h-5zM165 80h5v5h-5zM200 80h5v5h-5zM255 80h5v5h-5zM275 80h5v5h-5zM345 80h5v5h-5zM350 80h5v5h-5zM355 80h5v5h-5zM420 80h5v5h-5zM475 80h5v5h-5zM515 80h5v5h-5zM615 80h5v5h-5zM725 80h5v5h-5zM775 80h5v5h-5zM55 85h5v5h-5zM85 85h5v5h-5zM155 85h5v5h-5zM195 85h5v5h-5zM235 85h5v5h-5zM250 85h5v5h-5zM365 85h5v5h-5zM425 85h5v5h-5zM490 85h5v5h-5zM530 85h5v5h-5zM620 85h5v5h-5zM660 85h5v5h-5zM740 85h5v5h-5zM810 85h5v5h-5zM30 90h5v5h-5zM40 90h5v5h-5zM130 90h5v5h-5zM175 90h5v5h-5zM205 90h5v5h-5zM210 90h5v5h-5zM245 90h5v5h-5zM270 90h5v5h-5zM280 90h5v5h-5zM425 90h5v5h-5zM475 90h5v5h-5zM485 90h5v5h-5zM675 90h5v5h-5zM795 90h5v5h-5zM830 90h5v5h-5zM0 95h5v5h-5zM50 95h5v5h-5zM55 95h5v5h-5zM140 95h5v5h-5zM325 95h5v5h-5zM345 95h5v5h-5zM370 95h5v5h-5zM400 95h5v5h-5zM455 95h5v5h-5zM520 95h5v5h-5zM565 95h5v5h-5zM575 95h5v5h-5zM590 95h5v5h-5zM645 95h5v5h-5zM715 95h5v5h-5zM125 100h5v5h-5zM135 100h5v5h-5zM195 100h5v5h-5zM215 100h5v5h-5zM270 100h5v5h-5zM330 100h5v5h-5zM350 100h5v5h-5zM465 100h5v5h-5zM580 100h5v5h-5zM615 100h5v5h-5zM640 100h5v5h-5zM675 100h5v5h-5zM710 100h5v5h-5zM735 100h5v5h-5zM785 100h5v5h-5zM795 100h5v5h-5zM830 100h5v5h-5zM5 105h5v5h-5zM65 105h5v5h-5zM105 105h5v5h-5zM220 105h5v5h-5zM230 105h5v5h-5zM340 105h5v5h-5zM345 105h5v5h-5zM380 105h5v5h-5zM405 105h5v5h-5zM540 105h5v5h-5zM570 105h5v5h-5zM610 105h5v5h-5zM670 105h5v5h-5zM675 105h5v5h-5zM825 105h5v5h-5zM65 110h5v5h-5zM85 110h5v5h-5zM130 110h5v5h-5zM155 110h5v5h-5zM210 110h5v5h-5zM225 110h5v5h-5zM330 110h5v5h-5zM430 110h5v5h-5zM525 110h5v5h-5zM570 110h5v5h-5zM590 110h5v5h-5zM5 115h5v5h-5zM150 115h5v5h-5zM170 115h5v5h-5zM225 115h5v5h-5zM280 115h5v5h-5zM300 115h5v5h-5zM355 115h5v5h-5zM390 115h5v5h-5zM425 115h5v5h-5zM550 115h5v5h-5zM630 115h5v5h-5zM100 120h5v5h-5zM110 120h5v5h-5zM155 120h5v5h-5zM165 120h5v5h-5zM195 120h5v5h-5zM200 120h5v5h-5zM205 120h5v5h-5zM245 120h5v5h-5zM275 120h5v5h-5zM300 120h5v5h-5zM340 120h5v5h-5zM455 120h5v5h-5zM545 120h5v5h-5zM565 120h5v5h-5zM575 120h5v5h-5zM605 120h5v5h-5zM745 120h5v5h-5zM830 120h5v5h-5zM65 125h5v5h-5zM140 125h5v5h-5zM160 125h5v5h-5zM245 125h5v5h-5zM260 125h5v5h-5zM265 125h5v5h-5zM350 125h5v5h-5zM390 125h5v5h-5zM475 125h5v5h-5zM520 125h5v5h-5zM540 125h5v5h-5zM560 125h5v5h-5zM575 125h5v5h-5zM720 125h5v5h-5zM765 125h5v5h-5zM815 125h5v5h-5zM825 125h5v5h-5zM5 130h5v5h-5zM10 130h5v5h-5zM25 130h5v5h-5zM120 130h5v5h-5zM170 130h5v5h-5zM175 130h5v5h-5zM220 130h5v5h-5zM235 130h5v5h-5zM260 130h5v5h-5zM315 130h5v5h-5zM355 130h5v5h-5zM380 130h5v5h-5zM495 130h5v5h-5zM550 130h5v5h-5zM595 130h5v5h-5zM640 130h5v5h-5zM665 130h5v5h-5zM735 130h5v5h-5zM810 130h5v5h-5zM5 135h5v5h-5zM30 135h5v5h-5zM50 135h5v5h-5zM60 135h5v5h-5zM75 135h5v5h-5zM140 135h5v5h-5zM170 135h5v5h-5zM225 135h5v5h-5zM285 135h5v5h-5zM440 135h5v5h-5zM515 135h5v5h-5zM530 135h5v5h-5zM575 135h5v5h-5zM630 135h5v5h-5zM670 135h5v5h-5zM10 140h5v5h-5zM125 140h5v5h-5zM135 140h5v5h-5zM140 140h5v5h-5zM185 140h5v5h-5zM195 140h5v5h-5zM380 140h5v5h-5zM455 140h5v5h-5zM535 140h5v5h-5zM635 140h5v5h-5zM690 140h5v5h-5zM700 140h5v5h-5zM790 140h5v5h-5zM805 140h5v5h-5zM55 145h5v5h-5zM75 145h5v5h-5zM130 145h5v5h-5zM195 145h5v5h-5zM235 145h5v5h-5zM280 145h5v5h-5zM495 145h5v5h-5zM535 145h5v5h-5zM550 145h5v5h-5zM565 145h5v5h-5zM705 145h5v5h-5zM5 150h5v5h-5zM30 150h5v5h-5zM70 150h5v5h-5zM210 150h5v5h-5zM215 150h5v5h-5zM220 150h5v5h-5zM290 150h5v5h-5zM455 150h5v5h-5zM530 150h5v5h-5zM540 150h5v5h-5zM580 150h5v5h-5zM585 150h5v5h-5zM765 150h5v5h-5zM785 150h5v5h-5zM30 155h5v5h-5zM85 155h5v5h-5zM180 155h5v5h-5zM220 155h5v5h-5zM330 155h5v5h-5zM340 155h5v5h-5zM430 155h5v5h-5zM450 155h5v5h-5zM490 155h5v5h-5zM530 155h5v5h-5zM560 155h5v5h-5zM565 155h5v5h-5zM615 155h5v5h-5zM675 155h5v5h-5zM705 155h5v5h-5zM735 155h5v5h-5zM770 155h5v5h-5zM790 155h5v5h-5zM30 160h5v5h-5zM40 160h5v5h-5zM50 160h5v5h-5zM150 160h5v5h-5zM190 160h5v5h-5zM275 160h5v5h-5zM340 160h5v5h-5zM355 160h5v5h-5zM455 160h5v5h-5zM460 160h5v5h-5zM590 160h5v5h-5zM625 160h5v5h-5zM670 160h5v5h-5zM735 160h5v5h-5zM795 160h5v5h-5zM60 165h5v5h-5zM130 165h5v5h-5zM135 165h5v5h-5zM235 165h5v5h-5zM280 165h5v5h-5zM540 165h5v5h-5zM570 165h5v5h-5zM605 165h5v5h-5zM610 165h5v5h-5zM40 170h5v5h-5zM55 170h5v5h-5zM90 170h5v5h-5zM165 170h5v5h-5zM245 170h5v5h-5zM300 170h5v5h-5zM325 170h5v5h-5zM340 170h5v5h-5zM350 170h5v5h-5zM380 170h5v5h-5zM410 170h5v5h-5zM415 170h5v5h-5zM460 170h5v5h-5zM625 170h5v5h-5zM10 175h5v5h-5zM25 175h5v5h-5zM80 175h5v5h-5zM105 175h5v5h-5zM145 175h5v5h-5zM285 175h5v5h-5zM340 175h5v5h-5zM355 175h5v5h-5zM410 175h5v5h-5zM445 175h5v5h-5zM555 175h5v5h-5zM660 175h5v5h-5zM705 175h5v5h-5zM750 175h5v5h-5zM765 175h5v5h-5zM785 175h5v5h-5zM95 180h5v5h-5zM165 180h5v5h-5zM180 180h5v5h-5zM215 180h5v5h-5zM305 180h5v5h-5zM320 180h5v5h-5zM340 180h5v5h-5zM425 180h5v5h-5zM440 180h5v5h-5zM470 180h5v5h-5zM485 180h5v5h-5zM490 180h5v5h-5zM520 180h5v5h-5zM540 180h5v5h-5zM565 180h5v5h-5zM600 180h5v5h-5zM665 180h5v5h-5zM120 185h5v5h-5zM260 185h5v5h-5zM290 185h5v5h-5zM410 185h5v5h-5zM440 185h5v5h-5zM500 185h5v5h-5zM565 185h5v5h-5zM600 185h5v5h-5zM775 185h5v5h-5zM795 185h5v5h-5zM75 190h5v5h-5zM90 190h5v5h-5zM100 190h5v5h-5zM110 190h5v5h-5zM150 190h5v5h-5zM195 190h5v5h-5zM210 190h5v5h-5zM235 190h5v5h-5zM315 190h5v5h-5zM370 190h5v5h-5zM400 190h5v5h-5zM500 190h5v5h-5zM555 190h5v5h-5zM575 190h5v5h-5zM690 190h5v5h-5zM720 190h5v5h-5zM755 190h5v5h-5zM770 190h5v5h-5zM830 190h5v5h-5zM10 195h5v5h-5zM45 195h5v5h-5zM230 195h5v5h-5zM270 195h5v5h-5zM285 195h5v5h-5zM345 195h5v5h-5zM505 195h5v5h-5zM540 195h5v5h-5zM560 195h5v5h-5zM565 195h5v5h-5zM605 195h5v5h-5zM650 195h5v5h-5zM800 195h5v5h-5zM820 195h5v5h-5zM55 200h5v5h-5zM110 200h5v5h-5zM145 200h5v5h-5zM155 200h5v5h-5zM200 200h5v5h-5zM210 200h5v5h-5zM275 200h5v5h-5zM355 200h5v5h-5zM375 200h5v5h-5zM410 200h5v5h-5zM500 200h5v5h-5zM510 200h5v5h-5zM665 200h5v5h-5zM690 200h5v5h-5zM750 200h5v5h-5zM55 205h5v5h-5zM215 205h5v5h-5zM290 205h5v5h-5zM375 205h5v5h-5zM450 205h5v5h-5zM485 205h5v5h-5zM570 205h5v5h-5zM625 205h5v5h-5zM825 205h5v5h-5zM10 210h5v5h-5zM25 210h5v5h-5zM100 210h5v5h-5zM120 210h5v5h-5zM135 210h5v5h-5zM200 210h5v5h-5zM370 210h5v5h-5zM420 210h5v5h-5zM435 210h5v5h-5zM505 210h5v5h-5zM660 210h5v5h-5zM705 210h5v5h-5zM725 210h5v5h-5zM0 215h5v5h-5zM105 215h5v5h-5zM205 215h5v5h-5zM265 215h5v5h-5zM305 215h5v5h-5zM345 215h5v5h-5zM350 215h5v5h-5zM375 215h5v5h-5zM410 215h5v5h-5zM425 215h5v5h-5zM430 215h5v5h-5zM505 215h5v5h-5zM535 215h5v5h-5zM570 215h5v5h-5zM575 215h5v5h-5zM675 215h5v5h-5zM680 215h5v5h-5zM25 220h5v5h-5zM70 220h5v5h-5zM140 220h5v5h-5zM175 220h5v5h-5zM240 220h5v5h-5zM260 220h5v5h-5zM295 220h5v5h-5zM375 220h5v5h-5zM400 220h5v5h-5zM405 220h5v5h-5zM585 220h5v5h-5zM640 220h5v5h-5zM720 220h5v5h-5zM770 220h5v5h-5zM785 220h5v5h-5zM800 220h5v5h-5zM810 220h5v5h-5zM265 225h5v5h-5zM335 225h5v5h-5zM410 225h5v5h-5zM550 225h5v5h-5zM595 225h5v5h-5zM645 225h5v5h-5zM740 225h5v5h-5zM825 225h5v5h-5zM45 230h5v5h-5zM60 230h5v5h-5zM70 230h5v5h-5zM125 230h5v5h-5zM135 230h5v5h-5zM180 230h5v5h-5zM210 230h5v5h-5zM320 230h5v5h-5zM340 230h5v5h-5zM345 230h5v5h-5zM385 230h5v5h-5zM395 230h5v5h-5zM430 230h5v5h-5zM640 230h5v5h-5zM730 230h5v5h-5zM770 230h5v5h-5zM780 230h5v5h-5zM50 235h5v5h-5zM260 235h5v5h-5zM345 235h5v5h-5zM560 235h5v5h-5zM615 235h5v5h-5zM630 235h5v5h-5zM45 240h5v5h-5zM50 240h5v5h-5zM60 240h5v5h-5zM180 240h5v5h-5zM250 240h5v5h-5zM400 240h5v5h-5zM425 240h5v5h-5zM470 240h5v5h-5zM540 240h5v5h-5zM550 240h5v5h-5zM555 240h5v5h-5zM570 240h5v5h-5zM590 240h5v5h-5zM615 240h5v5h-5zM755 240h5v5h-5zM795 240h5v5h-5zM55 245h5v5h-5zM100 245h5v5h-5zM130 245h5v5h-5zM290 245h5v5h-5zM380 245h5v5h-5zM430 245h5v5h-5zM480 245h5v5h-5zM495 245h5v5h-5zM500 245h5v5h-5zM520 245h5v5h-5zM565 245h5v5h-5zM585 245h5v5h-5zM605 245h5v5h-5zM805 245h5v5h-5zM25 250h5v5h-5zM70 250h5v5h-5zM105 250h5v5h-5zM205 250h5v5h-5zM265 250h5v5h-5zM345 250h5v5h-5zM365 250h5v5h-5zM430 250h5v5h-5zM545 250h5v5h-5zM575 250h5v5h-5zM600 250h5v5h-5zM730 250h5v5h-5zM25 255h5v5h-5zM145 255h5v5h-5zM260 255h5v5h-5zM300 255h5v5h-5zM395 255h5v5h-5zM430 255h5v5h-5zM470 255h5v5h-5zM590 255h5v5h-5zM825 255h5v5h-5zM130 260h5v5h-5zM140 260h5v5h-5zM190 260h5v5h-5zM210 260h5v5h-5zM245 260h5v5h-5zM305 260h5v5h-5zM315 260h5v5h-5zM335 260h5v5h-5zM425 260h5v5h-5zM445 260h5v5h-5zM520 260h5v5h-5zM535 260h5v5h-5zM545 260h5v5h-5zM610 260h5v5h-5zM740 260h5v5h-5zM750 260h5v5h-5zM5 265h5v5h-5zM45 265h5v5h-5zM70 265h5v5h-5zM90 265h5v5h-5zM145 265h5v5h-5zM185 265h5v5h-5zM255 265h5v5h-5zM260 265h5v5h-5zM275 265h5v5h-5zM505 265h5v5h-5zM570 265h5v5h-5zM585 265h5v5h-5zM625 265h5v5h-5zM695 265h5v5h-5zM720 265h5v5h-5zM725 265h5v5h-5zM25 270h5v5h-5zM35 270h5v5h-5zM75 270h5v5h-5zM265 270h5v5h-5zM355 270h5v5h-5zM470 270h5v5h-5zM560 270h5v5h-5zM580 270h5v5h-5zM595 270h5v5h-5zM720 270h5v5h-5zM755 270h5v5h-5zM790 270h5v5h-5zM810 270h5v5h-5zM820 270h5v5h-5zM10 275h5v5h-5zM20 275h5v5h-5zM150 275h5v5h-5zM295 275h5v5h-5zM300 275h5v5h-5zM310 275h5v5h-5zM390 275h5v5h-5zM495 275h5v5h-5zM560 275h5v5h-5zM610 275h5v5h-5zM705 275h5v5h-5zM750 275h5v5h-5zM805 275h5v5h-5zM40 280h5v5h-5zM120 280h5v5h-5zM335 280h5v5h-5zM360 280h5v5h-5zM465 280h5v5h-5zM545 280h5v5h-5zM675 280h5v5h-5zM690 280h5v5h-5zM775 280h5v5h-5zM795 280h5v5h-5zM830 280h5v5h-5zM45 285h5v5h-5zM60 285h5v5h-5zM145 285h5v5h-5zM195 285h5v5h-5zM270 285h5v5h-5zM275 285h5v5h-5zM380 285h5v5h-5zM405 285h5v5h-5zM480 285h5v5h-5zM510 285h5v5h-5zM560 285h5v5h-5zM710 285h5v5h-5zM730 285h5v5h-5zM795 285h5v5h-5zM805 285h5v5h-5zM15 290h5v5h-5zM25 290h5v5h-5zM120 290h5v5h-5zM150 290h5v5h-5zM225 290h5v5h-5zM245 290h5v5h-5zM390 290h5v5h-5zM430 290h5v5h-5zM495 290h5v5h-5zM555 290h5v5h-5zM690 290h5v5h-5zM725 290h5v5h-5zM745 290h5v5h-5zM50 295h5v5h-5zM100 295h5v5h-5zM210 295h5v5h-5zM215 295h5v5h-5zM225 295h5v5h-5zM310 295h5v5h-5zM320 295h5v5h-5zM370 295h5v5h-5zM410 295h5v5h-5zM425 295h5v5h-5zM510 295h5v5h-5zM525 295h5v5h-5zM650 295h5v5h-5zM660 295h5v5h-5zM670 295h5v5h-5zM730 295h5v5h-5zM815 295h5v5h-5zM80 300h5v5h-5zM190 300h5v5h-5zM205 300h5v5h-5zM230 300h5v5h-5zM265 300h5v5h-5zM270 300h5v5h-5zM315 300h5v5h-5zM350 300h5v5h-5zM380 300h5v5h-5zM395 300h5v5h-5zM440 300h5v5h-5zM470 300h5v5h-5zM565 300h5v5h-5zM580 300h5v5h-5zM665 300h5v5h-5zM705 300h5v5h-5zM725 300h5v5h-5zM740 300h5v5h-5zM770 300h5v5h-5zM25 305h5v5h-5zM65 305h5v5h-5zM285 305h5v5h-5zM340 305h5v5h-5zM405 305h5v5h-5zM415 305h5v5h-5zM435 305h5v5h-5zM485 305h5v5h-5zM510 305h5v5h-5zM530 305h5v5h-5zM610 305h5v5h-5zM615 305h5v5h-5zM620 305h5v5h-5zM640 305h5v5h-5zM735 305h5v5h-5zM25 310h5v5h-5zM30 310h5v5h-5zM60 310h5v5h-5zM290 310h5v5h-5zM295 310h5v5h-5zM300 310h5v5h-5zM335 310h5v5h-5zM420 310h5v5h-5zM440 310h5v5h-5zM555 310h5v5h-5zM675 310h5v5h-5zM685 310h5v5h-5zM690 310h5v5h-5zM745 310h5v5h-5zM755 310h5v5h-5zM800 310h5v5h-5zM345 315h5v5h-5zM370 315h5v5h-5zM530 315h5v5h-5zM545 315h5v5h-5zM555 315h5v5h-5zM565 315h5v5h-5zM595 315h5v5h-5zM645 315h5v5h-5zM680 315h5v5h-5zM730 315h5v5h-5zM755 315h5v5h-5zM760 315h5v5h-5zM825 315h5v5h-5zM0 320h5v5h-5zM80 320h5v5h-5zM125 320h5v5h-5zM160 320h5v5h-5zM200 320h5v5h-5zM235 320h5v5h-5zM255 320h5v5h-5zM275 320h5v5h-5zM320 320h5v5h-5zM360 320h5v5h-5zM440 320h5v5h-5zM490 320h5v5h-5zM555 320h5v5h-5zM660 320h5v5h-5zM720 320h5v5h-5zM750 320h5v5h-5zM755 320h5v5h-5zM820 320h5v5h-5zM35 325h5v5h-5zM90 325h5v5h-5zM175 325h5v5h-5zM240 325h5v5h-5zM435 325h5v5h-5zM450 325h5v5h-5zM500 325h5v5h-5zM510 325h5v5h-5zM520 325h5v5h-5zM665 325h5v5h-5zM5 330h5v5h-5zM50 330h5v5h-5zM70 330h5v5h-5zM290 330h5v5h-5zM295 330h5v5h-5zM305 330h5v5h-5zM355 330h5v5h-5zM425 330h5v5h-5zM485 330h5v5h-5zM505 330h5v5h-5zM560 330h5v5h-5zM650 330h5v5h-5zM655 330h5v5h-5zM770 330h5v5h-5zM820 330h5v5h-5zM80 335h5v5h-5zM90 335h5v5h-5zM145 335h5v5h-5zM155 335h5v5h-5zM190 335h5v5h-5zM250 335h5v5h-5zM280 335h5v5h-5zM385 335h5v5h-5zM390 335h5v5h-5zM430 335h5v5h-5zM670 335h5v5h-5zM690 335h5v5h-5zM790 335h5v5h-5zM10 340h5v5h-5zM155 340h5v5h-5zM205 340h5v5h-5zM240 340h5v5h-5zM380 340h5v5h-5zM425 340h5v5h-5zM465 340h5v5h-5zM485 340h5v5h-5zM505 340h5v5h-5zM530 340h5v5h-5zM545 340h5v5h-5zM565 340h5v5h-5zM580 340h5v5h-5zM600 340h5v5h-5zM635 340h5v5h-5zM710 340h5v5h-5zM25 345h5v5h-5zM70 345h5v5h-5zM185 345h5v5h-5zM195 345h5v5h-5zM210 345h5v5h-5zM220 345h5v5h-5zM295 345h5v5h-5zM300 345h5v5h-5zM320 345h5v5h-5zM325 345h5v5h-5zM330 345h5v5h-5zM360 345h5v5h-5zM370 345h5v5h-5zM550 345h5v5h-5zM570 345h5v5h-5zM750 345h5v5h-5zM5 350h5v5h-5zM10 350h5v5h-5zM35 350h5v5h-5zM210 350h5v5h-5zM420 350h5v5h-5zM615 350h5v5h-5zM650 350h5v5h-5zM675 350h5v5h-5zM715 350h5v5h-5zM735 350h5v5h-5zM770 350h5v5h-5zM795 350h5v5h-5zM805 350h5v5h-5zM5 355h5v5h-5zM220 355h5v5h-5zM295 355h5v5h-5zM370 355h5v5h-5zM385 355h5v5h-5zM415 355h5v5h-5zM525 355h5v5h-5zM540 355h5v5h-5zM575 355h5v5h-5zM0 360h5v5h-5zM55 360h5v5h-5zM310 360h5v5h-5zM430 360h5v5h-5zM450 360h5v5h-5zM485 360h5v5h-5zM665 360h5v5h-5zM715 360h5v5h-5zM750 360h5v5h-5zM830 360h5v5h-5zM5 365h5v5h-5zM15 365h5v5h-5zM85 365h5v5h-5zM135 365h5v5h-5zM140 365h5v5h-5zM150 365h5v5h-5zM185 365h5v5h-5zM295 365h5v5h-5zM300 365h5v5h-5zM400 365h5v5h-5zM440 365h5v5h-5zM495 365h5v5h-5zM615 365h5v5h-5zM620 365h5v5h-5zM705 365h5v5h-5zM760 365h5v5h-5zM830 365h5v5h-5zM35 370h5v5h-5zM75 370h5v5h-5zM165 370h5v5h-5zM200 370h5v5h-5zM325 370h5v5h-5zM370 370h5v5h-5zM395 370h5v5h-5zM415 370h5v5h-5zM420 370h5v5h-5zM450 370h5v5h-5zM475 370h5v5h-5zM545 370h5v5h-5zM560 370h5v5h-5zM575 370h5v5h-5zM590 370h5v5h-5zM600 370h5v5h-5zM695 370h5v5h-5zM780 370h5v5h-5zM810 370h5v5h-5zM120 375h5v5h-5zM130 375h5v5h-5zM255 375h5v5h-5zM280 375h5v5h-5zM325 375h5v5h-5zM425 375h5v5h-5zM450 375h5v5h-5zM605 375h5v5h-5zM715 375h5v5h-5zM755 375h5v5h-5zM765 375h5v5h-5zM135 380h5v5h-5zM220 380h5v5h-5zM415 380h5v5h-5zM490 380h5v5h-5zM495 380h5v5h-5zM530 380h5v5h-5zM535 380h5v5h-5zM545 380h5v5h-5zM625 380h5v5h-5zM655 380h5v5h-5zM675 380h5v5h-5zM785 380h5v5h-5zM820 380h5v5h-5zM55 385h5v5h-5zM65 385h5v5h-5zM225 385h5v5h-5zM340 385h5v5h-5zM350 385h5v5h-5zM395 385h5v5h-5zM520 385h5v5h-5zM560 385h5v5h-5zM575 385h5v5h-5zM595 385h5v5h-5zM610 385h5v5h-5zM630 385h5v5h-5zM665 385h5v5h-5zM690 385h5v5h-5zM755 385h5v5h-5zM40 390h5v5h-5zM80 390h5v5h-5zM105 390h5v5h-5zM140 390h5v5h-5zM225 390h5v5h-5zM255 390h5v5h-5zM445 390h5v5h-5zM470 390h5v5h-5zM500 390h5v5h-5zM505 390h5v5h-5zM560 390h5v5h-5zM660 390h5v5h-5zM670 390h5v5h-5zM690 390h5v5h-5zM70 395h5v5h-5zM100 395h5v5h-5zM105 395h5v5h-5zM125 395h5v5h-5zM140 395h5v5h-5zM145 395h5v5h-5zM160 395h5v5h-5zM205 395h5v5h-5zM220 395h5v5h-5zM260 395h5v5h-5zM280 395h5v5h-5zM335 395h5v5h-5zM345 395h5v5h-5zM430 395h5v5h-5zM435 395h5v5h-5zM440 395h5v5h-5zM475 395h5v5h-5zM520 395h5v5h-5zM625 395h5v5h-5zM675 395h5v5h-5zM810 395h5v5h-5zM50 400h5v5h-5zM90 400h5v5h-5zM160 400h5v5h-5zM175 400h5v5h-5zM275 400h5v5h-5zM315 400h5v5h-5zM335 400h5v5h-5zM345 400h5v5h-5zM365 400h5v5h-5zM385 400h5v5h-5zM435 400h5v5h-5zM515 400h5v5h-5zM590 400h5v5h-5zM620 400h5v5h-5zM630 400h5v5h-5zM675 400h5v5h-5zM730 400h5v5h-5zM805 400h5v5h-5zM25 405h5v5h-5zM35 405h5v5h-5zM85 405h5v5h-5zM120 405h5v5h-5zM135 405h5v5h-5zM270 405h5v5h-5zM340 405h5v5h-5zM455 405h5v5h-5zM525 405h5v5h-5zM535 405h5v5h-5zM550 405h5v5h-5zM625 405h5v5h-5zM660 405h5v5h-5zM675 405h5v5h-5zM755 405h5v5h-5z"/></svg><div class="a" style="left:211px;top:94px;width:842px;height:713px;border:1px solid #fff"></div><svg class="a" style="left:9px;top:95px" width="9" height="10"><path d="M7.5 1 L2.2 5 L7.5 9" stroke="#ff00ff" stroke-width="2.6" fill="none"/></svg><div class="a px" style="left:28px;top:94px;font-size:13.5px;color:#fff"><span class="sx" style="transform:scaleX(1.250)">Sandboxels</span></div><div class="a px" style="left:216px;top:513px;font-size:13px;color:#fff"><span class="sx" style="transform:scaleX(1.280)">x186,y67</span></div><div class="a px" style="left:317px;top:513px;font-size:13px;color:#fff"><span class="sx" style="transform:scaleX(1.280)">Pxls:13365</span></div><div class="a px" style="left:439px;top:513px;font-size:13px;color:#fff"><span class="sx" style="transform:scaleX(1.280)">30tps</span></div><div class="a px" style="left:510px;top:513px;font-size:13px;color:#fff"><span class="sx" style="transform:scaleX(1.280)">3531</span></div><div class="btn" style="left:216px;top:530px;width:68px;height:23px;background:#000;border-color:#555"><span style="color:#eee;transform:scaleX(1.213)">Pause</span></div><div class="btn" style="left:293px;top:530px;width:32px;height:23px;background:#000;border-color:#555"><span style="color:#eee;font-size:19px;font-variant:normal">></span></div><div class="btn" style="left:333px;top:530px;width:33px;height:23px;background:#000;border-color:#555"><span style="color:#eee;font-size:19px;font-variant:normal">−</span></div><div class="btn" style="left:374px;top:530px;width:32px;height:23px;background:#000;border-color:#555"><span style="color:#eee;font-size:19px;font-variant:normal">+</span></div><div class="btn" style="left:416px;top:530px;width:66px;height:23px;background:#000;border-color:#555"><span style="color:#eee;transform:scaleX(1.216)">Reset</span></div><div class="btn" style="left:491px;top:530px;width:86px;height:23px;background:#000;border-color:#555"><span style="color:#eee;transform:scaleX(1.210)">Replace</span></div><div class="btn" style="left:586px;top:530px;width:32px;height:23px;background:#000;border-color:#555"><span style="color:#eee;transform:scaleX(1.000)">E</span></div><div class="btn" style="left:626px;top:530px;width:50px;height:23px;background:#000;border-color:#555"><span style="color:#eee;transform:scaleX(1.309)">Tps</span></div><div class="btn" style="left:685px;top:530px;width:59px;height:23px;background:#000;border-color:#555"><span style="color:#eee;transform:scaleX(1.482)">Info</span></div><div class="btn" style="left:753px;top:530px;width:68px;height:23px;background:#000;border-color:#555"><span style="color:#eee;transform:scaleX(1.256)">Saves</span></div><div class="btn" style="left:829px;top:530px;width:60px;height:23px;background:#000;border-color:#555"><span style="color:#eee;transform:scaleX(1.130)">Mods</span></div><div class="btn" style="left:898px;top:530px;width:94px;height:23px;background:#000;border-color:#555"><span style="color:#eee;transform:scaleX(1.311)">Settings</span></div><div class="btn" style="left:216px;top:557px;width:58px;height:24px;background:#ff0000;border:none"><span style="color:#eee;transform:scaleX(1.215)">Heat</span></div><div class="btn" style="left:285px;top:557px;width:58px;height:24px;background:#0000ff;border:none"><span style="color:#eee;transform:scaleX(1.130)">Cool</span></div><div class="btn" style="left:351px;top:557px;width:69px;height:24px;background:#ffb3ff;border:none"><span style="color:#222;transform:scaleX(1.227);text-shadow:none">Erase</span></div><div class="btn" style="left:428px;top:557px;width:58px;height:24px;background:#c0c8b0;border:none"><span style="color:#222;transform:scaleX(1.119);text-shadow:none">Drag</span></div><div class="btn" style="left:497px;top:557px;width:57px;height:24px;background:linear-gradient(120deg,#ffb0b0,#ffe8a0 30%,#c0ffb0 55%,#a0e8ff 80%,#b0a0ff);border:none"><span style="color:#222;transform:scaleX(1.333);text-shadow:none">Pick</span></div><div class="btn" style="left:564px;top:557px;width:48px;height:24px;background:linear-gradient(135deg,#ece8cc,#d8d0b0 60%,#b8b090);border:none"><span style="color:#222;transform:scaleX(1.293);text-shadow:none">Mix</span></div><div class="btn" style="left:622px;top:557px;width:77px;height:24px;background:linear-gradient(90deg,#3e7a74,#6a9a94 50%,#4a7a78);border:none"><span style="color:#eee;transform:scaleX(1.173)">Lookup</span></div><div class="btn" style="left:708px;top:557px;width:68px;height:24px;background:#ffff00;border:none"><span style="color:#222;transform:scaleX(1.161);text-shadow:none">Shock</span></div><div class="btn" style="left:784px;top:557px;width:68px;height:24px;background:linear-gradient(120deg,#f07070,#e0e070 30%,#70d070 50%,#50a0e0 75%,#c060e0);border:none"><span style="color:#eee;transform:scaleX(1.362)">Paint</span></div><div class="btn" style="left:861px;top:557px;width:68px;height:24px;background:linear-gradient(180deg,#7a7a7a,#6a6a6a);border:none"><span style="color:#eee;transform:scaleX(1.149)">Smash</span></div><div class="a" style="left:212px;top:585px;width:840px;height:22px;background:#222;overflow:hidden"><div class="cat" style="left:0px;top:0;width:56px;"><span style="color:#eee;transform:scaleX(1.190)">Land</span></div><div class="cat" style="left:56px;top:0;width:84px;"><span style="color:#eee;transform:scaleX(1.405)">Liquids</span></div><div class="cat" style="left:140px;top:0;width:56px;"><span style="color:#eee;transform:scaleX(1.488)">Life</span></div><div class="cat" style="left:196px;top:0;width:84px;"><span style="color:#eee;transform:scaleX(1.147)">Powders</span></div><div class="cat" style="left:280px;top:0;width:74px;"><span style="color:#eee;transform:scaleX(1.332)">Solids</span></div><div class="cat" style="left:354px;top:0;width:74px;"><span style="color:#eee;transform:scaleX(1.185)">Energy</span></div><div class="cat" style="left:428px;top:0;width:84px;"><span style="color:#eee;transform:scaleX(1.105)">Weapons</span></div><div class="cat" style="left:512px;top:0;width:66px;"><span style="color:#eee;transform:scaleX(1.179)">Gases</span></div><div class="cat" style="left:578px;top:0;width:56px;"><span style="color:#eee;transform:scaleX(1.177)">Food</span></div><div class="cat" style="left:634px;top:0;width:93px;background:#777;"><span style="color:#eee;transform:scaleX(1.225)">Machines</span></div><div class="cat" style="left:727px;top:0;width:83px;"><span style="color:#eee;transform:scaleX(1.313)">Special</span></div><div class="cat" style="left:810px;top:0;width:88px;"><span style="color:#eee;transform:scaleX(1.485)">States</span></div></div><div class="a" style="left:212px;top:607px;width:840px;height:6px;background:#4a4a4a"></div><div class="a" style="left:212px;top:607px;width:798px;height:6px;background:#777;border-radius:3px"></div><div class="btn" style="left:228px;top:623px;width:60px;height:23px;background:#4e0f0b;"><span style="color:#eee;transform:scaleX(1.229)">Wire</span></div><div class="btn" style="left:296px;top:623px;width:86px;height:23px;background:#9c6b2c;"><span style="color:#eee;transform:scaleX(1.244)">Battery</span></div><div class="btn" style="left:391px;top:623px;width:77px;height:23px;background:#f2f200;border:1.5px solid #00ff00;box-shadow:0 0 9px 3px rgba(0,170,0,.55)"><span style="color:#111;transform:scaleX(1.179);text-shadow:none">Cloner</span></div><div class="btn" style="left:476px;top:623px;width:78px;height:23px;background:#c9c9b1;"><span style="color:#222;transform:scaleX(1.199);text-shadow:none">Sensor</span></div><div class="btn" style="left:563px;top:623px;width:76px;height:23px;background:#8e1313;"><span style="color:#eee;transform:scaleX(1.205)">Heater</span></div><div class="btn" style="left:647px;top:623px;width:78px;height:23px;background:#12157f;"><span style="color:#eee;transform:scaleX(1.184)">Cooler</span></div><div class="btn" style="left:733px;top:623px;width:77px;height:23px;background:#dcbdad;"><span style="color:#eee;transform:scaleX(1.164)">Burner</span></div><div class="btn" style="left:819px;top:623px;width:122px;height:23px;background:#d51515;"><span style="color:#eee;transform:scaleX(1.209)">Superheater</span></div><div class="btn" style="left:949px;top:623px;width:87px;height:23px;background:#1414d2;"><span style="color:#eee;transform:scaleX(1.272)">Freezer</span></div><div class="btn" style="left:224px;top:651px;width:68px;height:23px;background:#807b6c;"><span style="color:#eee;transform:scaleX(1.183)">Ewall</span></div><div class="btn" style="left:301px;top:651px;width:99px;height:23px;background:#e3e300;"><span style="color:#111;transform:scaleX(1.300);text-shadow:none">E-cloner</span></div><div class="btn" style="left:409px;top:651px;width:118px;height:23px;background:#8b8b15;"><span style="color:#eee;transform:scaleX(1.152)">SlowCloner</span></div><div class="btn" style="left:536px;top:651px;width:125px;height:23px;background:#eeee17;"><span style="color:#111;transform:scaleX(1.135);text-shadow:none">ClonePowder</span></div><div class="btn" style="left:670px;top:651px;width:154px;height:23px;background:#caca90;"><span style="color:#111;transform:scaleX(1.247);text-shadow:none">FloatingCloner</span></div><div class="btn" style="left:832px;top:651px;width:64px;height:23px;background:#6b0000;"><span style="color:#eee;transform:scaleX(1.251)">LedR</span></div><div class="btn" style="left:904px;top:651px;width:64px;height:23px;background:#006b00;"><span style="color:#eee;transform:scaleX(1.211)">LedG</span></div><div class="btn" style="left:976px;top:651px;width:64px;height:23px;background:#00006b;"><span style="color:#eee;transform:scaleX(1.246)">LedB</span></div><div class="btn" style="left:233px;top:678px;width:109px;height:23px;background:#705a3c;"><span style="color:#eee;transform:scaleX(1.312)">TeslaCoil</span></div><div class="btn" style="left:350px;top:678px;width:109px;height:23px;background:#a3a394;"><span style="color:#eee;transform:scaleX(1.286)">LightBulb</span></div><div class="btn" style="left:467px;top:678px;width:87px;height:23px;background:#72724a;"><span style="color:#eee;transform:scaleX(1.179)">Shocker</span></div><div class="btn" style="left:562px;top:678px;width:145px;height:23px;background:#8c8c84;"><span style="color:#eee;transform:scaleX(1.238)">PressurePlate</span></div><div class="btn" style="left:715px;top:678px;width:158px;height:23px;background:#24242e;"><span style="color:#eee;transform:scaleX(1.284)">Right Conveyor</span></div><div class="btn" style="left:882px;top:678px;width:149px;height:23px;background:#24242e;"><span style="color:#eee;transform:scaleX(1.285)">Left Conveyor</span></div><div class="btn" style="left:438px;top:706px;width:194px;height:23px;background:#2c2c39;"><span style="color:#eee;transform:scaleX(1.263)">Right Autoconveyor</span></div><div class="btn" style="left:641px;top:706px;width:185px;height:23px;background:#2c2c39;"><span style="color:#eee;transform:scaleX(1.260)">Left Autoconveyor</span></div><div class="a px" style="left:216px;top:735px;font-size:15px;color:#fff;line-height:22px"><span class="sx" style="transform:scaleX(1.245)"><span style="color:#ff00ff;text-shadow:0 0 6px rgba(255,0,255,.6)">Changelog</span><span style="color:#fff"> • </span><span style="color:#ff00ff;text-shadow:0 0 6px rgba(255,0,255,.6)">Feedback</span><span style="color:#fff"> • </span><span style="color:#ff00ff;text-shadow:0 0 6px rgba(255,0,255,.6)">Wiki</span><span style="color:#fff"> • </span><span style="color:#ff00ff;text-shadow:0 0 6px rgba(255,0,255,.6)">YouTube</span><span style="color:#fff"> • </span><span style="color:#ff00ff;text-shadow:0 0 6px rgba(255,0,255,.6)">Discord</span><span style="color:#fff"> • </span><span style="color:#ff00ff;text-shadow:0 0 6px rgba(255,0,255,.6);display:inline-block;transform:scaleX(0.93);transform-origin:0 50%">Install Offline</span><br>v1.9 • 494 elements, including 4 hidden ones.<br>©2021-2023. All Rights Reserved. <span style="color:#00ffff">R74n</span></span></div><div class="a" style="left:0;top:827px;width:1264px;text-align:center;font-size:13.5px;color:#fff;white-space:nowrap">Support development by subscribing on <span style="color:#ff00ff">our Patreon</span>! Many benefits!!</div><div class="a" style="left:0;top:856px;width:1264px;text-align:center;font-size:13.4px;color:#fff;white-space:nowrap">Want your ad here? Email us at <span style="color:#ff00ff">contact@R74n.com</span>!</div><div class="a" style="left:42px;top:901px;font-size:20.3px;font-weight:bold;color:#fff;white-space:nowrap">Sandboxels Introduction</div><div class="a" style="left:1000px;top:901px;width:222px;text-align:right;font-size:20px;font-weight:bold;color:#fff;white-space:nowrap">Controls</div><div class="a" style="left:42px;top:941px;font-size:13px;line-height:15px;letter-spacing:0.19px;color:#fff;white-space:nowrap"><b>Sandboxels</b> is a free falling-sand simulator that can be played in your browser. It features heat<br>simulation, electricity, density, chemical reactions, cooking, and fire spread. With over 400 unique<br>elements to play with, Sandboxels is a great way to pass the time and relax.</div><div class="a" style="left:780px;top:941px;width:442px;height:60px;background:#999"></div><div class="a" style="left:781px;top:942px;width:144px;height:35px;background:#222"></div><div class="a" style="left:926px;top:942px;width:295px;height:35px;background:#222"></div><div class="a" style="left:781px;top:978px;width:144px;height:30px;background:#2a2a2a"></div><div class="a" style="left:926px;top:978px;width:295px;height:30px;background:#2a2a2a"></div><div class="a" style="left:788px;top:951px;font-size:13.3px;color:#fff;white-space:nowrap">Draw pixels</div><div class="a" style="left:934px;top:949px;width:70px;height:21px;background:#5c5c5c;border:1px solid #3a3a3a;border-radius:3px;font-size:12px;font-weight:bold;color:#fff;text-align:center;line-height:19px;white-space:nowrap">Left Click</div><div class="a" style="left:1264px;top:81px;width:16px;height:903px;background:#f1f1f1"></div><div class="a" style="left:1266px;top:98px;width:13px;height:492px;background:#c1c1c1"></div><svg class="a" style="left:1264px;top:81px" width="16" height="17"><path d="M4.5 10.5 L8 6.8 L11.5 10.5Z" fill="#a3a3a3"/></svg><svg class="a" style="left:1264px;top:967px" width="16" height="17"><path d="M4.5 8 L8 11.8 L11.5 8Z" fill="#505050"/></svg><div class="a" style="left:0;top:984px;width:1280px;height:40px;background:#111"></div><svg class="a" style="left:16px;top:996px" width="17" height="17"><path d="M0 2.3 L7.2 1.3 V7.8 H0Z M8.2 1.1 L17 0 V7.8 H8.2Z M0 8.8 H7.2 V15.5 L0 14.6Z M8.2 8.8 H17 V17 L8.2 15.8Z" fill="#fff"/></svg><svg class="a" style="left:62px;top:995px" width="19" height="19"><circle cx="11.5" cy="7.5" r="5.8" stroke="#fff" stroke-width="1.3" fill="none"/><path d="M7.4 11.6 L1 18" stroke="#fff" stroke-width="1.5"/></svg><svg class="a" style="left:111px;top:996px" width="18" height="17"><path d="M0.7 0 V2 H12 V0 M0.7 17 V15 H12 V17" stroke="#fff" stroke-width="1.2" fill="none"/><rect x="1" y="5" width="11" height="7" stroke="#fff" stroke-width="1.2" fill="none"/><rect x="15" y="0" width="1.3" height="3" fill="#fff"/><rect x="14.7" y="5" width="2" height="2.5" fill="#fff"/><rect x="15" y="9" width="1.3" height="8" fill="#fff"/></svg><svg class="a" style="left:158px;top:992px" width="24" height="24"><circle cx="12" cy="12" r="11" fill="#222"/><circle cx="12" cy="12" r="7.5" fill="#c9c3b4"/><circle cx="12" cy="12" r="2" fill="#888"/><path d="M2 10 Q4 2 12 1.5 L12 4 Q6 4.5 4.8 10Z" fill="#e0302a"/><path d="M22 14 Q20 22 12 22.5 L12 20 Q18 19.5 19.2 14Z" fill="#2a6ae0"/></svg><svg class="a" style="left:208px;top:994px" width="22" height="20"><path d="M0 2 H8 L10 4 H22 V19 H0Z" fill="#f6d27a"/><rect x="0" y="5" width="22" height="14" fill="#ffe8a0"/><path d="M5 19 V13 H17 V19 H14 V16 H8 V19Z" fill="#3aa0e0"/></svg><svg class="a" style="left:256px;top:992px" width="24" height="24"><path d="M3 2 H23 V16 H3Z" fill="#3a6ad0"/><rect x="5" y="4" width="16" height="10" fill="#a8c8f0"/><rect x="1" y="7" width="15" height="7" fill="#1a4ab0" stroke="#e0e8f0" stroke-width="1"/><ellipse cx="14" cy="21" rx="6" ry="2.5" fill="#d0d0d0"/><rect x="13" y="16" width="2" height="4" fill="#bbb"/></svg><svg class="a" style="left:306px;top:992px" width="24" height="24"><ellipse cx="12" cy="12" rx="11" ry="11.5" fill="#e0112b"/><ellipse cx="12" cy="12" rx="4.6" ry="8.6" fill="#111"/></svg><svg class="a" style="left:355px;top:992px" width="24" height="24"><defs><linearGradient id="eg" x1="0" y1="0.2" x2="1" y2="0.7"><stop offset="0" stop-color="#2bb5f0"/><stop offset="0.55" stop-color="#27b8c8"/><stop offset="1" stop-color="#62e06a"/></linearGradient></defs><circle cx="12" cy="12" r="11.5" fill="url(#eg)"/><path d="M0.6 11 Q1 23.5 12 23.5 Q19 23.5 22.5 17.5 Q18 20.5 14 19 Q9.5 17 10 13 Q7 10.5 4 11.5 Q1.5 12.5 0.6 11Z" fill="#0d5cb0"/><path d="M3 13 Q4 21 12 22.5 Q7 19 8 14 Q6 12 3 13Z" fill="#1a80d8"/><circle cx="13.8" cy="12.6" r="2.9" fill="#111"/><path d="M13.8 15.5 Q18 16.5 22.6 15 Q20 17.5 16 17.2 Q13 16.8 13.8 15.5Z" fill="#111"/></svg><div class="a" style="left:392px;top:984px;width:48px;height:40px;background:#333"></div><div class="a" style="left:392px;top:1022px;width:48px;height:2px;background:#76b9ed"></div><svg class="a" style="left:404px;top:992px" width="24" height="24"><circle cx="12" cy="12" r="12" fill="#db4437"/><path d="M12 12 L1.6 6 A12 12 0 0 0 12 24Z" fill="#0f9d58"/><path d="M12 12 L22.4 6 A12 12 0 0 1 12 24Z" fill="#ffcd40"/><circle cx="12" cy="12" r="5.3" fill="#fff"/><circle cx="12" cy="12" r="4.2" fill="#4285f4"/></svg><svg class="a" style="left:1105px;top:998px" width="14" height="9"><path d="M1 8 L7 1.5 L13 8" stroke="#fff" stroke-width="1.2" fill="none"/></svg><div class="a" style="left:1131px;top:996px;font-size:11.5px;letter-spacing:-0.2px;color:#fff;white-space:nowrap">ENG</div><div class="a" style="left:1160px;top:988px;width:66px;text-align:center;font-size:11.5px;letter-spacing:-0.35px;line-height:17px;color:#fff;white-space:nowrap">16:21<br>02.11.2023</div><svg class="a" style="left:1238px;top:995px" width="19" height="19"><path d="M1 1 H18 V13 H12 L9.5 15.5 L7 13 H1Z" stroke="#fff" stroke-width="1.3" fill="none"/></svg><div class="a" style="left:1275px;top:984px;width:1px;height:40px;background:#555"></div></body></html>
